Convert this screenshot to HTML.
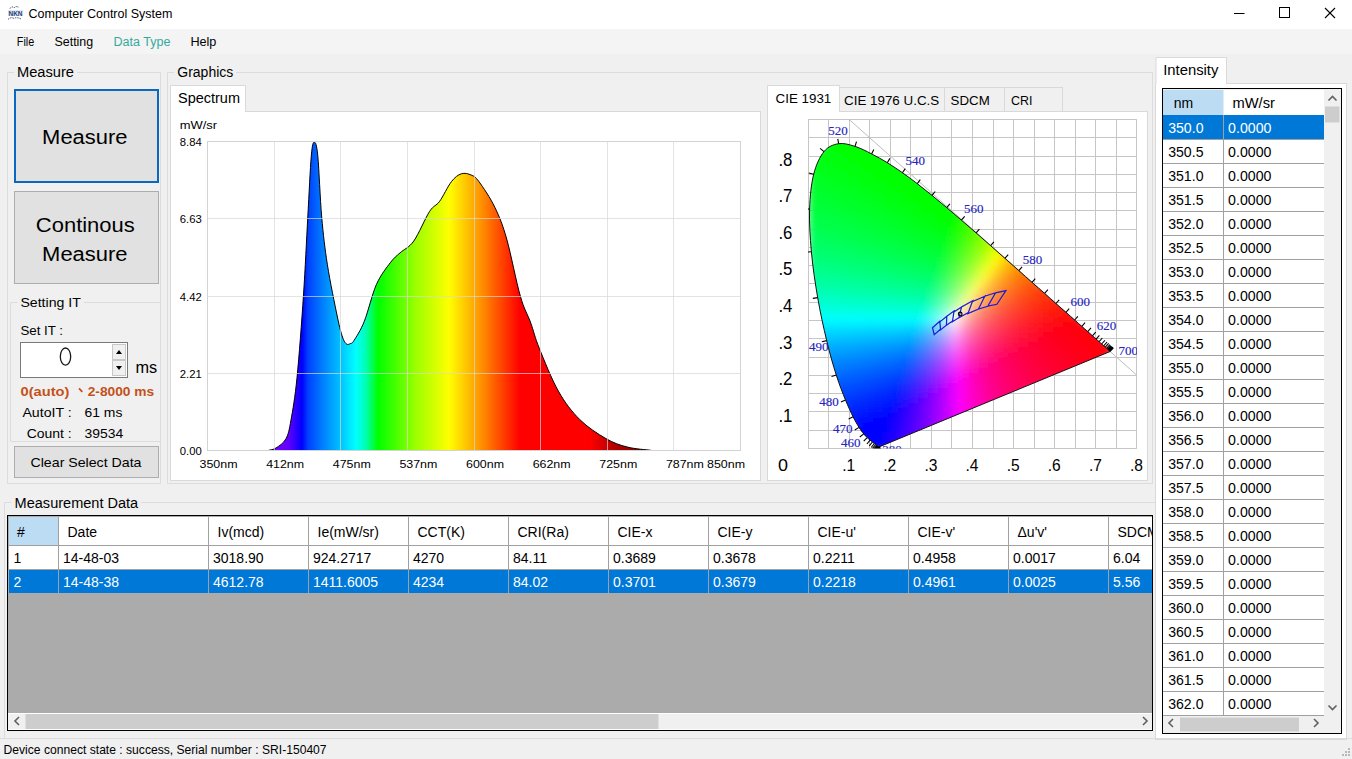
<!DOCTYPE html>
<html><head><meta charset="utf-8"><title>Computer Control System</title>
<style>html,body{margin:0;padding:0;background:#f0f0f0;overflow:hidden;width:1352px;height:759px}svg{display:block}text{white-space:pre}</style>
</head><body><svg width="1352" height="759" viewBox="0 0 1352 759" font-family='"Liberation Sans", sans-serif'><rect x="0" y="0" width="1352" height="759" fill="#f0f0f0" />
<rect x="0" y="0" width="1352" height="29" fill="#ffffff" />
<g><path d="M10,8.5 Q12,5.5 14,8 Q16,5.5 19,7.5" fill="none" stroke="#3a4a6a" stroke-width="1" stroke-dasharray="1.5,1"/><rect x="8" y="10" width="15" height="6" fill="#dfe8f8"/><text x="15.5" y="16" font-size="8" font-weight="bold" fill="#2a3f72" text-anchor="middle" textLength="14" lengthAdjust="spacingAndGlyphs">NKN</text><path d="M8,19.5 Q11,16.5 14,18.5 Q17,16.5 22,19.5" fill="none" stroke="#3a4a6a" stroke-width="1" stroke-dasharray="1.5,1"/></g>
<text x="28.5" y="18" font-size="12.5" fill="#000" textLength="144" lengthAdjust="spacingAndGlyphs" >Computer Control System</text>
<line x1="1234" y1="13.5" x2="1244.5" y2="13.5" stroke="#000" stroke-width="1" />
<rect x="1279.5" y="7.5" width="10" height="10" fill="none" stroke="#000" stroke-width="1" />
<line x1="1325" y1="8" x2="1335" y2="18" stroke="#000" stroke-width="1.1" />
<line x1="1335" y1="8" x2="1325" y2="18" stroke="#000" stroke-width="1.1" />
<defs><linearGradient id="menug" x1="0" y1="0" x2="0" y2="1"><stop offset="0" stop-color="#f6f6f6"/><stop offset="1" stop-color="#f0f0f0"/></linearGradient></defs>
<rect x="0" y="29" width="1352" height="25" fill="#f4f4f4" />
<text x="16.8" y="46" font-size="12.5" fill="#000" textLength="17.4" lengthAdjust="spacingAndGlyphs" >File</text>
<text x="54.5" y="46" font-size="12.5" fill="#000" textLength="38.7" lengthAdjust="spacingAndGlyphs" >Setting</text>
<text x="113.4" y="46" font-size="12.5" fill="#34aa9e" textLength="57" lengthAdjust="spacingAndGlyphs" >Data Type</text>
<text x="190.4" y="46" font-size="12.5" fill="#000" textLength="26" lengthAdjust="spacingAndGlyphs" >Help</text>
<path d="M14,72.5 H7.5 V483.5 H160.5 V72.5 H77" fill="none" stroke="#dcdcdc" stroke-width="1"/>
<text x="17" y="77" font-size="14" fill="#000" textLength="57" lengthAdjust="spacingAndGlyphs" >Measure</text>
<rect x="15" y="90" width="143" height="92" fill="#e1e1e1" stroke="#0a68c0" stroke-width="2" />
<text x="42.1" y="143.7" font-size="20" fill="#000" textLength="85.4" lengthAdjust="spacingAndGlyphs" >Measure</text>
<rect x="14.5" y="191.5" width="144" height="92" fill="#e1e1e1" stroke="#adadad" stroke-width="1" />
<text x="35.8" y="231.9" font-size="20" fill="#000" textLength="99" lengthAdjust="spacingAndGlyphs" >Continous</text>
<text x="42.1" y="260.7" font-size="20" fill="#000" textLength="85.4" lengthAdjust="spacingAndGlyphs" >Measure</text>
<path d="M17.4,302.5 H10.5 V441.5 H160.5 V302.5 H83.8" fill="none" stroke="#dcdcdc" stroke-width="1"/>
<text x="20.4" y="306.7" font-size="13" fill="#000" textLength="60.4" lengthAdjust="spacingAndGlyphs" >Setting IT</text>
<text x="20.4" y="334.8" font-size="13" fill="#000" textLength="42.6" lengthAdjust="spacingAndGlyphs" >Set IT :</text>
<rect x="20.5" y="342.5" width="107" height="35" fill="#ffffff" stroke="#7a7a7a" stroke-width="1" />
<ellipse cx="65.5" cy="356.6" rx="5.2" ry="8.6" fill="none" stroke="#1a1a1a" stroke-width="1.3"/>
<rect x="112.5" y="344.5" width="13" height="15" fill="#f0f0f0" stroke="#c8c8c8" stroke-width="1" />
<rect x="112.5" y="360.5" width="13" height="15" fill="#f0f0f0" stroke="#c8c8c8" stroke-width="1" />
<path d="M116,354 L122,354 L119,350 Z" fill="#000"/>
<path d="M116,366 L122,366 L119,370 Z" fill="#000"/>
<text x="135.5" y="372.6" font-size="16.5" fill="#000" textLength="21.7" lengthAdjust="spacingAndGlyphs" >ms</text>
<text x="20.5" y="395.8" font-size="13" fill="#c4501a" font-weight="bold" textLength="48.9" lengthAdjust="spacingAndGlyphs" >0(auto)</text>
<line x1="79" y1="388.3" x2="82.3" y2="391.8" stroke="#c4501a" stroke-width="1.8" />
<text x="87.7" y="395.8" font-size="13" fill="#c4501a" font-weight="bold" textLength="66.5" lengthAdjust="spacingAndGlyphs" >2-8000 ms</text>
<text x="22.4" y="416.7" font-size="13" fill="#000" textLength="49.3" lengthAdjust="spacingAndGlyphs" >AutoIT :</text>
<text x="84.5" y="416.7" font-size="13" fill="#000" textLength="37.9" lengthAdjust="spacingAndGlyphs" >61 ms</text>
<text x="26.7" y="437.9" font-size="13" fill="#000" textLength="45" lengthAdjust="spacingAndGlyphs" >Count :</text>
<text x="84.5" y="437.9" font-size="13" fill="#000" textLength="38.7" lengthAdjust="spacingAndGlyphs" >39534</text>
<rect x="14.5" y="446.5" width="144" height="31" fill="#e1e1e1" stroke="#adadad" stroke-width="1" />
<text x="30.5" y="467" font-size="13" fill="#000" textLength="111" lengthAdjust="spacingAndGlyphs" >Clear Select Data</text>
<path d="M174,72.5 H167.5 V483.5 H1152.5 V72.5 H236" fill="none" stroke="#dcdcdc" stroke-width="1"/>
<text x="177.3" y="77" font-size="14" fill="#000" textLength="56" lengthAdjust="spacingAndGlyphs" >Graphics</text>
<rect x="170.5" y="111.5" width="590" height="369" fill="#ffffff" stroke="#d9d9d9" stroke-width="1" />
<path d="M170.5,112 V85.5 H245.5 V112" fill="#ffffff" stroke="#d9d9d9" stroke-width="1"/>
<rect x="171" y="111" width="74" height="2" fill="#ffffff" />
<text x="178" y="103.1" font-size="14" fill="#000" textLength="62" lengthAdjust="spacingAndGlyphs" >Spectrum</text>
<defs><linearGradient id="specg" gradientUnits="userSpaceOnUse" x1="268" y1="0" x2="651" y2="0"><stop offset="0.0000" stop-color="#8000ff"/><stop offset="0.0548" stop-color="#6000ff"/><stop offset="0.0888" stop-color="#0000ff"/><stop offset="0.1044" stop-color="#0040ff"/><stop offset="0.1436" stop-color="#0080ff"/><stop offset="0.1880" stop-color="#00c0ff"/><stop offset="0.2298" stop-color="#00ffff"/><stop offset="0.2559" stop-color="#00ffb0"/><stop offset="0.2872" stop-color="#00ff00"/><stop offset="0.3290" stop-color="#40ff00"/><stop offset="0.3838" stop-color="#99ff00"/><stop offset="0.4726" stop-color="#ffff00"/><stop offset="0.5509" stop-color="#ff9900"/><stop offset="0.6580" stop-color="#ff0000"/><stop offset="0.8407" stop-color="#ff0000"/><stop offset="0.9060" stop-color="#b00000"/><stop offset="1.0000" stop-color="#800000"/></linearGradient></defs>
<rect x="207.5" y="141.5" width="533" height="309" fill="#ffffff" stroke="#d3d3d3" stroke-width="1" />
<path d="M268.7,450.3 C269.9,449.9 273.1,449.9 276.0,448.0 C278.9,446.1 283.5,443.4 286.0,438.7 C288.5,434.0 289.2,430.1 291.0,420.0 C292.8,409.9 294.9,398.6 297.0,377.8 C299.1,357.0 301.7,321.8 303.5,295.0 C305.3,268.2 306.5,240.2 307.8,217.0 C309.1,193.8 310.2,168.5 311.3,156.0 C312.4,143.5 313.2,142.2 314.3,142.2 C315.4,142.2 316.6,143.5 317.8,156.0 C319.0,168.5 320.1,198.9 321.7,217.0 C323.3,235.1 324.8,248.1 327.4,264.8 C330.0,281.5 334.9,305.0 337.4,317.0 C339.9,329.0 341.0,332.5 342.5,337.0 C344.0,341.5 345.2,342.9 346.5,344.0 C347.8,345.1 349.2,344.1 350.5,343.5 C351.8,342.9 351.7,344.2 354.0,340.5 C356.3,336.8 360.6,330.7 364.3,321.3 C368.1,311.9 372.1,294.1 376.5,284.3 C380.9,274.5 386.5,267.8 390.4,262.6 C394.3,257.4 396.1,256.5 400.0,252.9 C403.9,249.3 408.9,247.9 413.8,241.0 C418.7,234.1 425.3,218.0 429.6,211.4 C433.9,204.8 435.9,206.4 439.5,201.5 C443.1,196.6 447.8,186.3 451.4,181.7 C455.0,177.1 458.0,174.9 461.3,173.8 C464.6,172.7 468.2,173.7 471.1,175.0 C474.1,176.3 475.0,176.3 479.0,181.7 C483.0,187.1 490.3,197.8 494.9,207.4 C499.5,217.0 502.5,224.2 506.7,239.0 C510.9,253.8 516.3,282.2 520.3,296.0 C524.2,309.8 527.2,313.3 530.4,322.0 C533.6,330.7 534.6,336.8 539.3,348.3 C543.9,359.8 551.6,379.1 558.3,391.0 C565.0,402.9 571.8,411.6 579.7,419.5 C587.6,427.4 597.9,433.9 605.8,438.5 C613.7,443.1 619.6,445.0 627.1,447.0 C634.6,449.0 646.9,449.8 650.9,450.3 L650.9,450.5 L268.7,450.5 Z" fill="url(#specg)"/>
<path d="M268.7,450.3 C269.9,449.9 273.1,449.9 276.0,448.0 C278.9,446.1 283.5,443.4 286.0,438.7 C288.5,434.0 289.2,430.1 291.0,420.0 C292.8,409.9 294.9,398.6 297.0,377.8 C299.1,357.0 301.7,321.8 303.5,295.0 C305.3,268.2 306.5,240.2 307.8,217.0 C309.1,193.8 310.2,168.5 311.3,156.0 C312.4,143.5 313.2,142.2 314.3,142.2 C315.4,142.2 316.6,143.5 317.8,156.0 C319.0,168.5 320.1,198.9 321.7,217.0 C323.3,235.1 324.8,248.1 327.4,264.8 C330.0,281.5 334.9,305.0 337.4,317.0 C339.9,329.0 341.0,332.5 342.5,337.0 C344.0,341.5 345.2,342.9 346.5,344.0 C347.8,345.1 349.2,344.1 350.5,343.5 C351.8,342.9 351.7,344.2 354.0,340.5 C356.3,336.8 360.6,330.7 364.3,321.3 C368.1,311.9 372.1,294.1 376.5,284.3 C380.9,274.5 386.5,267.8 390.4,262.6 C394.3,257.4 396.1,256.5 400.0,252.9 C403.9,249.3 408.9,247.9 413.8,241.0 C418.7,234.1 425.3,218.0 429.6,211.4 C433.9,204.8 435.9,206.4 439.5,201.5 C443.1,196.6 447.8,186.3 451.4,181.7 C455.0,177.1 458.0,174.9 461.3,173.8 C464.6,172.7 468.2,173.7 471.1,175.0 C474.1,176.3 475.0,176.3 479.0,181.7 C483.0,187.1 490.3,197.8 494.9,207.4 C499.5,217.0 502.5,224.2 506.7,239.0 C510.9,253.8 516.3,282.2 520.3,296.0 C524.2,309.8 527.2,313.3 530.4,322.0 C533.6,330.7 534.6,336.8 539.3,348.3 C543.9,359.8 551.6,379.1 558.3,391.0 C565.0,402.9 571.8,411.6 579.7,419.5 C587.6,427.4 597.9,433.9 605.8,438.5 C613.7,443.1 619.6,445.0 627.1,447.0 C634.6,449.0 646.9,449.8 650.9,450.3" fill="none" stroke="#000" stroke-width="1"/>
<line x1="274.5" y1="141.5" x2="274.5" y2="450.5" stroke="rgba(215,215,215,0.7)" stroke-width="1" />
<line x1="340.5" y1="141.5" x2="340.5" y2="450.5" stroke="rgba(215,215,215,0.7)" stroke-width="1" />
<line x1="407.5" y1="141.5" x2="407.5" y2="450.5" stroke="rgba(215,215,215,0.7)" stroke-width="1" />
<line x1="474.5" y1="141.5" x2="474.5" y2="450.5" stroke="rgba(215,215,215,0.7)" stroke-width="1" />
<line x1="540.5" y1="141.5" x2="540.5" y2="450.5" stroke="rgba(215,215,215,0.7)" stroke-width="1" />
<line x1="607.5" y1="141.5" x2="607.5" y2="450.5" stroke="rgba(215,215,215,0.7)" stroke-width="1" />
<line x1="673.5" y1="141.5" x2="673.5" y2="450.5" stroke="rgba(215,215,215,0.7)" stroke-width="1" />
<line x1="207.5" y1="218.5" x2="740.5" y2="218.5" stroke="rgba(215,215,215,0.7)" stroke-width="1" />
<line x1="207.5" y1="296.5" x2="740.5" y2="296.5" stroke="rgba(215,215,215,0.7)" stroke-width="1" />
<line x1="207.5" y1="373.5" x2="740.5" y2="373.5" stroke="rgba(215,215,215,0.7)" stroke-width="1" />
<rect x="207.5" y="141.5" width="533" height="309" fill="none" stroke="#d3d3d3" stroke-width="1" />
<text x="179.7" y="128.8" font-size="10.5" fill="#000" textLength="37.4" lengthAdjust="spacingAndGlyphs" >mW/sr</text>
<text x="179.8" y="146.0" font-size="10.5" fill="#000" textLength="22" lengthAdjust="spacingAndGlyphs" >8.84</text>
<text x="179.8" y="223.25" font-size="10.5" fill="#000" textLength="22" lengthAdjust="spacingAndGlyphs" >6.63</text>
<text x="179.8" y="300.5" font-size="10.5" fill="#000" textLength="22" lengthAdjust="spacingAndGlyphs" >4.42</text>
<text x="179.8" y="377.75" font-size="10.5" fill="#000" textLength="22" lengthAdjust="spacingAndGlyphs" >2.21</text>
<text x="179.8" y="455.0" font-size="10.5" fill="#000" textLength="22" lengthAdjust="spacingAndGlyphs" >0.00</text>
<text x="199.5" y="468" font-size="10.5" fill="#000" textLength="38" lengthAdjust="spacingAndGlyphs" >350nm</text>
<text x="266.125" y="468" font-size="10.5" fill="#000" textLength="38" lengthAdjust="spacingAndGlyphs" >412nm</text>
<text x="332.75" y="468" font-size="10.5" fill="#000" textLength="38" lengthAdjust="spacingAndGlyphs" >475nm</text>
<text x="399.375" y="468" font-size="10.5" fill="#000" textLength="38" lengthAdjust="spacingAndGlyphs" >537nm</text>
<text x="466.0" y="468" font-size="10.5" fill="#000" textLength="38" lengthAdjust="spacingAndGlyphs" >600nm</text>
<text x="532.625" y="468" font-size="10.5" fill="#000" textLength="38" lengthAdjust="spacingAndGlyphs" >662nm</text>
<text x="599.25" y="468" font-size="10.5" fill="#000" textLength="38" lengthAdjust="spacingAndGlyphs" >725nm</text>
<text x="665.875" y="468" font-size="10.5" fill="#000" textLength="38" lengthAdjust="spacingAndGlyphs" >787nm</text>
<text x="707" y="468" font-size="10.5" fill="#000" textLength="38" lengthAdjust="spacingAndGlyphs" >850nm</text>
<rect x="767.5" y="111.5" width="380" height="369" fill="#ffffff" stroke="#d9d9d9" stroke-width="1" />
<rect x="839.5" y="87.5" width="105.0" height="24" fill="#f0f0f0" stroke="#d9d9d9" stroke-width="1" />
<text x="844" y="104.8" font-size="13.5" fill="#000" textLength="95.2" lengthAdjust="spacingAndGlyphs" >CIE 1976 U.C.S</text>
<rect x="944.5" y="87.5" width="60.0" height="24" fill="#f0f0f0" stroke="#d9d9d9" stroke-width="1" />
<text x="950.6" y="104.8" font-size="13.5" fill="#000" textLength="39.1" lengthAdjust="spacingAndGlyphs" >SDCM</text>
<rect x="1004.5" y="87.5" width="58.0" height="24" fill="#f0f0f0" stroke="#d9d9d9" stroke-width="1" />
<text x="1011" y="104.8" font-size="13.5" fill="#000" textLength="21.4" lengthAdjust="spacingAndGlyphs" >CRI</text>
<path d="M767.5,112 V85.5 H839.5 V112" fill="#ffffff" stroke="#d9d9d9" stroke-width="1"/>
<rect x="768" y="111" width="71" height="2" fill="#ffffff" />
<text x="775.6" y="103" font-size="13.5" fill="#000" textLength="55.7" lengthAdjust="spacingAndGlyphs" >CIE 1931</text>
<path d="M808.5,119.5V448.5M828.5,119.5V448.5M849.5,119.5V448.5M869.5,119.5V448.5M890.5,119.5V448.5M910.5,119.5V448.5M931.5,119.5V448.5M951.5,119.5V448.5M972.5,119.5V448.5M993.5,119.5V448.5M1013.5,119.5V448.5M1034.5,119.5V448.5M1054.5,119.5V448.5M1075.5,119.5V448.5M1095.5,119.5V448.5M1116.5,119.5V448.5M1136.5,119.5V448.5M808.0,448.5H1137.0M808.0,430.5H1137.0M808.0,411.5H1137.0M808.0,393.5H1137.0M808.0,375.5H1137.0M808.0,357.5H1137.0M808.0,338.5H1137.0M808.0,320.5H1137.0M808.0,302.5H1137.0M808.0,283.5H1137.0M808.0,265.5H1137.0M808.0,247.5H1137.0M808.0,229.5H1137.0M808.0,210.5H1137.0M808.0,192.5H1137.0M808.0,174.5H1137.0M808.0,156.5H1137.0M808.0,137.5H1137.0M808.0,119.5H1137.0" stroke="#c6c6c6" stroke-width="1" fill="none"/>
<line x1="849.125" y1="119.45999999999998" x2="1137.0" y2="375.38" stroke="#bdbdbd" stroke-width="1" />
<text x="778.4" y="165.71999999999997" font-size="17.5" fill="#000" textLength="14" lengthAdjust="spacingAndGlyphs" >.8</text>
<text x="778.4" y="202.27999999999994" font-size="17.5" fill="#000" textLength="14" lengthAdjust="spacingAndGlyphs" >.7</text>
<text x="778.4" y="238.83999999999995" font-size="17.5" fill="#000" textLength="14" lengthAdjust="spacingAndGlyphs" >.6</text>
<text x="778.4" y="275.4" font-size="17.5" fill="#000" textLength="14" lengthAdjust="spacingAndGlyphs" >.5</text>
<text x="778.4" y="311.96" font-size="17.5" fill="#000" textLength="14" lengthAdjust="spacingAndGlyphs" >.4</text>
<text x="778.4" y="348.52" font-size="17.5" fill="#000" textLength="14" lengthAdjust="spacingAndGlyphs" >.3</text>
<text x="778.4" y="385.08" font-size="17.5" fill="#000" textLength="14" lengthAdjust="spacingAndGlyphs" >.2</text>
<text x="778.4" y="421.64" font-size="17.5" fill="#000" textLength="14" lengthAdjust="spacingAndGlyphs" >.1</text>
<text x="778" y="470.5" font-size="17" fill="#000" textLength="10" lengthAdjust="spacingAndGlyphs" >0</text>
<text x="842.125" y="470.5" font-size="17" fill="#000" textLength="13" lengthAdjust="spacingAndGlyphs" >.1</text>
<text x="883.25" y="470.5" font-size="17" fill="#000" textLength="13" lengthAdjust="spacingAndGlyphs" >.2</text>
<text x="924.375" y="470.5" font-size="17" fill="#000" textLength="13" lengthAdjust="spacingAndGlyphs" >.3</text>
<text x="965.5" y="470.5" font-size="17" fill="#000" textLength="13" lengthAdjust="spacingAndGlyphs" >.4</text>
<text x="1006.625" y="470.5" font-size="17" fill="#000" textLength="13" lengthAdjust="spacingAndGlyphs" >.5</text>
<text x="1047.75" y="470.5" font-size="17" fill="#000" textLength="13" lengthAdjust="spacingAndGlyphs" >.6</text>
<text x="1088.875" y="470.5" font-size="17" fill="#000" textLength="13" lengthAdjust="spacingAndGlyphs" >.7</text>
<text x="1130.0" y="470.5" font-size="17" fill="#000" textLength="13" lengthAdjust="spacingAndGlyphs" >.8</text>
<defs><clipPath id="locclip"><path d="M879.6,446.7 C879.5,446.7 879.0,446.8 878.8,446.7 C878.6,446.7 878.6,446.7 878.5,446.6 C878.4,446.6 878.2,446.5 878.0,446.4 C877.9,446.3 877.7,446.1 877.5,446.0 C877.2,445.8 876.9,445.6 876.6,445.4 C876.3,445.1 876.0,444.8 875.6,444.5 C875.2,444.2 874.8,443.9 874.3,443.5 C873.7,443.0 873.1,442.6 872.4,442.0 C871.7,441.5 871.0,440.9 870.1,440.2 C869.2,439.5 868.3,438.7 867.2,437.6 C866.2,436.6 865.1,435.6 863.7,433.9 C862.4,432.2 860.8,430.2 859.0,427.4 C857.3,424.5 855.3,421.3 853.1,416.8 C850.8,412.2 848.4,406.9 845.5,400.0 C842.7,393.0 839.4,385.0 836.3,375.1 C833.1,365.2 829.8,353.6 826.7,340.6 C823.6,327.7 820.2,312.4 817.7,297.6 C815.1,282.8 812.7,266.4 811.4,251.7 C810.0,236.9 809.2,222.0 809.6,209.1 C810.0,196.2 811.3,183.8 813.7,174.2 C816.1,164.6 819.9,156.7 824.0,151.6 C828.1,146.5 833.4,144.5 838.6,143.7 C843.7,142.8 849.5,144.7 855.0,146.4 C860.5,148.1 866.2,151.1 871.6,153.9 C877.0,156.6 882.2,159.6 887.3,162.7 C892.5,165.9 897.4,169.2 902.4,172.7 C907.4,176.2 912.4,179.9 917.3,183.7 C922.2,187.5 927.1,191.4 932.0,195.4 C936.9,199.4 941.8,203.5 946.7,207.6 C951.6,211.7 956.5,216.0 961.4,220.2 C966.3,224.4 971.2,228.7 976.1,232.9 C980.9,237.2 985.8,241.5 990.6,245.7 C995.4,249.9 1000.2,254.2 1004.9,258.3 C1009.6,262.5 1014.2,266.6 1018.8,270.6 C1023.3,274.6 1027.8,278.6 1032.0,282.4 C1036.3,286.2 1040.6,289.9 1044.6,293.4 C1048.5,296.9 1052.4,300.4 1055.9,303.5 C1059.5,306.7 1062.7,309.6 1065.9,312.3 C1069.0,315.1 1071.9,317.7 1074.6,320.0 C1077.2,322.4 1079.6,324.5 1081.8,326.4 C1084.0,328.3 1085.9,330.1 1087.7,331.6 C1089.5,333.2 1091.0,334.5 1092.4,335.8 C1093.8,337.0 1095.0,338.1 1096.1,339.1 C1097.2,340.1 1098.2,340.9 1099.1,341.7 C1100.0,342.6 1100.9,343.3 1101.6,344.0 C1102.4,344.7 1103.1,345.3 1103.7,345.8 C1104.3,346.3 1104.9,346.8 1105.3,347.2 C1105.8,347.6 1106.2,348.0 1106.6,348.3 C1106.9,348.6 1107.2,348.9 1107.5,349.2 C1107.8,349.4 1108.0,349.6 1108.2,349.8 C1108.4,350.0 1108.5,350.1 1108.7,350.2 C1108.8,350.3 1108.9,350.4 1109.0,350.5 C1109.1,350.6 1109.2,350.7 1109.3,350.8 C1109.4,350.9 1109.5,351.0 1109.6,351.0 C1109.7,351.1 1109.8,351.2 1109.9,351.3 C1109.9,351.3 1110.0,351.4 1110.0,351.4 C1110.1,351.4 1110.1,351.5 1110.1,351.5 C1110.1,351.5 1110.1,351.5 1110.1,351.5 Z"/></clipPath><filter id="blur1" x="-5%" y="-5%" width="110%" height="110%"><feGaussianBlur stdDeviation="4"/></filter></defs>
<g clip-path="url(#locclip)"><g filter="url(#blur1)"><rect x="828" y="137" width="5" height="5" fill="#00ff02"/><rect x="833" y="137" width="5" height="5" fill="#00ff00"/><rect x="838" y="137" width="5" height="5" fill="#00ff00"/><rect x="843" y="137" width="5" height="5" fill="#00ff00"/><rect x="848" y="137" width="5" height="5" fill="#00ff00"/><rect x="853" y="137" width="5" height="5" fill="#00ff00"/><rect x="858" y="137" width="5" height="5" fill="#00ff00"/><rect x="823" y="142" width="5" height="5" fill="#00ff07"/><rect x="828" y="142" width="5" height="5" fill="#00ff05"/><rect x="833" y="142" width="5" height="5" fill="#00ff03"/><rect x="838" y="142" width="5" height="5" fill="#00ff01"/><rect x="843" y="142" width="5" height="5" fill="#00ff00"/><rect x="848" y="142" width="5" height="5" fill="#00ff00"/><rect x="853" y="142" width="5" height="5" fill="#00ff00"/><rect x="858" y="142" width="5" height="5" fill="#00ff00"/><rect x="863" y="142" width="5" height="5" fill="#00ff00"/><rect x="868" y="142" width="5" height="5" fill="#00ff00"/><rect x="818" y="147" width="5" height="5" fill="#00ff0c"/><rect x="823" y="147" width="5" height="5" fill="#00ff0a"/><rect x="828" y="147" width="5" height="5" fill="#00ff08"/><rect x="833" y="147" width="5" height="5" fill="#00ff06"/><rect x="838" y="147" width="5" height="5" fill="#00ff04"/><rect x="843" y="147" width="5" height="5" fill="#00ff02"/><rect x="848" y="147" width="5" height="5" fill="#00ff00"/><rect x="853" y="147" width="5" height="5" fill="#00ff00"/><rect x="858" y="147" width="5" height="5" fill="#00ff00"/><rect x="863" y="147" width="5" height="5" fill="#00ff00"/><rect x="868" y="147" width="5" height="5" fill="#00ff00"/><rect x="873" y="147" width="5" height="5" fill="#00ff00"/><rect x="878" y="147" width="5" height="5" fill="#00ff00"/><rect x="813" y="152" width="5" height="5" fill="#00ff11"/><rect x="818" y="152" width="5" height="5" fill="#00ff0f"/><rect x="823" y="152" width="5" height="5" fill="#00ff0d"/><rect x="828" y="152" width="5" height="5" fill="#00ff0b"/><rect x="833" y="152" width="5" height="5" fill="#00ff09"/><rect x="838" y="152" width="5" height="5" fill="#00ff07"/><rect x="843" y="152" width="5" height="5" fill="#00ff05"/><rect x="848" y="152" width="5" height="5" fill="#00ff03"/><rect x="853" y="152" width="5" height="5" fill="#00ff01"/><rect x="858" y="152" width="5" height="5" fill="#00ff00"/><rect x="863" y="152" width="5" height="5" fill="#00ff00"/><rect x="868" y="152" width="5" height="5" fill="#00ff00"/><rect x="873" y="152" width="5" height="5" fill="#00ff00"/><rect x="878" y="152" width="5" height="5" fill="#00ff00"/><rect x="883" y="152" width="5" height="5" fill="#00ff00"/><rect x="808" y="157" width="5" height="5" fill="#00ff16"/><rect x="813" y="157" width="5" height="5" fill="#00ff15"/><rect x="818" y="157" width="5" height="5" fill="#00ff13"/><rect x="823" y="157" width="5" height="5" fill="#00ff11"/><rect x="828" y="157" width="5" height="5" fill="#00ff0f"/><rect x="833" y="157" width="5" height="5" fill="#00ff0d"/><rect x="838" y="157" width="5" height="5" fill="#00ff0a"/><rect x="843" y="157" width="5" height="5" fill="#00ff08"/><rect x="848" y="157" width="5" height="5" fill="#00ff06"/><rect x="853" y="157" width="5" height="5" fill="#00ff04"/><rect x="858" y="157" width="5" height="5" fill="#00ff02"/><rect x="863" y="157" width="5" height="5" fill="#00ff00"/><rect x="868" y="157" width="5" height="5" fill="#00ff00"/><rect x="873" y="157" width="5" height="5" fill="#00ff00"/><rect x="878" y="157" width="5" height="5" fill="#00ff00"/><rect x="883" y="157" width="5" height="5" fill="#00ff00"/><rect x="888" y="157" width="5" height="5" fill="#00ff00"/><rect x="893" y="157" width="5" height="5" fill="#00ff00"/><rect x="808" y="162" width="5" height="5" fill="#00ff1a"/><rect x="813" y="162" width="5" height="5" fill="#00ff18"/><rect x="818" y="162" width="5" height="5" fill="#00ff16"/><rect x="823" y="162" width="5" height="5" fill="#00ff14"/><rect x="828" y="162" width="5" height="5" fill="#00ff12"/><rect x="833" y="162" width="5" height="5" fill="#00ff10"/><rect x="838" y="162" width="5" height="5" fill="#00ff0e"/><rect x="843" y="162" width="5" height="5" fill="#00ff0c"/><rect x="848" y="162" width="5" height="5" fill="#00ff09"/><rect x="853" y="162" width="5" height="5" fill="#00ff07"/><rect x="858" y="162" width="5" height="5" fill="#00ff05"/><rect x="863" y="162" width="5" height="5" fill="#00ff03"/><rect x="868" y="162" width="5" height="5" fill="#00ff00"/><rect x="873" y="162" width="5" height="5" fill="#00ff00"/><rect x="878" y="162" width="5" height="5" fill="#00ff00"/><rect x="883" y="162" width="5" height="5" fill="#00ff00"/><rect x="888" y="162" width="5" height="5" fill="#00ff00"/><rect x="893" y="162" width="5" height="5" fill="#00ff00"/><rect x="898" y="162" width="5" height="5" fill="#00ff00"/><rect x="808" y="167" width="5" height="5" fill="#00ff1d"/><rect x="813" y="167" width="5" height="5" fill="#00ff1b"/><rect x="818" y="167" width="5" height="5" fill="#00ff19"/><rect x="823" y="167" width="5" height="5" fill="#00ff17"/><rect x="828" y="167" width="5" height="5" fill="#00ff15"/><rect x="833" y="167" width="5" height="5" fill="#00ff13"/><rect x="838" y="167" width="5" height="5" fill="#00ff11"/><rect x="843" y="167" width="5" height="5" fill="#00ff0f"/><rect x="848" y="167" width="5" height="5" fill="#00ff0d"/><rect x="853" y="167" width="5" height="5" fill="#00ff0b"/><rect x="858" y="167" width="5" height="5" fill="#00ff08"/><rect x="863" y="167" width="5" height="5" fill="#00ff06"/><rect x="868" y="167" width="5" height="5" fill="#00ff04"/><rect x="873" y="167" width="5" height="5" fill="#00ff01"/><rect x="878" y="167" width="5" height="5" fill="#00ff00"/><rect x="883" y="167" width="5" height="5" fill="#00ff00"/><rect x="888" y="167" width="5" height="5" fill="#00ff00"/><rect x="893" y="167" width="5" height="5" fill="#00ff00"/><rect x="898" y="167" width="5" height="5" fill="#00ff00"/><rect x="903" y="167" width="5" height="5" fill="#00ff00"/><rect x="908" y="167" width="5" height="5" fill="#00ff00"/><rect x="808" y="172" width="5" height="5" fill="#00ff21"/><rect x="813" y="172" width="5" height="5" fill="#00ff1f"/><rect x="818" y="172" width="5" height="5" fill="#00ff1d"/><rect x="823" y="172" width="5" height="5" fill="#00ff1b"/><rect x="828" y="172" width="5" height="5" fill="#00ff19"/><rect x="833" y="172" width="5" height="5" fill="#00ff17"/><rect x="838" y="172" width="5" height="5" fill="#00ff15"/><rect x="843" y="172" width="5" height="5" fill="#00ff13"/><rect x="848" y="172" width="5" height="5" fill="#00ff11"/><rect x="853" y="172" width="5" height="5" fill="#00ff0e"/><rect x="858" y="172" width="5" height="5" fill="#00ff0c"/><rect x="863" y="172" width="5" height="5" fill="#00ff0a"/><rect x="868" y="172" width="5" height="5" fill="#00ff07"/><rect x="873" y="172" width="5" height="5" fill="#00ff05"/><rect x="878" y="172" width="5" height="5" fill="#00ff02"/><rect x="883" y="172" width="5" height="5" fill="#00ff00"/><rect x="888" y="172" width="5" height="5" fill="#00ff00"/><rect x="893" y="172" width="5" height="5" fill="#00ff00"/><rect x="898" y="172" width="5" height="5" fill="#00ff00"/><rect x="903" y="172" width="5" height="5" fill="#00ff00"/><rect x="908" y="172" width="5" height="5" fill="#00ff00"/><rect x="913" y="172" width="5" height="5" fill="#00ff00"/><rect x="808" y="177" width="5" height="5" fill="#00ff25"/><rect x="813" y="177" width="5" height="5" fill="#00ff23"/><rect x="818" y="177" width="5" height="5" fill="#00ff21"/><rect x="823" y="177" width="5" height="5" fill="#00ff1f"/><rect x="828" y="177" width="5" height="5" fill="#00ff1d"/><rect x="833" y="177" width="5" height="5" fill="#00ff1b"/><rect x="838" y="177" width="5" height="5" fill="#00ff19"/><rect x="843" y="177" width="5" height="5" fill="#00ff16"/><rect x="848" y="177" width="5" height="5" fill="#00ff14"/><rect x="853" y="177" width="5" height="5" fill="#00ff12"/><rect x="858" y="177" width="5" height="5" fill="#00ff10"/><rect x="863" y="177" width="5" height="5" fill="#00ff0d"/><rect x="868" y="177" width="5" height="5" fill="#00ff0b"/><rect x="873" y="177" width="5" height="5" fill="#00ff09"/><rect x="878" y="177" width="5" height="5" fill="#00ff06"/><rect x="883" y="177" width="5" height="5" fill="#00ff04"/><rect x="888" y="177" width="5" height="5" fill="#00ff01"/><rect x="893" y="177" width="5" height="5" fill="#00ff00"/><rect x="898" y="177" width="5" height="5" fill="#00ff00"/><rect x="903" y="177" width="5" height="5" fill="#00ff00"/><rect x="908" y="177" width="5" height="5" fill="#00ff00"/><rect x="913" y="177" width="5" height="5" fill="#00ff00"/><rect x="918" y="177" width="5" height="5" fill="#00ff00"/><rect x="808" y="182" width="5" height="5" fill="#00ff29"/><rect x="813" y="182" width="5" height="5" fill="#00ff27"/><rect x="818" y="182" width="5" height="5" fill="#00ff25"/><rect x="823" y="182" width="5" height="5" fill="#00ff23"/><rect x="828" y="182" width="5" height="5" fill="#00ff21"/><rect x="833" y="182" width="5" height="5" fill="#00ff1f"/><rect x="838" y="182" width="5" height="5" fill="#00ff1d"/><rect x="843" y="182" width="5" height="5" fill="#00ff1a"/><rect x="848" y="182" width="5" height="5" fill="#00ff18"/><rect x="853" y="182" width="5" height="5" fill="#00ff16"/><rect x="858" y="182" width="5" height="5" fill="#00ff14"/><rect x="863" y="182" width="5" height="5" fill="#00ff11"/><rect x="868" y="182" width="5" height="5" fill="#00ff0f"/><rect x="873" y="182" width="5" height="5" fill="#00ff0c"/><rect x="878" y="182" width="5" height="5" fill="#00ff0a"/><rect x="883" y="182" width="5" height="5" fill="#00ff07"/><rect x="888" y="182" width="5" height="5" fill="#00ff05"/><rect x="893" y="182" width="5" height="5" fill="#00ff02"/><rect x="898" y="182" width="5" height="5" fill="#00ff00"/><rect x="903" y="182" width="5" height="5" fill="#00ff00"/><rect x="908" y="182" width="5" height="5" fill="#00ff00"/><rect x="913" y="182" width="5" height="5" fill="#00ff00"/><rect x="918" y="182" width="5" height="5" fill="#00ff00"/><rect x="923" y="182" width="5" height="5" fill="#00ff00"/><rect x="928" y="182" width="5" height="5" fill="#00ff00"/><rect x="808" y="187" width="5" height="5" fill="#00ff2d"/><rect x="813" y="187" width="5" height="5" fill="#00ff2b"/><rect x="818" y="187" width="5" height="5" fill="#00ff29"/><rect x="823" y="187" width="5" height="5" fill="#00ff27"/><rect x="828" y="187" width="5" height="5" fill="#00ff25"/><rect x="833" y="187" width="5" height="5" fill="#00ff23"/><rect x="838" y="187" width="5" height="5" fill="#00ff21"/><rect x="843" y="187" width="5" height="5" fill="#00ff1e"/><rect x="848" y="187" width="5" height="5" fill="#00ff1c"/><rect x="853" y="187" width="5" height="5" fill="#00ff1a"/><rect x="858" y="187" width="5" height="5" fill="#00ff18"/><rect x="863" y="187" width="5" height="5" fill="#00ff15"/><rect x="868" y="187" width="5" height="5" fill="#00ff13"/><rect x="873" y="187" width="5" height="5" fill="#00ff10"/><rect x="878" y="187" width="5" height="5" fill="#00ff0e"/><rect x="883" y="187" width="5" height="5" fill="#00ff0b"/><rect x="888" y="187" width="5" height="5" fill="#00ff09"/><rect x="893" y="187" width="5" height="5" fill="#00ff06"/><rect x="898" y="187" width="5" height="5" fill="#00ff03"/><rect x="903" y="187" width="5" height="5" fill="#00ff01"/><rect x="908" y="187" width="5" height="5" fill="#00ff00"/><rect x="913" y="187" width="5" height="5" fill="#00ff00"/><rect x="918" y="187" width="5" height="5" fill="#00ff00"/><rect x="923" y="187" width="5" height="5" fill="#00ff00"/><rect x="928" y="187" width="5" height="5" fill="#00ff00"/><rect x="933" y="187" width="5" height="5" fill="#00ff00"/><rect x="808" y="192" width="5" height="5" fill="#00ff31"/><rect x="813" y="192" width="5" height="5" fill="#00ff2f"/><rect x="818" y="192" width="5" height="5" fill="#00ff2d"/><rect x="823" y="192" width="5" height="5" fill="#00ff2b"/><rect x="828" y="192" width="5" height="5" fill="#00ff29"/><rect x="833" y="192" width="5" height="5" fill="#00ff27"/><rect x="838" y="192" width="5" height="5" fill="#00ff25"/><rect x="843" y="192" width="5" height="5" fill="#00ff23"/><rect x="848" y="192" width="5" height="5" fill="#00ff20"/><rect x="853" y="192" width="5" height="5" fill="#00ff1e"/><rect x="858" y="192" width="5" height="5" fill="#00ff1c"/><rect x="863" y="192" width="5" height="5" fill="#00ff1a"/><rect x="868" y="192" width="5" height="5" fill="#00ff17"/><rect x="873" y="192" width="5" height="5" fill="#00ff15"/><rect x="878" y="192" width="5" height="5" fill="#00ff12"/><rect x="883" y="192" width="5" height="5" fill="#00ff10"/><rect x="888" y="192" width="5" height="5" fill="#00ff0d"/><rect x="893" y="192" width="5" height="5" fill="#00ff0a"/><rect x="898" y="192" width="5" height="5" fill="#00ff08"/><rect x="903" y="192" width="5" height="5" fill="#00ff05"/><rect x="908" y="192" width="5" height="5" fill="#00ff02"/><rect x="913" y="192" width="5" height="5" fill="#00ff00"/><rect x="918" y="192" width="5" height="5" fill="#00ff00"/><rect x="923" y="192" width="5" height="5" fill="#00ff00"/><rect x="928" y="192" width="5" height="5" fill="#00ff00"/><rect x="933" y="192" width="5" height="5" fill="#00ff00"/><rect x="938" y="192" width="5" height="5" fill="#00ff00"/><rect x="808" y="197" width="5" height="5" fill="#00ff35"/><rect x="813" y="197" width="5" height="5" fill="#00ff33"/><rect x="818" y="197" width="5" height="5" fill="#00ff31"/><rect x="823" y="197" width="5" height="5" fill="#00ff2f"/><rect x="828" y="197" width="5" height="5" fill="#00ff2d"/><rect x="833" y="197" width="5" height="5" fill="#00ff2b"/><rect x="838" y="197" width="5" height="5" fill="#00ff29"/><rect x="843" y="197" width="5" height="5" fill="#00ff27"/><rect x="848" y="197" width="5" height="5" fill="#00ff25"/><rect x="853" y="197" width="5" height="5" fill="#00ff23"/><rect x="858" y="197" width="5" height="5" fill="#00ff20"/><rect x="863" y="197" width="5" height="5" fill="#00ff1e"/><rect x="868" y="197" width="5" height="5" fill="#00ff1b"/><rect x="873" y="197" width="5" height="5" fill="#00ff19"/><rect x="878" y="197" width="5" height="5" fill="#00ff17"/><rect x="883" y="197" width="5" height="5" fill="#00ff14"/><rect x="888" y="197" width="5" height="5" fill="#00ff11"/><rect x="893" y="197" width="5" height="5" fill="#00ff0f"/><rect x="898" y="197" width="5" height="5" fill="#00ff0c"/><rect x="903" y="197" width="5" height="5" fill="#00ff09"/><rect x="908" y="197" width="5" height="5" fill="#00ff06"/><rect x="913" y="197" width="5" height="5" fill="#00ff03"/><rect x="918" y="197" width="5" height="5" fill="#00ff00"/><rect x="923" y="197" width="5" height="5" fill="#00ff00"/><rect x="928" y="197" width="5" height="5" fill="#00ff00"/><rect x="933" y="197" width="5" height="5" fill="#00ff00"/><rect x="938" y="197" width="5" height="5" fill="#00ff00"/><rect x="943" y="197" width="5" height="5" fill="#00ff00"/><rect x="808" y="202" width="5" height="5" fill="#00ff3a"/><rect x="813" y="202" width="5" height="5" fill="#00ff38"/><rect x="818" y="202" width="5" height="5" fill="#00ff36"/><rect x="823" y="202" width="5" height="5" fill="#00ff34"/><rect x="828" y="202" width="5" height="5" fill="#00ff32"/><rect x="833" y="202" width="5" height="5" fill="#00ff30"/><rect x="838" y="202" width="5" height="5" fill="#00ff2e"/><rect x="843" y="202" width="5" height="5" fill="#00ff2c"/><rect x="848" y="202" width="5" height="5" fill="#00ff29"/><rect x="853" y="202" width="5" height="5" fill="#00ff27"/><rect x="858" y="202" width="5" height="5" fill="#00ff25"/><rect x="863" y="202" width="5" height="5" fill="#00ff22"/><rect x="868" y="202" width="5" height="5" fill="#00ff20"/><rect x="873" y="202" width="5" height="5" fill="#00ff1e"/><rect x="878" y="202" width="5" height="5" fill="#00ff1b"/><rect x="883" y="202" width="5" height="5" fill="#00ff19"/><rect x="888" y="202" width="5" height="5" fill="#00ff16"/><rect x="893" y="202" width="5" height="5" fill="#00ff13"/><rect x="898" y="202" width="5" height="5" fill="#00ff10"/><rect x="903" y="202" width="5" height="5" fill="#00ff0e"/><rect x="908" y="202" width="5" height="5" fill="#00ff0b"/><rect x="913" y="202" width="5" height="5" fill="#00ff08"/><rect x="918" y="202" width="5" height="5" fill="#00ff05"/><rect x="923" y="202" width="5" height="5" fill="#00ff02"/><rect x="928" y="202" width="5" height="5" fill="#00ff00"/><rect x="933" y="202" width="5" height="5" fill="#00ff00"/><rect x="938" y="202" width="5" height="5" fill="#00ff00"/><rect x="943" y="202" width="5" height="5" fill="#00ff00"/><rect x="948" y="202" width="5" height="5" fill="#00ff00"/><rect x="808" y="207" width="5" height="5" fill="#00ff3f"/><rect x="813" y="207" width="5" height="5" fill="#00ff3d"/><rect x="818" y="207" width="5" height="5" fill="#00ff3b"/><rect x="823" y="207" width="5" height="5" fill="#00ff39"/><rect x="828" y="207" width="5" height="5" fill="#00ff37"/><rect x="833" y="207" width="5" height="5" fill="#00ff35"/><rect x="838" y="207" width="5" height="5" fill="#00ff33"/><rect x="843" y="207" width="5" height="5" fill="#00ff30"/><rect x="848" y="207" width="5" height="5" fill="#00ff2e"/><rect x="853" y="207" width="5" height="5" fill="#00ff2c"/><rect x="858" y="207" width="5" height="5" fill="#00ff2a"/><rect x="863" y="207" width="5" height="5" fill="#00ff27"/><rect x="868" y="207" width="5" height="5" fill="#00ff25"/><rect x="873" y="207" width="5" height="5" fill="#00ff22"/><rect x="878" y="207" width="5" height="5" fill="#00ff20"/><rect x="883" y="207" width="5" height="5" fill="#00ff1d"/><rect x="888" y="207" width="5" height="5" fill="#00ff1b"/><rect x="893" y="207" width="5" height="5" fill="#00ff18"/><rect x="898" y="207" width="5" height="5" fill="#00ff15"/><rect x="903" y="207" width="5" height="5" fill="#00ff12"/><rect x="908" y="207" width="5" height="5" fill="#00ff0f"/><rect x="913" y="207" width="5" height="5" fill="#00ff0c"/><rect x="918" y="207" width="5" height="5" fill="#00ff09"/><rect x="923" y="207" width="5" height="5" fill="#00ff06"/><rect x="928" y="207" width="5" height="5" fill="#00ff03"/><rect x="933" y="207" width="5" height="5" fill="#00ff00"/><rect x="938" y="207" width="5" height="5" fill="#00ff00"/><rect x="943" y="207" width="5" height="5" fill="#00ff00"/><rect x="948" y="207" width="5" height="5" fill="#00ff00"/><rect x="953" y="207" width="5" height="5" fill="#06ff00"/><rect x="958" y="207" width="5" height="5" fill="#14ff00"/><rect x="808" y="212" width="5" height="5" fill="#00ff44"/><rect x="813" y="212" width="5" height="5" fill="#00ff42"/><rect x="818" y="212" width="5" height="5" fill="#00ff40"/><rect x="823" y="212" width="5" height="5" fill="#00ff3e"/><rect x="828" y="212" width="5" height="5" fill="#00ff3c"/><rect x="833" y="212" width="5" height="5" fill="#00ff3a"/><rect x="838" y="212" width="5" height="5" fill="#00ff38"/><rect x="843" y="212" width="5" height="5" fill="#00ff35"/><rect x="848" y="212" width="5" height="5" fill="#00ff33"/><rect x="853" y="212" width="5" height="5" fill="#00ff31"/><rect x="858" y="212" width="5" height="5" fill="#00ff2f"/><rect x="863" y="212" width="5" height="5" fill="#00ff2c"/><rect x="868" y="212" width="5" height="5" fill="#00ff2a"/><rect x="873" y="212" width="5" height="5" fill="#00ff27"/><rect x="878" y="212" width="5" height="5" fill="#00ff25"/><rect x="883" y="212" width="5" height="5" fill="#00ff22"/><rect x="888" y="212" width="5" height="5" fill="#00ff20"/><rect x="893" y="212" width="5" height="5" fill="#00ff1d"/><rect x="898" y="212" width="5" height="5" fill="#00ff1a"/><rect x="903" y="212" width="5" height="5" fill="#00ff17"/><rect x="908" y="212" width="5" height="5" fill="#00ff14"/><rect x="913" y="212" width="5" height="5" fill="#00ff11"/><rect x="918" y="212" width="5" height="5" fill="#00ff0e"/><rect x="923" y="212" width="5" height="5" fill="#00ff0b"/><rect x="928" y="212" width="5" height="5" fill="#00ff08"/><rect x="933" y="212" width="5" height="5" fill="#00ff05"/><rect x="938" y="212" width="5" height="5" fill="#00ff01"/><rect x="943" y="212" width="5" height="5" fill="#00ff00"/><rect x="948" y="212" width="5" height="5" fill="#00ff00"/><rect x="953" y="212" width="5" height="5" fill="#0bff00"/><rect x="958" y="212" width="5" height="5" fill="#19ff00"/><rect x="963" y="212" width="5" height="5" fill="#27ff00"/><rect x="808" y="217" width="5" height="5" fill="#00ff49"/><rect x="813" y="217" width="5" height="5" fill="#00ff47"/><rect x="818" y="217" width="5" height="5" fill="#00ff45"/><rect x="823" y="217" width="5" height="5" fill="#00ff43"/><rect x="828" y="217" width="5" height="5" fill="#00ff41"/><rect x="833" y="217" width="5" height="5" fill="#00ff3f"/><rect x="838" y="217" width="5" height="5" fill="#00ff3d"/><rect x="843" y="217" width="5" height="5" fill="#00ff3b"/><rect x="848" y="217" width="5" height="5" fill="#00ff38"/><rect x="853" y="217" width="5" height="5" fill="#00ff36"/><rect x="858" y="217" width="5" height="5" fill="#00ff34"/><rect x="863" y="217" width="5" height="5" fill="#00ff32"/><rect x="868" y="217" width="5" height="5" fill="#00ff2f"/><rect x="873" y="217" width="5" height="5" fill="#00ff2d"/><rect x="878" y="217" width="5" height="5" fill="#00ff2a"/><rect x="883" y="217" width="5" height="5" fill="#00ff28"/><rect x="888" y="217" width="5" height="5" fill="#00ff25"/><rect x="893" y="217" width="5" height="5" fill="#00ff22"/><rect x="898" y="217" width="5" height="5" fill="#00ff1f"/><rect x="903" y="217" width="5" height="5" fill="#00ff1d"/><rect x="908" y="217" width="5" height="5" fill="#00ff1a"/><rect x="913" y="217" width="5" height="5" fill="#00ff17"/><rect x="918" y="217" width="5" height="5" fill="#00ff13"/><rect x="923" y="217" width="5" height="5" fill="#00ff10"/><rect x="928" y="217" width="5" height="5" fill="#00ff0d"/><rect x="933" y="217" width="5" height="5" fill="#00ff0a"/><rect x="938" y="217" width="5" height="5" fill="#00ff06"/><rect x="943" y="217" width="5" height="5" fill="#00ff03"/><rect x="948" y="217" width="5" height="5" fill="#01ff00"/><rect x="953" y="217" width="5" height="5" fill="#0fff00"/><rect x="958" y="217" width="5" height="5" fill="#1eff00"/><rect x="963" y="217" width="5" height="5" fill="#2dff00"/><rect x="968" y="217" width="5" height="5" fill="#3cff00"/><rect x="808" y="222" width="5" height="5" fill="#00ff4e"/><rect x="813" y="222" width="5" height="5" fill="#00ff4c"/><rect x="818" y="222" width="5" height="5" fill="#00ff4a"/><rect x="823" y="222" width="5" height="5" fill="#00ff48"/><rect x="828" y="222" width="5" height="5" fill="#00ff46"/><rect x="833" y="222" width="5" height="5" fill="#00ff44"/><rect x="838" y="222" width="5" height="5" fill="#00ff42"/><rect x="843" y="222" width="5" height="5" fill="#00ff40"/><rect x="848" y="222" width="5" height="5" fill="#00ff3e"/><rect x="853" y="222" width="5" height="5" fill="#00ff3c"/><rect x="858" y="222" width="5" height="5" fill="#00ff39"/><rect x="863" y="222" width="5" height="5" fill="#00ff37"/><rect x="868" y="222" width="5" height="5" fill="#00ff35"/><rect x="873" y="222" width="5" height="5" fill="#00ff32"/><rect x="878" y="222" width="5" height="5" fill="#00ff30"/><rect x="883" y="222" width="5" height="5" fill="#00ff2d"/><rect x="888" y="222" width="5" height="5" fill="#00ff2a"/><rect x="893" y="222" width="5" height="5" fill="#00ff28"/><rect x="898" y="222" width="5" height="5" fill="#00ff25"/><rect x="903" y="222" width="5" height="5" fill="#00ff22"/><rect x="908" y="222" width="5" height="5" fill="#00ff1f"/><rect x="913" y="222" width="5" height="5" fill="#00ff1c"/><rect x="918" y="222" width="5" height="5" fill="#00ff19"/><rect x="923" y="222" width="5" height="5" fill="#00ff16"/><rect x="928" y="222" width="5" height="5" fill="#00ff13"/><rect x="933" y="222" width="5" height="5" fill="#00ff0f"/><rect x="938" y="222" width="5" height="5" fill="#00ff0c"/><rect x="943" y="222" width="5" height="5" fill="#00ff08"/><rect x="948" y="222" width="5" height="5" fill="#06ff04"/><rect x="953" y="222" width="5" height="5" fill="#14ff01"/><rect x="958" y="222" width="5" height="5" fill="#23ff00"/><rect x="963" y="222" width="5" height="5" fill="#33ff00"/><rect x="968" y="222" width="5" height="5" fill="#43ff00"/><rect x="973" y="222" width="5" height="5" fill="#53ff00"/><rect x="808" y="227" width="5" height="5" fill="#00ff54"/><rect x="813" y="227" width="5" height="5" fill="#00ff52"/><rect x="818" y="227" width="5" height="5" fill="#00ff50"/><rect x="823" y="227" width="5" height="5" fill="#00ff4e"/><rect x="828" y="227" width="5" height="5" fill="#00ff4c"/><rect x="833" y="227" width="5" height="5" fill="#00ff4a"/><rect x="838" y="227" width="5" height="5" fill="#00ff48"/><rect x="843" y="227" width="5" height="5" fill="#00ff46"/><rect x="848" y="227" width="5" height="5" fill="#00ff44"/><rect x="853" y="227" width="5" height="5" fill="#00ff41"/><rect x="858" y="227" width="5" height="5" fill="#00ff3f"/><rect x="863" y="227" width="5" height="5" fill="#00ff3d"/><rect x="868" y="227" width="5" height="5" fill="#00ff3a"/><rect x="873" y="227" width="5" height="5" fill="#00ff38"/><rect x="878" y="227" width="5" height="5" fill="#00ff35"/><rect x="883" y="227" width="5" height="5" fill="#00ff33"/><rect x="888" y="227" width="5" height="5" fill="#00ff30"/><rect x="893" y="227" width="5" height="5" fill="#00ff2e"/><rect x="898" y="227" width="5" height="5" fill="#00ff2b"/><rect x="903" y="227" width="5" height="5" fill="#00ff28"/><rect x="908" y="227" width="5" height="5" fill="#00ff25"/><rect x="913" y="227" width="5" height="5" fill="#00ff22"/><rect x="918" y="227" width="5" height="5" fill="#00ff1f"/><rect x="923" y="227" width="5" height="5" fill="#00ff1c"/><rect x="928" y="227" width="5" height="5" fill="#00ff18"/><rect x="933" y="227" width="5" height="5" fill="#00ff15"/><rect x="938" y="227" width="5" height="5" fill="#00ff11"/><rect x="943" y="227" width="5" height="5" fill="#00ff0e"/><rect x="948" y="227" width="5" height="5" fill="#0bff0a"/><rect x="953" y="227" width="5" height="5" fill="#1aff06"/><rect x="958" y="227" width="5" height="5" fill="#29ff02"/><rect x="963" y="227" width="5" height="5" fill="#39ff00"/><rect x="968" y="227" width="5" height="5" fill="#4aff00"/><rect x="973" y="227" width="5" height="5" fill="#5bff00"/><rect x="978" y="227" width="5" height="5" fill="#6dff00"/><rect x="808" y="232" width="5" height="5" fill="#00ff5a"/><rect x="813" y="232" width="5" height="5" fill="#00ff58"/><rect x="818" y="232" width="5" height="5" fill="#00ff56"/><rect x="823" y="232" width="5" height="5" fill="#00ff54"/><rect x="828" y="232" width="5" height="5" fill="#00ff52"/><rect x="833" y="232" width="5" height="5" fill="#00ff50"/><rect x="838" y="232" width="5" height="5" fill="#00ff4e"/><rect x="843" y="232" width="5" height="5" fill="#00ff4c"/><rect x="848" y="232" width="5" height="5" fill="#00ff4a"/><rect x="853" y="232" width="5" height="5" fill="#00ff47"/><rect x="858" y="232" width="5" height="5" fill="#00ff45"/><rect x="863" y="232" width="5" height="5" fill="#00ff43"/><rect x="868" y="232" width="5" height="5" fill="#00ff41"/><rect x="873" y="232" width="5" height="5" fill="#00ff3e"/><rect x="878" y="232" width="5" height="5" fill="#00ff3c"/><rect x="883" y="232" width="5" height="5" fill="#00ff39"/><rect x="888" y="232" width="5" height="5" fill="#00ff36"/><rect x="893" y="232" width="5" height="5" fill="#00ff34"/><rect x="898" y="232" width="5" height="5" fill="#00ff31"/><rect x="903" y="232" width="5" height="5" fill="#00ff2e"/><rect x="908" y="232" width="5" height="5" fill="#00ff2b"/><rect x="913" y="232" width="5" height="5" fill="#00ff28"/><rect x="918" y="232" width="5" height="5" fill="#00ff25"/><rect x="923" y="232" width="5" height="5" fill="#00ff22"/><rect x="928" y="232" width="5" height="5" fill="#00ff1e"/><rect x="933" y="232" width="5" height="5" fill="#00ff1b"/><rect x="938" y="232" width="5" height="5" fill="#00ff18"/><rect x="943" y="232" width="5" height="5" fill="#00ff14"/><rect x="948" y="232" width="5" height="5" fill="#10ff10"/><rect x="953" y="232" width="5" height="5" fill="#1fff0c"/><rect x="958" y="232" width="5" height="5" fill="#2fff08"/><rect x="963" y="232" width="5" height="5" fill="#40ff04"/><rect x="968" y="232" width="5" height="5" fill="#51ff00"/><rect x="973" y="232" width="5" height="5" fill="#63ff00"/><rect x="978" y="232" width="5" height="5" fill="#76ff00"/><rect x="983" y="232" width="5" height="5" fill="#89ff00"/><rect x="808" y="237" width="5" height="5" fill="#00ff60"/><rect x="813" y="237" width="5" height="5" fill="#00ff5e"/><rect x="818" y="237" width="5" height="5" fill="#00ff5c"/><rect x="823" y="237" width="5" height="5" fill="#00ff5a"/><rect x="828" y="237" width="5" height="5" fill="#00ff58"/><rect x="833" y="237" width="5" height="5" fill="#00ff56"/><rect x="838" y="237" width="5" height="5" fill="#00ff54"/><rect x="843" y="237" width="5" height="5" fill="#00ff52"/><rect x="848" y="237" width="5" height="5" fill="#00ff50"/><rect x="853" y="237" width="5" height="5" fill="#00ff4e"/><rect x="858" y="237" width="5" height="5" fill="#00ff4c"/><rect x="863" y="237" width="5" height="5" fill="#00ff49"/><rect x="868" y="237" width="5" height="5" fill="#00ff47"/><rect x="873" y="237" width="5" height="5" fill="#00ff45"/><rect x="878" y="237" width="5" height="5" fill="#00ff42"/><rect x="883" y="237" width="5" height="5" fill="#00ff40"/><rect x="888" y="237" width="5" height="5" fill="#00ff3d"/><rect x="893" y="237" width="5" height="5" fill="#00ff3a"/><rect x="898" y="237" width="5" height="5" fill="#00ff37"/><rect x="903" y="237" width="5" height="5" fill="#00ff35"/><rect x="908" y="237" width="5" height="5" fill="#00ff32"/><rect x="913" y="237" width="5" height="5" fill="#00ff2f"/><rect x="918" y="237" width="5" height="5" fill="#00ff2c"/><rect x="923" y="237" width="5" height="5" fill="#00ff28"/><rect x="928" y="237" width="5" height="5" fill="#00ff25"/><rect x="933" y="237" width="5" height="5" fill="#00ff22"/><rect x="938" y="237" width="5" height="5" fill="#00ff1e"/><rect x="943" y="237" width="5" height="5" fill="#05ff1a"/><rect x="948" y="237" width="5" height="5" fill="#15ff17"/><rect x="953" y="237" width="5" height="5" fill="#25ff13"/><rect x="958" y="237" width="5" height="5" fill="#36ff0f"/><rect x="963" y="237" width="5" height="5" fill="#48ff0b"/><rect x="968" y="237" width="5" height="5" fill="#5aff06"/><rect x="973" y="237" width="5" height="5" fill="#6cff02"/><rect x="978" y="237" width="5" height="5" fill="#80ff00"/><rect x="983" y="237" width="5" height="5" fill="#94ff00"/><rect x="988" y="237" width="5" height="5" fill="#a9ff00"/><rect x="808" y="242" width="5" height="5" fill="#00ff66"/><rect x="813" y="242" width="5" height="5" fill="#00ff64"/><rect x="818" y="242" width="5" height="5" fill="#00ff63"/><rect x="823" y="242" width="5" height="5" fill="#00ff61"/><rect x="828" y="242" width="5" height="5" fill="#00ff5f"/><rect x="833" y="242" width="5" height="5" fill="#00ff5d"/><rect x="838" y="242" width="5" height="5" fill="#00ff5b"/><rect x="843" y="242" width="5" height="5" fill="#00ff59"/><rect x="848" y="242" width="5" height="5" fill="#00ff57"/><rect x="853" y="242" width="5" height="5" fill="#00ff55"/><rect x="858" y="242" width="5" height="5" fill="#00ff52"/><rect x="863" y="242" width="5" height="5" fill="#00ff50"/><rect x="868" y="242" width="5" height="5" fill="#00ff4e"/><rect x="873" y="242" width="5" height="5" fill="#00ff4b"/><rect x="878" y="242" width="5" height="5" fill="#00ff49"/><rect x="883" y="242" width="5" height="5" fill="#00ff46"/><rect x="888" y="242" width="5" height="5" fill="#00ff44"/><rect x="893" y="242" width="5" height="5" fill="#00ff41"/><rect x="898" y="242" width="5" height="5" fill="#00ff3e"/><rect x="903" y="242" width="5" height="5" fill="#00ff3c"/><rect x="908" y="242" width="5" height="5" fill="#00ff39"/><rect x="913" y="242" width="5" height="5" fill="#00ff36"/><rect x="918" y="242" width="5" height="5" fill="#00ff32"/><rect x="923" y="242" width="5" height="5" fill="#00ff2f"/><rect x="928" y="242" width="5" height="5" fill="#00ff2c"/><rect x="933" y="242" width="5" height="5" fill="#00ff29"/><rect x="938" y="242" width="5" height="5" fill="#00ff25"/><rect x="943" y="242" width="5" height="5" fill="#0aff21"/><rect x="948" y="242" width="5" height="5" fill="#1bff1e"/><rect x="953" y="242" width="5" height="5" fill="#2cff1a"/><rect x="958" y="242" width="5" height="5" fill="#3dff16"/><rect x="963" y="242" width="5" height="5" fill="#50ff11"/><rect x="968" y="242" width="5" height="5" fill="#63ff0d"/><rect x="973" y="242" width="5" height="5" fill="#76ff09"/><rect x="978" y="242" width="5" height="5" fill="#8aff04"/><rect x="983" y="242" width="5" height="5" fill="#a0ff00"/><rect x="988" y="242" width="5" height="5" fill="#b6ff00"/><rect x="993" y="242" width="5" height="5" fill="#cdff00"/><rect x="998" y="242" width="5" height="5" fill="#e4ff00"/><rect x="808" y="247" width="5" height="5" fill="#00ff6d"/><rect x="813" y="247" width="5" height="5" fill="#00ff6b"/><rect x="818" y="247" width="5" height="5" fill="#00ff69"/><rect x="823" y="247" width="5" height="5" fill="#00ff68"/><rect x="828" y="247" width="5" height="5" fill="#00ff66"/><rect x="833" y="247" width="5" height="5" fill="#00ff64"/><rect x="838" y="247" width="5" height="5" fill="#00ff62"/><rect x="843" y="247" width="5" height="5" fill="#00ff60"/><rect x="848" y="247" width="5" height="5" fill="#00ff5e"/><rect x="853" y="247" width="5" height="5" fill="#00ff5c"/><rect x="858" y="247" width="5" height="5" fill="#00ff59"/><rect x="863" y="247" width="5" height="5" fill="#00ff57"/><rect x="868" y="247" width="5" height="5" fill="#00ff55"/><rect x="873" y="247" width="5" height="5" fill="#00ff53"/><rect x="878" y="247" width="5" height="5" fill="#00ff50"/><rect x="883" y="247" width="5" height="5" fill="#00ff4e"/><rect x="888" y="247" width="5" height="5" fill="#00ff4b"/><rect x="893" y="247" width="5" height="5" fill="#00ff48"/><rect x="898" y="247" width="5" height="5" fill="#00ff46"/><rect x="903" y="247" width="5" height="5" fill="#00ff43"/><rect x="908" y="247" width="5" height="5" fill="#00ff40"/><rect x="913" y="247" width="5" height="5" fill="#00ff3d"/><rect x="918" y="247" width="5" height="5" fill="#00ff3a"/><rect x="923" y="247" width="5" height="5" fill="#00ff37"/><rect x="928" y="247" width="5" height="5" fill="#00ff33"/><rect x="933" y="247" width="5" height="5" fill="#00ff30"/><rect x="938" y="247" width="5" height="5" fill="#00ff2d"/><rect x="943" y="247" width="5" height="5" fill="#10ff29"/><rect x="948" y="247" width="5" height="5" fill="#21ff25"/><rect x="953" y="247" width="5" height="5" fill="#33ff21"/><rect x="958" y="247" width="5" height="5" fill="#45ff1d"/><rect x="963" y="247" width="5" height="5" fill="#58ff19"/><rect x="968" y="247" width="5" height="5" fill="#6cff15"/><rect x="973" y="247" width="5" height="5" fill="#81ff10"/><rect x="978" y="247" width="5" height="5" fill="#96ff0b"/><rect x="983" y="247" width="5" height="5" fill="#acff06"/><rect x="988" y="247" width="5" height="5" fill="#c3ff01"/><rect x="993" y="247" width="5" height="5" fill="#dcff00"/><rect x="998" y="247" width="5" height="5" fill="#f5ff00"/><rect x="1003" y="247" width="5" height="5" fill="#fff000"/><rect x="808" y="252" width="5" height="5" fill="#00ff74"/><rect x="813" y="252" width="5" height="5" fill="#00ff72"/><rect x="818" y="252" width="5" height="5" fill="#00ff71"/><rect x="823" y="252" width="5" height="5" fill="#00ff6f"/><rect x="828" y="252" width="5" height="5" fill="#00ff6d"/><rect x="833" y="252" width="5" height="5" fill="#00ff6b"/><rect x="838" y="252" width="5" height="5" fill="#00ff69"/><rect x="843" y="252" width="5" height="5" fill="#00ff67"/><rect x="848" y="252" width="5" height="5" fill="#00ff65"/><rect x="853" y="252" width="5" height="5" fill="#00ff63"/><rect x="858" y="252" width="5" height="5" fill="#00ff61"/><rect x="863" y="252" width="5" height="5" fill="#00ff5f"/><rect x="868" y="252" width="5" height="5" fill="#00ff5c"/><rect x="873" y="252" width="5" height="5" fill="#00ff5a"/><rect x="878" y="252" width="5" height="5" fill="#00ff58"/><rect x="883" y="252" width="5" height="5" fill="#00ff55"/><rect x="888" y="252" width="5" height="5" fill="#00ff53"/><rect x="893" y="252" width="5" height="5" fill="#00ff50"/><rect x="898" y="252" width="5" height="5" fill="#00ff4d"/><rect x="903" y="252" width="5" height="5" fill="#00ff4b"/><rect x="908" y="252" width="5" height="5" fill="#00ff48"/><rect x="913" y="252" width="5" height="5" fill="#00ff45"/><rect x="918" y="252" width="5" height="5" fill="#00ff42"/><rect x="923" y="252" width="5" height="5" fill="#00ff3f"/><rect x="928" y="252" width="5" height="5" fill="#00ff3b"/><rect x="933" y="252" width="5" height="5" fill="#00ff38"/><rect x="938" y="252" width="5" height="5" fill="#05ff35"/><rect x="943" y="252" width="5" height="5" fill="#16ff31"/><rect x="948" y="252" width="5" height="5" fill="#28ff2d"/><rect x="953" y="252" width="5" height="5" fill="#3aff29"/><rect x="958" y="252" width="5" height="5" fill="#4eff25"/><rect x="963" y="252" width="5" height="5" fill="#62ff21"/><rect x="968" y="252" width="5" height="5" fill="#76ff1d"/><rect x="973" y="252" width="5" height="5" fill="#8cff18"/><rect x="978" y="252" width="5" height="5" fill="#a3ff13"/><rect x="983" y="252" width="5" height="5" fill="#baff0e"/><rect x="988" y="252" width="5" height="5" fill="#d3ff09"/><rect x="993" y="252" width="5" height="5" fill="#ecff04"/><rect x="998" y="252" width="5" height="5" fill="#fff700"/><rect x="1003" y="252" width="5" height="5" fill="#ffe000"/><rect x="1008" y="252" width="5" height="5" fill="#ffcb00"/><rect x="808" y="257" width="5" height="5" fill="#00ff7b"/><rect x="813" y="257" width="5" height="5" fill="#00ff7a"/><rect x="818" y="257" width="5" height="5" fill="#00ff78"/><rect x="823" y="257" width="5" height="5" fill="#00ff76"/><rect x="828" y="257" width="5" height="5" fill="#00ff75"/><rect x="833" y="257" width="5" height="5" fill="#00ff73"/><rect x="838" y="257" width="5" height="5" fill="#00ff71"/><rect x="843" y="257" width="5" height="5" fill="#00ff6f"/><rect x="848" y="257" width="5" height="5" fill="#00ff6d"/><rect x="853" y="257" width="5" height="5" fill="#00ff6b"/><rect x="858" y="257" width="5" height="5" fill="#00ff69"/><rect x="863" y="257" width="5" height="5" fill="#00ff67"/><rect x="868" y="257" width="5" height="5" fill="#00ff65"/><rect x="873" y="257" width="5" height="5" fill="#00ff62"/><rect x="878" y="257" width="5" height="5" fill="#00ff60"/><rect x="883" y="257" width="5" height="5" fill="#00ff5e"/><rect x="888" y="257" width="5" height="5" fill="#00ff5b"/><rect x="893" y="257" width="5" height="5" fill="#00ff58"/><rect x="898" y="257" width="5" height="5" fill="#00ff56"/><rect x="903" y="257" width="5" height="5" fill="#00ff53"/><rect x="908" y="257" width="5" height="5" fill="#00ff50"/><rect x="913" y="257" width="5" height="5" fill="#00ff4d"/><rect x="918" y="257" width="5" height="5" fill="#00ff4a"/><rect x="923" y="257" width="5" height="5" fill="#00ff47"/><rect x="928" y="257" width="5" height="5" fill="#00ff44"/><rect x="933" y="257" width="5" height="5" fill="#00ff41"/><rect x="938" y="257" width="5" height="5" fill="#0aff3d"/><rect x="943" y="257" width="5" height="5" fill="#1cff3a"/><rect x="948" y="257" width="5" height="5" fill="#2fff36"/><rect x="953" y="257" width="5" height="5" fill="#42ff32"/><rect x="958" y="257" width="5" height="5" fill="#57ff2e"/><rect x="963" y="257" width="5" height="5" fill="#6cff2a"/><rect x="968" y="257" width="5" height="5" fill="#81ff25"/><rect x="973" y="257" width="5" height="5" fill="#98ff21"/><rect x="978" y="257" width="5" height="5" fill="#b0ff1c"/><rect x="983" y="257" width="5" height="5" fill="#c9ff17"/><rect x="988" y="257" width="5" height="5" fill="#e3ff12"/><rect x="993" y="257" width="5" height="5" fill="#feff0c"/><rect x="998" y="257" width="5" height="5" fill="#ffe606"/><rect x="1003" y="257" width="5" height="5" fill="#ffd000"/><rect x="1008" y="257" width="5" height="5" fill="#ffbd00"/><rect x="1013" y="257" width="5" height="5" fill="#ffad00"/><rect x="808" y="262" width="5" height="5" fill="#00ff83"/><rect x="813" y="262" width="5" height="5" fill="#00ff82"/><rect x="818" y="262" width="5" height="5" fill="#00ff80"/><rect x="823" y="262" width="5" height="5" fill="#00ff7e"/><rect x="828" y="262" width="5" height="5" fill="#00ff7d"/><rect x="833" y="262" width="5" height="5" fill="#00ff7b"/><rect x="838" y="262" width="5" height="5" fill="#00ff79"/><rect x="843" y="262" width="5" height="5" fill="#00ff77"/><rect x="848" y="262" width="5" height="5" fill="#00ff75"/><rect x="853" y="262" width="5" height="5" fill="#00ff73"/><rect x="858" y="262" width="5" height="5" fill="#00ff71"/><rect x="863" y="262" width="5" height="5" fill="#00ff6f"/><rect x="868" y="262" width="5" height="5" fill="#00ff6d"/><rect x="873" y="262" width="5" height="5" fill="#00ff6b"/><rect x="878" y="262" width="5" height="5" fill="#00ff69"/><rect x="883" y="262" width="5" height="5" fill="#00ff66"/><rect x="888" y="262" width="5" height="5" fill="#00ff64"/><rect x="893" y="262" width="5" height="5" fill="#00ff61"/><rect x="898" y="262" width="5" height="5" fill="#00ff5f"/><rect x="903" y="262" width="5" height="5" fill="#00ff5c"/><rect x="908" y="262" width="5" height="5" fill="#00ff59"/><rect x="913" y="262" width="5" height="5" fill="#00ff56"/><rect x="918" y="262" width="5" height="5" fill="#00ff53"/><rect x="923" y="262" width="5" height="5" fill="#00ff50"/><rect x="928" y="262" width="5" height="5" fill="#00ff4d"/><rect x="933" y="262" width="5" height="5" fill="#00ff4a"/><rect x="938" y="262" width="5" height="5" fill="#10ff46"/><rect x="943" y="262" width="5" height="5" fill="#23ff43"/><rect x="948" y="262" width="5" height="5" fill="#37ff3f"/><rect x="953" y="262" width="5" height="5" fill="#4bff3b"/><rect x="958" y="262" width="5" height="5" fill="#60ff37"/><rect x="963" y="262" width="5" height="5" fill="#77ff33"/><rect x="968" y="262" width="5" height="5" fill="#8eff2f"/><rect x="973" y="262" width="5" height="5" fill="#a6ff2a"/><rect x="978" y="262" width="5" height="5" fill="#bfff25"/><rect x="983" y="262" width="5" height="5" fill="#d9ff20"/><rect x="988" y="262" width="5" height="5" fill="#f5ff1b"/><rect x="993" y="262" width="5" height="5" fill="#ffed14"/><rect x="998" y="262" width="5" height="5" fill="#ffd60d"/><rect x="1003" y="262" width="5" height="5" fill="#ffc107"/><rect x="1008" y="262" width="5" height="5" fill="#ffb002"/><rect x="1013" y="262" width="5" height="5" fill="#ffa000"/><rect x="1018" y="262" width="5" height="5" fill="#ff9300"/><rect x="808" y="267" width="5" height="5" fill="#00ff8b"/><rect x="813" y="267" width="5" height="5" fill="#00ff8a"/><rect x="818" y="267" width="5" height="5" fill="#00ff88"/><rect x="823" y="267" width="5" height="5" fill="#00ff87"/><rect x="828" y="267" width="5" height="5" fill="#00ff85"/><rect x="833" y="267" width="5" height="5" fill="#00ff83"/><rect x="838" y="267" width="5" height="5" fill="#00ff82"/><rect x="843" y="267" width="5" height="5" fill="#00ff80"/><rect x="848" y="267" width="5" height="5" fill="#00ff7e"/><rect x="853" y="267" width="5" height="5" fill="#00ff7c"/><rect x="858" y="267" width="5" height="5" fill="#00ff7a"/><rect x="863" y="267" width="5" height="5" fill="#00ff78"/><rect x="868" y="267" width="5" height="5" fill="#00ff76"/><rect x="873" y="267" width="5" height="5" fill="#00ff74"/><rect x="878" y="267" width="5" height="5" fill="#00ff72"/><rect x="883" y="267" width="5" height="5" fill="#00ff70"/><rect x="888" y="267" width="5" height="5" fill="#00ff6d"/><rect x="893" y="267" width="5" height="5" fill="#00ff6b"/><rect x="898" y="267" width="5" height="5" fill="#00ff68"/><rect x="903" y="267" width="5" height="5" fill="#00ff66"/><rect x="908" y="267" width="5" height="5" fill="#00ff63"/><rect x="913" y="267" width="5" height="5" fill="#00ff60"/><rect x="918" y="267" width="5" height="5" fill="#00ff5d"/><rect x="923" y="267" width="5" height="5" fill="#00ff5a"/><rect x="928" y="267" width="5" height="5" fill="#00ff57"/><rect x="933" y="267" width="5" height="5" fill="#04ff54"/><rect x="938" y="267" width="5" height="5" fill="#17ff50"/><rect x="943" y="267" width="5" height="5" fill="#2bff4d"/><rect x="948" y="267" width="5" height="5" fill="#3fff49"/><rect x="953" y="267" width="5" height="5" fill="#55ff45"/><rect x="958" y="267" width="5" height="5" fill="#6bff41"/><rect x="963" y="267" width="5" height="5" fill="#83ff3d"/><rect x="968" y="267" width="5" height="5" fill="#9bff39"/><rect x="973" y="267" width="5" height="5" fill="#b5ff34"/><rect x="978" y="267" width="5" height="5" fill="#cfff30"/><rect x="983" y="267" width="5" height="5" fill="#ebff2b"/><rect x="988" y="267" width="5" height="5" fill="#fff524"/><rect x="993" y="267" width="5" height="5" fill="#ffdc1b"/><rect x="998" y="267" width="5" height="5" fill="#ffc614"/><rect x="1003" y="267" width="5" height="5" fill="#ffb30e"/><rect x="1008" y="267" width="5" height="5" fill="#ffa309"/><rect x="1013" y="267" width="5" height="5" fill="#ff9504"/><rect x="1018" y="267" width="5" height="5" fill="#ff8800"/><rect x="1023" y="267" width="5" height="5" fill="#ff7d00"/><rect x="808" y="272" width="5" height="5" fill="#00ff94"/><rect x="813" y="272" width="5" height="5" fill="#00ff93"/><rect x="818" y="272" width="5" height="5" fill="#00ff91"/><rect x="823" y="272" width="5" height="5" fill="#00ff90"/><rect x="828" y="272" width="5" height="5" fill="#00ff8e"/><rect x="833" y="272" width="5" height="5" fill="#00ff8d"/><rect x="838" y="272" width="5" height="5" fill="#00ff8b"/><rect x="843" y="272" width="5" height="5" fill="#00ff89"/><rect x="848" y="272" width="5" height="5" fill="#00ff87"/><rect x="853" y="272" width="5" height="5" fill="#00ff86"/><rect x="858" y="272" width="5" height="5" fill="#00ff84"/><rect x="863" y="272" width="5" height="5" fill="#00ff82"/><rect x="868" y="272" width="5" height="5" fill="#00ff80"/><rect x="873" y="272" width="5" height="5" fill="#00ff7e"/><rect x="878" y="272" width="5" height="5" fill="#00ff7c"/><rect x="883" y="272" width="5" height="5" fill="#00ff79"/><rect x="888" y="272" width="5" height="5" fill="#00ff77"/><rect x="893" y="272" width="5" height="5" fill="#00ff75"/><rect x="898" y="272" width="5" height="5" fill="#00ff72"/><rect x="903" y="272" width="5" height="5" fill="#00ff70"/><rect x="908" y="272" width="5" height="5" fill="#00ff6d"/><rect x="913" y="272" width="5" height="5" fill="#00ff6b"/><rect x="918" y="272" width="5" height="5" fill="#00ff68"/><rect x="923" y="272" width="5" height="5" fill="#00ff65"/><rect x="928" y="272" width="5" height="5" fill="#00ff62"/><rect x="933" y="272" width="5" height="5" fill="#0aff5f"/><rect x="938" y="272" width="5" height="5" fill="#1eff5b"/><rect x="943" y="272" width="5" height="5" fill="#33ff58"/><rect x="948" y="272" width="5" height="5" fill="#49ff54"/><rect x="953" y="272" width="5" height="5" fill="#5fff51"/><rect x="958" y="272" width="5" height="5" fill="#77ff4d"/><rect x="963" y="272" width="5" height="5" fill="#90ff49"/><rect x="968" y="272" width="5" height="5" fill="#aaff44"/><rect x="973" y="272" width="5" height="5" fill="#c5ff40"/><rect x="978" y="272" width="5" height="5" fill="#e1ff3b"/><rect x="983" y="272" width="5" height="5" fill="#ffff36"/><rect x="988" y="272" width="5" height="5" fill="#ffe32b"/><rect x="993" y="272" width="5" height="5" fill="#ffcb22"/><rect x="998" y="272" width="5" height="5" fill="#ffb71b"/><rect x="1003" y="272" width="5" height="5" fill="#ffa614"/><rect x="1008" y="272" width="5" height="5" fill="#ff960f"/><rect x="1013" y="272" width="5" height="5" fill="#ff890a"/><rect x="1018" y="272" width="5" height="5" fill="#ff7d05"/><rect x="1023" y="272" width="5" height="5" fill="#ff7301"/><rect x="1028" y="272" width="5" height="5" fill="#ff6a00"/><rect x="808" y="277" width="5" height="5" fill="#00ff9d"/><rect x="813" y="277" width="5" height="5" fill="#00ff9c"/><rect x="818" y="277" width="5" height="5" fill="#00ff9b"/><rect x="823" y="277" width="5" height="5" fill="#00ff99"/><rect x="828" y="277" width="5" height="5" fill="#00ff98"/><rect x="833" y="277" width="5" height="5" fill="#00ff96"/><rect x="838" y="277" width="5" height="5" fill="#00ff95"/><rect x="843" y="277" width="5" height="5" fill="#00ff93"/><rect x="848" y="277" width="5" height="5" fill="#00ff91"/><rect x="853" y="277" width="5" height="5" fill="#00ff90"/><rect x="858" y="277" width="5" height="5" fill="#00ff8e"/><rect x="863" y="277" width="5" height="5" fill="#00ff8c"/><rect x="868" y="277" width="5" height="5" fill="#00ff8a"/><rect x="873" y="277" width="5" height="5" fill="#00ff88"/><rect x="878" y="277" width="5" height="5" fill="#00ff86"/><rect x="883" y="277" width="5" height="5" fill="#00ff84"/><rect x="888" y="277" width="5" height="5" fill="#00ff82"/><rect x="893" y="277" width="5" height="5" fill="#00ff80"/><rect x="898" y="277" width="5" height="5" fill="#00ff7d"/><rect x="903" y="277" width="5" height="5" fill="#00ff7b"/><rect x="908" y="277" width="5" height="5" fill="#00ff79"/><rect x="913" y="277" width="5" height="5" fill="#00ff76"/><rect x="918" y="277" width="5" height="5" fill="#00ff73"/><rect x="923" y="277" width="5" height="5" fill="#00ff70"/><rect x="928" y="277" width="5" height="5" fill="#00ff6d"/><rect x="933" y="277" width="5" height="5" fill="#11ff6a"/><rect x="938" y="277" width="5" height="5" fill="#26ff67"/><rect x="943" y="277" width="5" height="5" fill="#3cff64"/><rect x="948" y="277" width="5" height="5" fill="#53ff60"/><rect x="953" y="277" width="5" height="5" fill="#6bff5d"/><rect x="958" y="277" width="5" height="5" fill="#84ff59"/><rect x="963" y="277" width="5" height="5" fill="#9eff55"/><rect x="968" y="277" width="5" height="5" fill="#baff51"/><rect x="973" y="277" width="5" height="5" fill="#d7ff4c"/><rect x="978" y="277" width="5" height="5" fill="#f5ff48"/><rect x="983" y="277" width="5" height="5" fill="#ffea3d"/><rect x="988" y="277" width="5" height="5" fill="#ffd132"/><rect x="993" y="277" width="5" height="5" fill="#ffbb29"/><rect x="998" y="277" width="5" height="5" fill="#ffa921"/><rect x="1003" y="277" width="5" height="5" fill="#ff991a"/><rect x="1008" y="277" width="5" height="5" fill="#ff8b14"/><rect x="1013" y="277" width="5" height="5" fill="#ff7e0f"/><rect x="1018" y="277" width="5" height="5" fill="#ff730a"/><rect x="1023" y="277" width="5" height="5" fill="#ff6a06"/><rect x="1028" y="277" width="5" height="5" fill="#ff6103"/><rect x="1033" y="277" width="5" height="5" fill="#ff5900"/><rect x="808" y="282" width="5" height="5" fill="#00ffa7"/><rect x="813" y="282" width="5" height="5" fill="#00ffa6"/><rect x="818" y="282" width="5" height="5" fill="#00ffa4"/><rect x="823" y="282" width="5" height="5" fill="#00ffa3"/><rect x="828" y="282" width="5" height="5" fill="#00ffa2"/><rect x="833" y="282" width="5" height="5" fill="#00ffa0"/><rect x="838" y="282" width="5" height="5" fill="#00ff9f"/><rect x="843" y="282" width="5" height="5" fill="#00ff9d"/><rect x="848" y="282" width="5" height="5" fill="#00ff9c"/><rect x="853" y="282" width="5" height="5" fill="#00ff9a"/><rect x="858" y="282" width="5" height="5" fill="#00ff99"/><rect x="863" y="282" width="5" height="5" fill="#00ff97"/><rect x="868" y="282" width="5" height="5" fill="#00ff95"/><rect x="873" y="282" width="5" height="5" fill="#00ff93"/><rect x="878" y="282" width="5" height="5" fill="#00ff92"/><rect x="883" y="282" width="5" height="5" fill="#00ff90"/><rect x="888" y="282" width="5" height="5" fill="#00ff8e"/><rect x="893" y="282" width="5" height="5" fill="#00ff8b"/><rect x="898" y="282" width="5" height="5" fill="#00ff89"/><rect x="903" y="282" width="5" height="5" fill="#00ff87"/><rect x="908" y="282" width="5" height="5" fill="#00ff85"/><rect x="913" y="282" width="5" height="5" fill="#00ff82"/><rect x="918" y="282" width="5" height="5" fill="#00ff80"/><rect x="923" y="282" width="5" height="5" fill="#00ff7d"/><rect x="928" y="282" width="5" height="5" fill="#03ff7a"/><rect x="933" y="282" width="5" height="5" fill="#18ff77"/><rect x="938" y="282" width="5" height="5" fill="#2eff74"/><rect x="943" y="282" width="5" height="5" fill="#46ff71"/><rect x="948" y="282" width="5" height="5" fill="#5eff6e"/><rect x="953" y="282" width="5" height="5" fill="#77ff6a"/><rect x="958" y="282" width="5" height="5" fill="#92ff66"/><rect x="963" y="282" width="5" height="5" fill="#aeff63"/><rect x="968" y="282" width="5" height="5" fill="#cbff5f"/><rect x="973" y="282" width="5" height="5" fill="#ebff5a"/><rect x="978" y="282" width="5" height="5" fill="#fff352"/><rect x="983" y="282" width="5" height="5" fill="#ffd744"/><rect x="988" y="282" width="5" height="5" fill="#ffc039"/><rect x="993" y="282" width="5" height="5" fill="#ffac30"/><rect x="998" y="282" width="5" height="5" fill="#ff9b27"/><rect x="1003" y="282" width="5" height="5" fill="#ff8c20"/><rect x="1008" y="282" width="5" height="5" fill="#ff7f1a"/><rect x="1013" y="282" width="5" height="5" fill="#ff7415"/><rect x="1018" y="282" width="5" height="5" fill="#ff6a10"/><rect x="1023" y="282" width="5" height="5" fill="#ff610b"/><rect x="1028" y="282" width="5" height="5" fill="#ff5807"/><rect x="1033" y="282" width="5" height="5" fill="#ff5104"/><rect x="1038" y="282" width="5" height="5" fill="#ff4a00"/><rect x="1043" y="282" width="5" height="5" fill="#ff4400"/><rect x="808" y="287" width="5" height="5" fill="#00ffb1"/><rect x="813" y="287" width="5" height="5" fill="#00ffb0"/><rect x="818" y="287" width="5" height="5" fill="#00ffaf"/><rect x="823" y="287" width="5" height="5" fill="#00ffae"/><rect x="828" y="287" width="5" height="5" fill="#00ffad"/><rect x="833" y="287" width="5" height="5" fill="#00ffab"/><rect x="838" y="287" width="5" height="5" fill="#00ffaa"/><rect x="843" y="287" width="5" height="5" fill="#00ffa9"/><rect x="848" y="287" width="5" height="5" fill="#00ffa7"/><rect x="853" y="287" width="5" height="5" fill="#00ffa6"/><rect x="858" y="287" width="5" height="5" fill="#00ffa4"/><rect x="863" y="287" width="5" height="5" fill="#00ffa3"/><rect x="868" y="287" width="5" height="5" fill="#00ffa1"/><rect x="873" y="287" width="5" height="5" fill="#00ff9f"/><rect x="878" y="287" width="5" height="5" fill="#00ff9e"/><rect x="883" y="287" width="5" height="5" fill="#00ff9c"/><rect x="888" y="287" width="5" height="5" fill="#00ff9a"/><rect x="893" y="287" width="5" height="5" fill="#00ff98"/><rect x="898" y="287" width="5" height="5" fill="#00ff96"/><rect x="903" y="287" width="5" height="5" fill="#00ff94"/><rect x="908" y="287" width="5" height="5" fill="#00ff92"/><rect x="913" y="287" width="5" height="5" fill="#00ff90"/><rect x="918" y="287" width="5" height="5" fill="#00ff8d"/><rect x="923" y="287" width="5" height="5" fill="#00ff8b"/><rect x="928" y="287" width="5" height="5" fill="#0aff88"/><rect x="933" y="287" width="5" height="5" fill="#20ff85"/><rect x="938" y="287" width="5" height="5" fill="#38ff82"/><rect x="943" y="287" width="5" height="5" fill="#50ff7f"/><rect x="948" y="287" width="5" height="5" fill="#6aff7c"/><rect x="953" y="287" width="5" height="5" fill="#85ff79"/><rect x="958" y="287" width="5" height="5" fill="#a2ff75"/><rect x="963" y="287" width="5" height="5" fill="#c0ff72"/><rect x="968" y="287" width="5" height="5" fill="#dfff6e"/><rect x="973" y="287" width="5" height="5" fill="#fffd69"/><rect x="978" y="287" width="5" height="5" fill="#ffde59"/><rect x="983" y="287" width="5" height="5" fill="#ffc54b"/><rect x="988" y="287" width="5" height="5" fill="#ffb03f"/><rect x="993" y="287" width="5" height="5" fill="#ff9e36"/><rect x="998" y="287" width="5" height="5" fill="#ff8e2d"/><rect x="1003" y="287" width="5" height="5" fill="#ff8026"/><rect x="1008" y="287" width="5" height="5" fill="#ff741f"/><rect x="1013" y="287" width="5" height="5" fill="#ff6a1a"/><rect x="1018" y="287" width="5" height="5" fill="#ff6015"/><rect x="1023" y="287" width="5" height="5" fill="#ff5810"/><rect x="1028" y="287" width="5" height="5" fill="#ff500c"/><rect x="1033" y="287" width="5" height="5" fill="#ff4908"/><rect x="1038" y="287" width="5" height="5" fill="#ff4305"/><rect x="1043" y="287" width="5" height="5" fill="#ff3d02"/><rect x="1048" y="287" width="5" height="5" fill="#ff3800"/><rect x="808" y="292" width="5" height="5" fill="#00ffbc"/><rect x="813" y="292" width="5" height="5" fill="#00ffbb"/><rect x="818" y="292" width="5" height="5" fill="#00ffba"/><rect x="823" y="292" width="5" height="5" fill="#00ffb9"/><rect x="828" y="292" width="5" height="5" fill="#00ffb8"/><rect x="833" y="292" width="5" height="5" fill="#00ffb7"/><rect x="838" y="292" width="5" height="5" fill="#00ffb6"/><rect x="843" y="292" width="5" height="5" fill="#00ffb5"/><rect x="848" y="292" width="5" height="5" fill="#00ffb3"/><rect x="853" y="292" width="5" height="5" fill="#00ffb2"/><rect x="858" y="292" width="5" height="5" fill="#00ffb1"/><rect x="863" y="292" width="5" height="5" fill="#00ffaf"/><rect x="868" y="292" width="5" height="5" fill="#00ffae"/><rect x="873" y="292" width="5" height="5" fill="#00ffac"/><rect x="878" y="292" width="5" height="5" fill="#00ffab"/><rect x="883" y="292" width="5" height="5" fill="#00ffa9"/><rect x="888" y="292" width="5" height="5" fill="#00ffa8"/><rect x="893" y="292" width="5" height="5" fill="#00ffa6"/><rect x="898" y="292" width="5" height="5" fill="#00ffa4"/><rect x="903" y="292" width="5" height="5" fill="#00ffa2"/><rect x="908" y="292" width="5" height="5" fill="#00ffa0"/><rect x="913" y="292" width="5" height="5" fill="#00ff9e"/><rect x="918" y="292" width="5" height="5" fill="#00ff9c"/><rect x="923" y="292" width="5" height="5" fill="#00ff9a"/><rect x="928" y="292" width="5" height="5" fill="#12ff97"/><rect x="933" y="292" width="5" height="5" fill="#29ff95"/><rect x="938" y="292" width="5" height="5" fill="#42ff92"/><rect x="943" y="292" width="5" height="5" fill="#5cff8f"/><rect x="948" y="292" width="5" height="5" fill="#77ff8c"/><rect x="953" y="292" width="5" height="5" fill="#94ff89"/><rect x="958" y="292" width="5" height="5" fill="#b3ff86"/><rect x="963" y="292" width="5" height="5" fill="#d3ff83"/><rect x="968" y="292" width="5" height="5" fill="#f6ff7f"/><rect x="973" y="292" width="5" height="5" fill="#ffe770"/><rect x="978" y="292" width="5" height="5" fill="#ffcb5f"/><rect x="983" y="292" width="5" height="5" fill="#ffb451"/><rect x="988" y="292" width="5" height="5" fill="#ffa045"/><rect x="993" y="292" width="5" height="5" fill="#ff903b"/><rect x="998" y="292" width="5" height="5" fill="#ff8133"/><rect x="1003" y="292" width="5" height="5" fill="#ff752b"/><rect x="1008" y="292" width="5" height="5" fill="#ff6a25"/><rect x="1013" y="292" width="5" height="5" fill="#ff601f"/><rect x="1018" y="292" width="5" height="5" fill="#ff5719"/><rect x="1023" y="292" width="5" height="5" fill="#ff4f15"/><rect x="1028" y="292" width="5" height="5" fill="#ff4810"/><rect x="1033" y="292" width="5" height="5" fill="#ff420c"/><rect x="1038" y="292" width="5" height="5" fill="#ff3c09"/><rect x="1043" y="292" width="5" height="5" fill="#ff3606"/><rect x="1048" y="292" width="5" height="5" fill="#ff3103"/><rect x="1053" y="292" width="5" height="5" fill="#ff2d00"/><rect x="808" y="297" width="5" height="5" fill="#00ffc8"/><rect x="813" y="297" width="5" height="5" fill="#00ffc7"/><rect x="818" y="297" width="5" height="5" fill="#00ffc6"/><rect x="823" y="297" width="5" height="5" fill="#00ffc5"/><rect x="828" y="297" width="5" height="5" fill="#00ffc4"/><rect x="833" y="297" width="5" height="5" fill="#00ffc3"/><rect x="838" y="297" width="5" height="5" fill="#00ffc2"/><rect x="843" y="297" width="5" height="5" fill="#00ffc1"/><rect x="848" y="297" width="5" height="5" fill="#00ffc0"/><rect x="853" y="297" width="5" height="5" fill="#00ffbf"/><rect x="858" y="297" width="5" height="5" fill="#00ffbe"/><rect x="863" y="297" width="5" height="5" fill="#00ffbd"/><rect x="868" y="297" width="5" height="5" fill="#00ffbc"/><rect x="873" y="297" width="5" height="5" fill="#00ffba"/><rect x="878" y="297" width="5" height="5" fill="#00ffb9"/><rect x="883" y="297" width="5" height="5" fill="#00ffb8"/><rect x="888" y="297" width="5" height="5" fill="#00ffb6"/><rect x="893" y="297" width="5" height="5" fill="#00ffb5"/><rect x="898" y="297" width="5" height="5" fill="#00ffb3"/><rect x="903" y="297" width="5" height="5" fill="#00ffb2"/><rect x="908" y="297" width="5" height="5" fill="#00ffb0"/><rect x="913" y="297" width="5" height="5" fill="#00ffae"/><rect x="918" y="297" width="5" height="5" fill="#00ffac"/><rect x="923" y="297" width="5" height="5" fill="#02ffaa"/><rect x="928" y="297" width="5" height="5" fill="#1affa8"/><rect x="933" y="297" width="5" height="5" fill="#33ffa6"/><rect x="938" y="297" width="5" height="5" fill="#4dffa4"/><rect x="943" y="297" width="5" height="5" fill="#69ffa1"/><rect x="948" y="297" width="5" height="5" fill="#87ff9f"/><rect x="953" y="297" width="5" height="5" fill="#a6ff9c"/><rect x="958" y="297" width="5" height="5" fill="#c7ff99"/><rect x="963" y="297" width="5" height="5" fill="#eaff96"/><rect x="968" y="297" width="5" height="5" fill="#fff08a"/><rect x="973" y="297" width="5" height="5" fill="#ffd276"/><rect x="978" y="297" width="5" height="5" fill="#ffb965"/><rect x="983" y="297" width="5" height="5" fill="#ffa457"/><rect x="988" y="297" width="5" height="5" fill="#ff924b"/><rect x="993" y="297" width="5" height="5" fill="#ff8341"/><rect x="998" y="297" width="5" height="5" fill="#ff7538"/><rect x="1003" y="297" width="5" height="5" fill="#ff6a30"/><rect x="1008" y="297" width="5" height="5" fill="#ff602a"/><rect x="1013" y="297" width="5" height="5" fill="#ff5623"/><rect x="1018" y="297" width="5" height="5" fill="#ff4e1e"/><rect x="1023" y="297" width="5" height="5" fill="#ff4719"/><rect x="1028" y="297" width="5" height="5" fill="#ff4015"/><rect x="1033" y="297" width="5" height="5" fill="#ff3a11"/><rect x="1038" y="297" width="5" height="5" fill="#ff350d"/><rect x="1043" y="297" width="5" height="5" fill="#ff300a"/><rect x="1048" y="297" width="5" height="5" fill="#ff2b07"/><rect x="1053" y="297" width="5" height="5" fill="#ff2704"/><rect x="1058" y="297" width="5" height="5" fill="#ff2301"/><rect x="808" y="302" width="5" height="5" fill="#00ffd4"/><rect x="813" y="302" width="5" height="5" fill="#00ffd4"/><rect x="818" y="302" width="5" height="5" fill="#00ffd3"/><rect x="823" y="302" width="5" height="5" fill="#00ffd2"/><rect x="828" y="302" width="5" height="5" fill="#00ffd2"/><rect x="833" y="302" width="5" height="5" fill="#00ffd1"/><rect x="838" y="302" width="5" height="5" fill="#00ffd0"/><rect x="843" y="302" width="5" height="5" fill="#00ffcf"/><rect x="848" y="302" width="5" height="5" fill="#00ffce"/><rect x="853" y="302" width="5" height="5" fill="#00ffcd"/><rect x="858" y="302" width="5" height="5" fill="#00ffcd"/><rect x="863" y="302" width="5" height="5" fill="#00ffcc"/><rect x="868" y="302" width="5" height="5" fill="#00ffcb"/><rect x="873" y="302" width="5" height="5" fill="#00ffca"/><rect x="878" y="302" width="5" height="5" fill="#00ffc9"/><rect x="883" y="302" width="5" height="5" fill="#00ffc7"/><rect x="888" y="302" width="5" height="5" fill="#00ffc6"/><rect x="893" y="302" width="5" height="5" fill="#00ffc5"/><rect x="898" y="302" width="5" height="5" fill="#00ffc4"/><rect x="903" y="302" width="5" height="5" fill="#00ffc2"/><rect x="908" y="302" width="5" height="5" fill="#00ffc1"/><rect x="913" y="302" width="5" height="5" fill="#00ffc0"/><rect x="918" y="302" width="5" height="5" fill="#00ffbe"/><rect x="923" y="302" width="5" height="5" fill="#0affbc"/><rect x="928" y="302" width="5" height="5" fill="#23ffbb"/><rect x="933" y="302" width="5" height="5" fill="#3effb9"/><rect x="938" y="302" width="5" height="5" fill="#5affb7"/><rect x="943" y="302" width="5" height="5" fill="#78ffb5"/><rect x="948" y="302" width="5" height="5" fill="#98ffb3"/><rect x="953" y="302" width="5" height="5" fill="#b9ffb1"/><rect x="958" y="302" width="5" height="5" fill="#ddffae"/><rect x="963" y="302" width="5" height="5" fill="#fffba9"/><rect x="968" y="302" width="5" height="5" fill="#ffd990"/><rect x="973" y="302" width="5" height="5" fill="#ffbe7c"/><rect x="978" y="302" width="5" height="5" fill="#ffa76b"/><rect x="983" y="302" width="5" height="5" fill="#ff945d"/><rect x="988" y="302" width="5" height="5" fill="#ff8451"/><rect x="993" y="302" width="5" height="5" fill="#ff7646"/><rect x="998" y="302" width="5" height="5" fill="#ff6a3d"/><rect x="1003" y="302" width="5" height="5" fill="#ff5f35"/><rect x="1008" y="302" width="5" height="5" fill="#ff562e"/><rect x="1013" y="302" width="5" height="5" fill="#ff4d28"/><rect x="1018" y="302" width="5" height="5" fill="#ff4623"/><rect x="1023" y="302" width="5" height="5" fill="#ff3f1e"/><rect x="1028" y="302" width="5" height="5" fill="#ff3919"/><rect x="1033" y="302" width="5" height="5" fill="#ff3315"/><rect x="1038" y="302" width="5" height="5" fill="#ff2e11"/><rect x="1043" y="302" width="5" height="5" fill="#ff290d"/><rect x="1048" y="302" width="5" height="5" fill="#ff250a"/><rect x="1053" y="302" width="5" height="5" fill="#ff2107"/><rect x="1058" y="302" width="5" height="5" fill="#ff1d05"/><rect x="1063" y="302" width="5" height="5" fill="#ff1a02"/><rect x="808" y="307" width="5" height="5" fill="#00ffe2"/><rect x="813" y="307" width="5" height="5" fill="#00ffe1"/><rect x="818" y="307" width="5" height="5" fill="#00ffe1"/><rect x="823" y="307" width="5" height="5" fill="#00ffe0"/><rect x="828" y="307" width="5" height="5" fill="#00ffe0"/><rect x="833" y="307" width="5" height="5" fill="#00ffdf"/><rect x="838" y="307" width="5" height="5" fill="#00ffdf"/><rect x="843" y="307" width="5" height="5" fill="#00ffde"/><rect x="848" y="307" width="5" height="5" fill="#00ffdd"/><rect x="853" y="307" width="5" height="5" fill="#00ffdd"/><rect x="858" y="307" width="5" height="5" fill="#00ffdc"/><rect x="863" y="307" width="5" height="5" fill="#00ffdc"/><rect x="868" y="307" width="5" height="5" fill="#00ffdb"/><rect x="873" y="307" width="5" height="5" fill="#00ffda"/><rect x="878" y="307" width="5" height="5" fill="#00ffd9"/><rect x="883" y="307" width="5" height="5" fill="#00ffd9"/><rect x="888" y="307" width="5" height="5" fill="#00ffd8"/><rect x="893" y="307" width="5" height="5" fill="#00ffd7"/><rect x="898" y="307" width="5" height="5" fill="#00ffd6"/><rect x="903" y="307" width="5" height="5" fill="#00ffd5"/><rect x="908" y="307" width="5" height="5" fill="#00ffd4"/><rect x="913" y="307" width="5" height="5" fill="#00ffd3"/><rect x="918" y="307" width="5" height="5" fill="#00ffd2"/><rect x="923" y="307" width="5" height="5" fill="#12ffd1"/><rect x="928" y="307" width="5" height="5" fill="#2dffcf"/><rect x="933" y="307" width="5" height="5" fill="#4affce"/><rect x="938" y="307" width="5" height="5" fill="#68ffcd"/><rect x="943" y="307" width="5" height="5" fill="#88ffcb"/><rect x="948" y="307" width="5" height="5" fill="#abffca"/><rect x="953" y="307" width="5" height="5" fill="#cfffc8"/><rect x="958" y="307" width="5" height="5" fill="#f6ffc6"/><rect x="963" y="307" width="5" height="5" fill="#ffe2ae"/><rect x="968" y="307" width="5" height="5" fill="#ffc495"/><rect x="973" y="307" width="5" height="5" fill="#ffab81"/><rect x="978" y="307" width="5" height="5" fill="#ff9770"/><rect x="983" y="307" width="5" height="5" fill="#ff8562"/><rect x="988" y="307" width="5" height="5" fill="#ff7756"/><rect x="993" y="307" width="5" height="5" fill="#ff6a4b"/><rect x="998" y="307" width="5" height="5" fill="#ff5f42"/><rect x="1003" y="307" width="5" height="5" fill="#ff553a"/><rect x="1008" y="307" width="5" height="5" fill="#ff4c33"/><rect x="1013" y="307" width="5" height="5" fill="#ff452d"/><rect x="1018" y="307" width="5" height="5" fill="#ff3e27"/><rect x="1023" y="307" width="5" height="5" fill="#ff3722"/><rect x="1028" y="307" width="5" height="5" fill="#ff321d"/><rect x="1033" y="307" width="5" height="5" fill="#ff2c19"/><rect x="1038" y="307" width="5" height="5" fill="#ff2815"/><rect x="1043" y="307" width="5" height="5" fill="#ff2311"/><rect x="1048" y="307" width="5" height="5" fill="#ff1f0e"/><rect x="1053" y="307" width="5" height="5" fill="#ff1b0b"/><rect x="1058" y="307" width="5" height="5" fill="#ff1808"/><rect x="1063" y="307" width="5" height="5" fill="#ff1505"/><rect x="1068" y="307" width="5" height="5" fill="#ff1203"/><rect x="813" y="312" width="5" height="5" fill="#00fff0"/><rect x="818" y="312" width="5" height="5" fill="#00ffef"/><rect x="823" y="312" width="5" height="5" fill="#00ffef"/><rect x="828" y="312" width="5" height="5" fill="#00ffef"/><rect x="833" y="312" width="5" height="5" fill="#00ffef"/><rect x="838" y="312" width="5" height="5" fill="#00ffee"/><rect x="843" y="312" width="5" height="5" fill="#00ffee"/><rect x="848" y="312" width="5" height="5" fill="#00ffee"/><rect x="853" y="312" width="5" height="5" fill="#00ffed"/><rect x="858" y="312" width="5" height="5" fill="#00ffed"/><rect x="863" y="312" width="5" height="5" fill="#00ffed"/><rect x="868" y="312" width="5" height="5" fill="#00ffec"/><rect x="873" y="312" width="5" height="5" fill="#00ffec"/><rect x="878" y="312" width="5" height="5" fill="#00ffec"/><rect x="883" y="312" width="5" height="5" fill="#00ffeb"/><rect x="888" y="312" width="5" height="5" fill="#00ffeb"/><rect x="893" y="312" width="5" height="5" fill="#00ffea"/><rect x="898" y="312" width="5" height="5" fill="#00ffea"/><rect x="903" y="312" width="5" height="5" fill="#00ffea"/><rect x="908" y="312" width="5" height="5" fill="#00ffe9"/><rect x="913" y="312" width="5" height="5" fill="#00ffe9"/><rect x="918" y="312" width="5" height="5" fill="#01ffe8"/><rect x="923" y="312" width="5" height="5" fill="#1cffe7"/><rect x="928" y="312" width="5" height="5" fill="#39ffe7"/><rect x="933" y="312" width="5" height="5" fill="#58ffe6"/><rect x="938" y="312" width="5" height="5" fill="#78ffe5"/><rect x="943" y="312" width="5" height="5" fill="#9bffe5"/><rect x="948" y="312" width="5" height="5" fill="#c0ffe4"/><rect x="953" y="312" width="5" height="5" fill="#e8ffe3"/><rect x="958" y="312" width="5" height="5" fill="#ffedd2"/><rect x="963" y="312" width="5" height="5" fill="#ffcbb3"/><rect x="968" y="312" width="5" height="5" fill="#ffb09a"/><rect x="973" y="312" width="5" height="5" fill="#ff9a86"/><rect x="978" y="312" width="5" height="5" fill="#ff8775"/><rect x="983" y="312" width="5" height="5" fill="#ff7767"/><rect x="988" y="312" width="5" height="5" fill="#ff6a5b"/><rect x="993" y="312" width="5" height="5" fill="#ff5e50"/><rect x="998" y="312" width="5" height="5" fill="#ff5447"/><rect x="1003" y="312" width="5" height="5" fill="#ff4b3f"/><rect x="1008" y="312" width="5" height="5" fill="#ff4337"/><rect x="1013" y="312" width="5" height="5" fill="#ff3c31"/><rect x="1018" y="312" width="5" height="5" fill="#ff362b"/><rect x="1023" y="312" width="5" height="5" fill="#ff3026"/><rect x="1028" y="312" width="5" height="5" fill="#ff2a21"/><rect x="1033" y="312" width="5" height="5" fill="#ff261d"/><rect x="1038" y="312" width="5" height="5" fill="#ff2119"/><rect x="1043" y="312" width="5" height="5" fill="#ff1d15"/><rect x="1048" y="312" width="5" height="5" fill="#ff1911"/><rect x="1053" y="312" width="5" height="5" fill="#ff160e"/><rect x="1058" y="312" width="5" height="5" fill="#ff130b"/><rect x="1063" y="312" width="5" height="5" fill="#ff1009"/><rect x="1068" y="312" width="5" height="5" fill="#ff0d06"/><rect x="1073" y="312" width="5" height="5" fill="#ff0a04"/><rect x="813" y="317" width="5" height="5" fill="#00ffff"/><rect x="818" y="317" width="5" height="5" fill="#00ffff"/><rect x="823" y="317" width="5" height="5" fill="#00ffff"/><rect x="828" y="317" width="5" height="5" fill="#00ffff"/><rect x="833" y="317" width="5" height="5" fill="#00ffff"/><rect x="838" y="317" width="5" height="5" fill="#00ffff"/><rect x="843" y="317" width="5" height="5" fill="#00ffff"/><rect x="848" y="317" width="5" height="5" fill="#00feff"/><rect x="853" y="317" width="5" height="5" fill="#00feff"/><rect x="858" y="317" width="5" height="5" fill="#00feff"/><rect x="863" y="317" width="5" height="5" fill="#00feff"/><rect x="868" y="317" width="5" height="5" fill="#00feff"/><rect x="873" y="317" width="5" height="5" fill="#00feff"/><rect x="878" y="317" width="5" height="5" fill="#00feff"/><rect x="883" y="317" width="5" height="5" fill="#00feff"/><rect x="888" y="317" width="5" height="5" fill="#00feff"/><rect x="893" y="317" width="5" height="5" fill="#00feff"/><rect x="898" y="317" width="5" height="5" fill="#00feff"/><rect x="903" y="317" width="5" height="5" fill="#00feff"/><rect x="908" y="317" width="5" height="5" fill="#00feff"/><rect x="913" y="317" width="5" height="5" fill="#00fdff"/><rect x="918" y="317" width="5" height="5" fill="#0afdff"/><rect x="923" y="317" width="5" height="5" fill="#27fdff"/><rect x="928" y="317" width="5" height="5" fill="#46fdff"/><rect x="933" y="317" width="5" height="5" fill="#66fdff"/><rect x="938" y="317" width="5" height="5" fill="#89fdff"/><rect x="943" y="317" width="5" height="5" fill="#affdff"/><rect x="948" y="317" width="5" height="5" fill="#d7fcff"/><rect x="953" y="317" width="5" height="5" fill="#fff9fc"/><rect x="958" y="317" width="5" height="5" fill="#ffd3d5"/><rect x="963" y="317" width="5" height="5" fill="#ffb5b7"/><rect x="968" y="317" width="5" height="5" fill="#ff9d9f"/><rect x="973" y="317" width="5" height="5" fill="#ff898b"/><rect x="978" y="317" width="5" height="5" fill="#ff787a"/><rect x="983" y="317" width="5" height="5" fill="#ff6a6c"/><rect x="988" y="317" width="5" height="5" fill="#ff5e60"/><rect x="993" y="317" width="5" height="5" fill="#ff5355"/><rect x="998" y="317" width="5" height="5" fill="#ff4a4b"/><rect x="1003" y="317" width="5" height="5" fill="#ff4243"/><rect x="1008" y="317" width="5" height="5" fill="#ff3a3c"/><rect x="1013" y="317" width="5" height="5" fill="#ff3435"/><rect x="1018" y="317" width="5" height="5" fill="#ff2e2f"/><rect x="1023" y="317" width="5" height="5" fill="#ff282a"/><rect x="1028" y="317" width="5" height="5" fill="#ff2425"/><rect x="1033" y="317" width="5" height="5" fill="#ff1f20"/><rect x="1038" y="317" width="5" height="5" fill="#ff1b1c"/><rect x="1043" y="317" width="5" height="5" fill="#ff1718"/><rect x="1048" y="317" width="5" height="5" fill="#ff1415"/><rect x="1053" y="317" width="5" height="5" fill="#ff1012"/><rect x="1058" y="317" width="5" height="5" fill="#ff0d0f"/><rect x="1063" y="317" width="5" height="5" fill="#ff0b0c"/><rect x="1068" y="317" width="5" height="5" fill="#ff0809"/><rect x="1073" y="317" width="5" height="5" fill="#ff0607"/><rect x="1078" y="317" width="5" height="5" fill="#ff0304"/><rect x="813" y="322" width="5" height="5" fill="#00efff"/><rect x="818" y="322" width="5" height="5" fill="#00efff"/><rect x="823" y="322" width="5" height="5" fill="#00eeff"/><rect x="828" y="322" width="5" height="5" fill="#00eeff"/><rect x="833" y="322" width="5" height="5" fill="#00eeff"/><rect x="838" y="322" width="5" height="5" fill="#00edff"/><rect x="843" y="322" width="5" height="5" fill="#00edff"/><rect x="848" y="322" width="5" height="5" fill="#00edff"/><rect x="853" y="322" width="5" height="5" fill="#00ecff"/><rect x="858" y="322" width="5" height="5" fill="#00ecff"/><rect x="863" y="322" width="5" height="5" fill="#00ebff"/><rect x="868" y="322" width="5" height="5" fill="#00ebff"/><rect x="873" y="322" width="5" height="5" fill="#00eaff"/><rect x="878" y="322" width="5" height="5" fill="#00eaff"/><rect x="883" y="322" width="5" height="5" fill="#00e9ff"/><rect x="888" y="322" width="5" height="5" fill="#00e9ff"/><rect x="893" y="322" width="5" height="5" fill="#00e8ff"/><rect x="898" y="322" width="5" height="5" fill="#00e7ff"/><rect x="903" y="322" width="5" height="5" fill="#00e7ff"/><rect x="908" y="322" width="5" height="5" fill="#00e6ff"/><rect x="913" y="322" width="5" height="5" fill="#00e5ff"/><rect x="918" y="322" width="5" height="5" fill="#12e4ff"/><rect x="923" y="322" width="5" height="5" fill="#2ee4ff"/><rect x="928" y="322" width="5" height="5" fill="#4be3ff"/><rect x="933" y="322" width="5" height="5" fill="#6be2ff"/><rect x="938" y="322" width="5" height="5" fill="#8de1ff"/><rect x="943" y="322" width="5" height="5" fill="#b1e0ff"/><rect x="948" y="322" width="5" height="5" fill="#d7deff"/><rect x="953" y="322" width="5" height="5" fill="#ffdcfe"/><rect x="958" y="322" width="5" height="5" fill="#ffbbd9"/><rect x="963" y="322" width="5" height="5" fill="#ffa1bb"/><rect x="968" y="322" width="5" height="5" fill="#ff8ba3"/><rect x="973" y="322" width="5" height="5" fill="#ff798f"/><rect x="978" y="322" width="5" height="5" fill="#ff6a7f"/><rect x="983" y="322" width="5" height="5" fill="#ff5d70"/><rect x="988" y="322" width="5" height="5" fill="#ff5264"/><rect x="993" y="322" width="5" height="5" fill="#ff4959"/><rect x="998" y="322" width="5" height="5" fill="#ff4050"/><rect x="1003" y="322" width="5" height="5" fill="#ff3947"/><rect x="1008" y="322" width="5" height="5" fill="#ff3240"/><rect x="1013" y="322" width="5" height="5" fill="#ff2c39"/><rect x="1018" y="322" width="5" height="5" fill="#ff2633"/><rect x="1023" y="322" width="5" height="5" fill="#ff212e"/><rect x="1028" y="322" width="5" height="5" fill="#ff1d29"/><rect x="1033" y="322" width="5" height="5" fill="#ff1924"/><rect x="1038" y="322" width="5" height="5" fill="#ff1520"/><rect x="1043" y="322" width="5" height="5" fill="#ff111c"/><rect x="1048" y="322" width="5" height="5" fill="#ff0e18"/><rect x="1053" y="322" width="5" height="5" fill="#ff0b15"/><rect x="1058" y="322" width="5" height="5" fill="#ff0812"/><rect x="1063" y="322" width="5" height="5" fill="#ff060f"/><rect x="1068" y="322" width="5" height="5" fill="#ff030c"/><rect x="1073" y="322" width="5" height="5" fill="#ff010a"/><rect x="1078" y="322" width="5" height="5" fill="#ff0007"/><rect x="1083" y="322" width="5" height="5" fill="#ff0005"/><rect x="1088" y="322" width="5" height="5" fill="#ff0003"/><rect x="813" y="327" width="5" height="5" fill="#00e0ff"/><rect x="818" y="327" width="5" height="5" fill="#00e0ff"/><rect x="823" y="327" width="5" height="5" fill="#00dfff"/><rect x="828" y="327" width="5" height="5" fill="#00deff"/><rect x="833" y="327" width="5" height="5" fill="#00deff"/><rect x="838" y="327" width="5" height="5" fill="#00ddff"/><rect x="843" y="327" width="5" height="5" fill="#00dcff"/><rect x="848" y="327" width="5" height="5" fill="#00dcff"/><rect x="853" y="327" width="5" height="5" fill="#00dbff"/><rect x="858" y="327" width="5" height="5" fill="#00daff"/><rect x="863" y="327" width="5" height="5" fill="#00d9ff"/><rect x="868" y="327" width="5" height="5" fill="#00d8ff"/><rect x="873" y="327" width="5" height="5" fill="#00d8ff"/><rect x="878" y="327" width="5" height="5" fill="#00d7ff"/><rect x="883" y="327" width="5" height="5" fill="#00d6ff"/><rect x="888" y="327" width="5" height="5" fill="#00d5ff"/><rect x="893" y="327" width="5" height="5" fill="#00d4ff"/><rect x="898" y="327" width="5" height="5" fill="#00d2ff"/><rect x="903" y="327" width="5" height="5" fill="#00d1ff"/><rect x="908" y="327" width="5" height="5" fill="#00d0ff"/><rect x="913" y="327" width="5" height="5" fill="#00cfff"/><rect x="918" y="327" width="5" height="5" fill="#19cdff"/><rect x="923" y="327" width="5" height="5" fill="#34ccff"/><rect x="928" y="327" width="5" height="5" fill="#51caff"/><rect x="933" y="327" width="5" height="5" fill="#6fc9ff"/><rect x="938" y="327" width="5" height="5" fill="#90c7ff"/><rect x="943" y="327" width="5" height="5" fill="#b2c5ff"/><rect x="948" y="327" width="5" height="5" fill="#d7c3ff"/><rect x="953" y="327" width="5" height="5" fill="#fec1ff"/><rect x="958" y="327" width="5" height="5" fill="#ffa5dc"/><rect x="963" y="327" width="5" height="5" fill="#ff8dbf"/><rect x="968" y="327" width="5" height="5" fill="#ff7aa8"/><rect x="973" y="327" width="5" height="5" fill="#ff6a94"/><rect x="978" y="327" width="5" height="5" fill="#ff5d83"/><rect x="983" y="327" width="5" height="5" fill="#ff5175"/><rect x="988" y="327" width="5" height="5" fill="#ff4768"/><rect x="993" y="327" width="5" height="5" fill="#ff3e5e"/><rect x="998" y="327" width="5" height="5" fill="#ff3754"/><rect x="1003" y="327" width="5" height="5" fill="#ff304c"/><rect x="1008" y="327" width="5" height="5" fill="#ff2a44"/><rect x="1013" y="327" width="5" height="5" fill="#ff243d"/><rect x="1018" y="327" width="5" height="5" fill="#ff1f37"/><rect x="1023" y="327" width="5" height="5" fill="#ff1b31"/><rect x="1028" y="327" width="5" height="5" fill="#ff162c"/><rect x="1033" y="327" width="5" height="5" fill="#ff1328"/><rect x="1038" y="327" width="5" height="5" fill="#ff0f23"/><rect x="1043" y="327" width="5" height="5" fill="#ff0c1f"/><rect x="1048" y="327" width="5" height="5" fill="#ff091c"/><rect x="1053" y="327" width="5" height="5" fill="#ff0618"/><rect x="1058" y="327" width="5" height="5" fill="#ff0315"/><rect x="1063" y="327" width="5" height="5" fill="#ff0112"/><rect x="1068" y="327" width="5" height="5" fill="#ff000f"/><rect x="1073" y="327" width="5" height="5" fill="#ff000d"/><rect x="1078" y="327" width="5" height="5" fill="#ff000a"/><rect x="1083" y="327" width="5" height="5" fill="#ff0008"/><rect x="1088" y="327" width="5" height="5" fill="#ff0006"/><rect x="1093" y="327" width="5" height="5" fill="#ff0004"/><rect x="813" y="332" width="5" height="5" fill="#00d2ff"/><rect x="818" y="332" width="5" height="5" fill="#00d1ff"/><rect x="823" y="332" width="5" height="5" fill="#00d0ff"/><rect x="828" y="332" width="5" height="5" fill="#00cfff"/><rect x="833" y="332" width="5" height="5" fill="#00cfff"/><rect x="838" y="332" width="5" height="5" fill="#00ceff"/><rect x="843" y="332" width="5" height="5" fill="#00cdff"/><rect x="848" y="332" width="5" height="5" fill="#00ccff"/><rect x="853" y="332" width="5" height="5" fill="#00cbff"/><rect x="858" y="332" width="5" height="5" fill="#00caff"/><rect x="863" y="332" width="5" height="5" fill="#00c8ff"/><rect x="868" y="332" width="5" height="5" fill="#00c7ff"/><rect x="873" y="332" width="5" height="5" fill="#00c6ff"/><rect x="878" y="332" width="5" height="5" fill="#00c5ff"/><rect x="883" y="332" width="5" height="5" fill="#00c3ff"/><rect x="888" y="332" width="5" height="5" fill="#00c2ff"/><rect x="893" y="332" width="5" height="5" fill="#00c1ff"/><rect x="898" y="332" width="5" height="5" fill="#00bfff"/><rect x="903" y="332" width="5" height="5" fill="#00bdff"/><rect x="908" y="332" width="5" height="5" fill="#00bcff"/><rect x="913" y="332" width="5" height="5" fill="#07baff"/><rect x="918" y="332" width="5" height="5" fill="#20b8ff"/><rect x="923" y="332" width="5" height="5" fill="#3ab6ff"/><rect x="928" y="332" width="5" height="5" fill="#56b4ff"/><rect x="933" y="332" width="5" height="5" fill="#73b2ff"/><rect x="938" y="332" width="5" height="5" fill="#92b0ff"/><rect x="943" y="332" width="5" height="5" fill="#b3adff"/><rect x="948" y="332" width="5" height="5" fill="#d6aaff"/><rect x="953" y="332" width="5" height="5" fill="#fca8ff"/><rect x="958" y="332" width="5" height="5" fill="#ff90df"/><rect x="963" y="332" width="5" height="5" fill="#ff7bc3"/><rect x="968" y="332" width="5" height="5" fill="#ff6aab"/><rect x="973" y="332" width="5" height="5" fill="#ff5c98"/><rect x="978" y="332" width="5" height="5" fill="#ff5087"/><rect x="983" y="332" width="5" height="5" fill="#ff4679"/><rect x="988" y="332" width="5" height="5" fill="#ff3c6d"/><rect x="993" y="332" width="5" height="5" fill="#ff3562"/><rect x="998" y="332" width="5" height="5" fill="#ff2d58"/><rect x="1003" y="332" width="5" height="5" fill="#ff2750"/><rect x="1008" y="332" width="5" height="5" fill="#ff2248"/><rect x="1013" y="332" width="5" height="5" fill="#ff1d41"/><rect x="1018" y="332" width="5" height="5" fill="#ff183b"/><rect x="1023" y="332" width="5" height="5" fill="#ff1435"/><rect x="1028" y="332" width="5" height="5" fill="#ff1030"/><rect x="1033" y="332" width="5" height="5" fill="#ff0d2b"/><rect x="1038" y="332" width="5" height="5" fill="#ff0927"/><rect x="1043" y="332" width="5" height="5" fill="#ff0623"/><rect x="1048" y="332" width="5" height="5" fill="#ff041f"/><rect x="1053" y="332" width="5" height="5" fill="#ff011b"/><rect x="1058" y="332" width="5" height="5" fill="#ff0018"/><rect x="1063" y="332" width="5" height="5" fill="#ff0015"/><rect x="1068" y="332" width="5" height="5" fill="#ff0012"/><rect x="1073" y="332" width="5" height="5" fill="#ff000f"/><rect x="1078" y="332" width="5" height="5" fill="#ff000d"/><rect x="1083" y="332" width="5" height="5" fill="#ff000b"/><rect x="1088" y="332" width="5" height="5" fill="#ff0008"/><rect x="1093" y="332" width="5" height="5" fill="#ff0006"/><rect x="1098" y="332" width="5" height="5" fill="#ff0004"/><rect x="818" y="337" width="5" height="5" fill="#00c3ff"/><rect x="823" y="337" width="5" height="5" fill="#00c2ff"/><rect x="828" y="337" width="5" height="5" fill="#00c1ff"/><rect x="833" y="337" width="5" height="5" fill="#00c0ff"/><rect x="838" y="337" width="5" height="5" fill="#00bfff"/><rect x="843" y="337" width="5" height="5" fill="#00beff"/><rect x="848" y="337" width="5" height="5" fill="#00bdff"/><rect x="853" y="337" width="5" height="5" fill="#00bbff"/><rect x="858" y="337" width="5" height="5" fill="#00baff"/><rect x="863" y="337" width="5" height="5" fill="#00b8ff"/><rect x="868" y="337" width="5" height="5" fill="#00b7ff"/><rect x="873" y="337" width="5" height="5" fill="#00b5ff"/><rect x="878" y="337" width="5" height="5" fill="#00b4ff"/><rect x="883" y="337" width="5" height="5" fill="#00b2ff"/><rect x="888" y="337" width="5" height="5" fill="#00b0ff"/><rect x="893" y="337" width="5" height="5" fill="#00afff"/><rect x="898" y="337" width="5" height="5" fill="#00adff"/><rect x="903" y="337" width="5" height="5" fill="#00abff"/><rect x="908" y="337" width="5" height="5" fill="#00a9ff"/><rect x="913" y="337" width="5" height="5" fill="#0ea7ff"/><rect x="918" y="337" width="5" height="5" fill="#26a4ff"/><rect x="923" y="337" width="5" height="5" fill="#40a2ff"/><rect x="928" y="337" width="5" height="5" fill="#5b9fff"/><rect x="933" y="337" width="5" height="5" fill="#779dff"/><rect x="938" y="337" width="5" height="5" fill="#959aff"/><rect x="943" y="337" width="5" height="5" fill="#b597ff"/><rect x="948" y="337" width="5" height="5" fill="#d694ff"/><rect x="953" y="337" width="5" height="5" fill="#fa90ff"/><rect x="958" y="337" width="5" height="5" fill="#ff7de2"/><rect x="963" y="337" width="5" height="5" fill="#ff6ac6"/><rect x="968" y="337" width="5" height="5" fill="#ff5baf"/><rect x="973" y="337" width="5" height="5" fill="#ff4f9c"/><rect x="978" y="337" width="5" height="5" fill="#ff448b"/><rect x="983" y="337" width="5" height="5" fill="#ff3a7d"/><rect x="988" y="337" width="5" height="5" fill="#ff3271"/><rect x="993" y="337" width="5" height="5" fill="#ff2b66"/><rect x="998" y="337" width="5" height="5" fill="#ff255c"/><rect x="1003" y="337" width="5" height="5" fill="#ff1f54"/><rect x="1008" y="337" width="5" height="5" fill="#ff1a4c"/><rect x="1013" y="337" width="5" height="5" fill="#ff1545"/><rect x="1018" y="337" width="5" height="5" fill="#ff113e"/><rect x="1023" y="337" width="5" height="5" fill="#ff0d39"/><rect x="1028" y="337" width="5" height="5" fill="#ff0a33"/><rect x="1033" y="337" width="5" height="5" fill="#ff072e"/><rect x="1038" y="337" width="5" height="5" fill="#ff042a"/><rect x="1043" y="337" width="5" height="5" fill="#ff0126"/><rect x="1048" y="337" width="5" height="5" fill="#ff0022"/><rect x="1053" y="337" width="5" height="5" fill="#ff001e"/><rect x="1058" y="337" width="5" height="5" fill="#ff001b"/><rect x="1063" y="337" width="5" height="5" fill="#ff0018"/><rect x="1068" y="337" width="5" height="5" fill="#ff0015"/><rect x="1073" y="337" width="5" height="5" fill="#ff0012"/><rect x="1078" y="337" width="5" height="5" fill="#ff0010"/><rect x="1083" y="337" width="5" height="5" fill="#ff000d"/><rect x="1088" y="337" width="5" height="5" fill="#ff000b"/><rect x="1093" y="337" width="5" height="5" fill="#ff0009"/><rect x="1098" y="337" width="5" height="5" fill="#ff0007"/><rect x="1103" y="337" width="5" height="5" fill="#ff0005"/><rect x="818" y="342" width="5" height="5" fill="#00b6ff"/><rect x="823" y="342" width="5" height="5" fill="#00b5ff"/><rect x="828" y="342" width="5" height="5" fill="#00b4ff"/><rect x="833" y="342" width="5" height="5" fill="#00b2ff"/><rect x="838" y="342" width="5" height="5" fill="#00b1ff"/><rect x="843" y="342" width="5" height="5" fill="#00b0ff"/><rect x="848" y="342" width="5" height="5" fill="#00aeff"/><rect x="853" y="342" width="5" height="5" fill="#00adff"/><rect x="858" y="342" width="5" height="5" fill="#00abff"/><rect x="863" y="342" width="5" height="5" fill="#00a9ff"/><rect x="868" y="342" width="5" height="5" fill="#00a8ff"/><rect x="873" y="342" width="5" height="5" fill="#00a6ff"/><rect x="878" y="342" width="5" height="5" fill="#00a4ff"/><rect x="883" y="342" width="5" height="5" fill="#00a2ff"/><rect x="888" y="342" width="5" height="5" fill="#00a0ff"/><rect x="893" y="342" width="5" height="5" fill="#009eff"/><rect x="898" y="342" width="5" height="5" fill="#009cff"/><rect x="903" y="342" width="5" height="5" fill="#0099ff"/><rect x="908" y="342" width="5" height="5" fill="#0097ff"/><rect x="913" y="342" width="5" height="5" fill="#1494ff"/><rect x="918" y="342" width="5" height="5" fill="#2c92ff"/><rect x="923" y="342" width="5" height="5" fill="#458fff"/><rect x="928" y="342" width="5" height="5" fill="#5f8cff"/><rect x="933" y="342" width="5" height="5" fill="#7a89ff"/><rect x="938" y="342" width="5" height="5" fill="#9786ff"/><rect x="943" y="342" width="5" height="5" fill="#b682ff"/><rect x="948" y="342" width="5" height="5" fill="#d67fff"/><rect x="953" y="342" width="5" height="5" fill="#f87bff"/><rect x="958" y="342" width="5" height="5" fill="#ff6be5"/><rect x="963" y="342" width="5" height="5" fill="#ff5bc9"/><rect x="968" y="342" width="5" height="5" fill="#ff4db3"/><rect x="973" y="342" width="5" height="5" fill="#ff42a0"/><rect x="978" y="342" width="5" height="5" fill="#ff388f"/><rect x="983" y="342" width="5" height="5" fill="#ff3081"/><rect x="988" y="342" width="5" height="5" fill="#ff2875"/><rect x="993" y="342" width="5" height="5" fill="#ff226a"/><rect x="998" y="342" width="5" height="5" fill="#ff1c60"/><rect x="1003" y="342" width="5" height="5" fill="#ff1757"/><rect x="1008" y="342" width="5" height="5" fill="#ff124f"/><rect x="1013" y="342" width="5" height="5" fill="#ff0e48"/><rect x="1018" y="342" width="5" height="5" fill="#ff0a42"/><rect x="1023" y="342" width="5" height="5" fill="#ff073c"/><rect x="1028" y="342" width="5" height="5" fill="#ff0437"/><rect x="1033" y="342" width="5" height="5" fill="#ff0132"/><rect x="1038" y="342" width="5" height="5" fill="#ff002d"/><rect x="1043" y="342" width="5" height="5" fill="#ff0029"/><rect x="1048" y="342" width="5" height="5" fill="#ff0025"/><rect x="1053" y="342" width="5" height="5" fill="#ff0021"/><rect x="1058" y="342" width="5" height="5" fill="#ff001e"/><rect x="1063" y="342" width="5" height="5" fill="#ff001b"/><rect x="1068" y="342" width="5" height="5" fill="#ff0018"/><rect x="1073" y="342" width="5" height="5" fill="#ff0015"/><rect x="1078" y="342" width="5" height="5" fill="#ff0012"/><rect x="1083" y="342" width="5" height="5" fill="#ff0010"/><rect x="1088" y="342" width="5" height="5" fill="#ff000e"/><rect x="1093" y="342" width="5" height="5" fill="#ff000b"/><rect x="1098" y="342" width="5" height="5" fill="#ff0009"/><rect x="1103" y="342" width="5" height="5" fill="#ff0007"/><rect x="1108" y="342" width="5" height="5" fill="#ff0005"/><rect x="818" y="347" width="5" height="5" fill="#00aaff"/><rect x="823" y="347" width="5" height="5" fill="#00a8ff"/><rect x="828" y="347" width="5" height="5" fill="#00a7ff"/><rect x="833" y="347" width="5" height="5" fill="#00a5ff"/><rect x="838" y="347" width="5" height="5" fill="#00a4ff"/><rect x="843" y="347" width="5" height="5" fill="#00a2ff"/><rect x="848" y="347" width="5" height="5" fill="#00a0ff"/><rect x="853" y="347" width="5" height="5" fill="#009fff"/><rect x="858" y="347" width="5" height="5" fill="#009dff"/><rect x="863" y="347" width="5" height="5" fill="#009bff"/><rect x="868" y="347" width="5" height="5" fill="#0099ff"/><rect x="873" y="347" width="5" height="5" fill="#0097ff"/><rect x="878" y="347" width="5" height="5" fill="#0095ff"/><rect x="883" y="347" width="5" height="5" fill="#0093ff"/><rect x="888" y="347" width="5" height="5" fill="#0091ff"/><rect x="893" y="347" width="5" height="5" fill="#008eff"/><rect x="898" y="347" width="5" height="5" fill="#008cff"/><rect x="903" y="347" width="5" height="5" fill="#0089ff"/><rect x="908" y="347" width="5" height="5" fill="#0586ff"/><rect x="913" y="347" width="5" height="5" fill="#1b84ff"/><rect x="918" y="347" width="5" height="5" fill="#3281ff"/><rect x="923" y="347" width="5" height="5" fill="#4a7eff"/><rect x="928" y="347" width="5" height="5" fill="#637aff"/><rect x="933" y="347" width="5" height="5" fill="#7e77ff"/><rect x="938" y="347" width="5" height="5" fill="#9973ff"/><rect x="943" y="347" width="5" height="5" fill="#b770ff"/><rect x="948" y="347" width="5" height="5" fill="#d66cff"/><rect x="953" y="347" width="5" height="5" fill="#f767ff"/><rect x="958" y="347" width="5" height="5" fill="#ff5ae7"/><rect x="963" y="347" width="5" height="5" fill="#ff4bcc"/><rect x="968" y="347" width="5" height="5" fill="#ff40b6"/><rect x="973" y="347" width="5" height="5" fill="#ff36a3"/><rect x="978" y="347" width="5" height="5" fill="#ff2d93"/><rect x="983" y="347" width="5" height="5" fill="#ff2585"/><rect x="988" y="347" width="5" height="5" fill="#ff1f78"/><rect x="993" y="347" width="5" height="5" fill="#ff196d"/><rect x="998" y="347" width="5" height="5" fill="#ff1464"/><rect x="1003" y="347" width="5" height="5" fill="#ff0f5b"/><rect x="1008" y="347" width="5" height="5" fill="#ff0b53"/><rect x="1013" y="347" width="5" height="5" fill="#ff074c"/><rect x="1018" y="347" width="5" height="5" fill="#ff0445"/><rect x="1023" y="347" width="5" height="5" fill="#ff013f"/><rect x="1028" y="347" width="5" height="5" fill="#ff003a"/><rect x="1033" y="347" width="5" height="5" fill="#ff0035"/><rect x="1038" y="347" width="5" height="5" fill="#ff0030"/><rect x="1043" y="347" width="5" height="5" fill="#ff002c"/><rect x="1048" y="347" width="5" height="5" fill="#ff0028"/><rect x="1053" y="347" width="5" height="5" fill="#ff0024"/><rect x="1058" y="347" width="5" height="5" fill="#ff0021"/><rect x="1063" y="347" width="5" height="5" fill="#ff001e"/><rect x="1068" y="347" width="5" height="5" fill="#ff001b"/><rect x="1073" y="347" width="5" height="5" fill="#ff0018"/><rect x="1078" y="347" width="5" height="5" fill="#ff0015"/><rect x="1083" y="347" width="5" height="5" fill="#ff0013"/><rect x="1088" y="347" width="5" height="5" fill="#ff0010"/><rect x="1093" y="347" width="5" height="5" fill="#ff000e"/><rect x="1098" y="347" width="5" height="5" fill="#ff000c"/><rect x="1103" y="347" width="5" height="5" fill="#ff000a"/><rect x="1108" y="347" width="5" height="5" fill="#ff0008"/><rect x="1113" y="347" width="5" height="5" fill="#ff0006"/><rect x="823" y="352" width="5" height="5" fill="#009cff"/><rect x="828" y="352" width="5" height="5" fill="#009bff"/><rect x="833" y="352" width="5" height="5" fill="#0099ff"/><rect x="838" y="352" width="5" height="5" fill="#0097ff"/><rect x="843" y="352" width="5" height="5" fill="#0095ff"/><rect x="848" y="352" width="5" height="5" fill="#0094ff"/><rect x="853" y="352" width="5" height="5" fill="#0092ff"/><rect x="858" y="352" width="5" height="5" fill="#0090ff"/><rect x="863" y="352" width="5" height="5" fill="#008eff"/><rect x="868" y="352" width="5" height="5" fill="#008bff"/><rect x="873" y="352" width="5" height="5" fill="#0089ff"/><rect x="878" y="352" width="5" height="5" fill="#0087ff"/><rect x="883" y="352" width="5" height="5" fill="#0084ff"/><rect x="888" y="352" width="5" height="5" fill="#0082ff"/><rect x="893" y="352" width="5" height="5" fill="#007fff"/><rect x="898" y="352" width="5" height="5" fill="#007dff"/><rect x="903" y="352" width="5" height="5" fill="#007aff"/><rect x="908" y="352" width="5" height="5" fill="#0b77ff"/><rect x="913" y="352" width="5" height="5" fill="#2074ff"/><rect x="918" y="352" width="5" height="5" fill="#3771ff"/><rect x="923" y="352" width="5" height="5" fill="#4e6dff"/><rect x="928" y="352" width="5" height="5" fill="#676aff"/><rect x="933" y="352" width="5" height="5" fill="#8066ff"/><rect x="938" y="352" width="5" height="5" fill="#9b62ff"/><rect x="943" y="352" width="5" height="5" fill="#b85eff"/><rect x="948" y="352" width="5" height="5" fill="#d65aff"/><rect x="953" y="352" width="5" height="5" fill="#f555ff"/><rect x="958" y="352" width="5" height="5" fill="#ff4ae9"/><rect x="963" y="352" width="5" height="5" fill="#ff3dcf"/><rect x="968" y="352" width="5" height="5" fill="#ff33b9"/><rect x="973" y="352" width="5" height="5" fill="#ff2aa6"/><rect x="978" y="352" width="5" height="5" fill="#ff2296"/><rect x="983" y="352" width="5" height="5" fill="#ff1c88"/><rect x="988" y="352" width="5" height="5" fill="#ff167c"/><rect x="993" y="352" width="5" height="5" fill="#ff1171"/><rect x="998" y="352" width="5" height="5" fill="#ff0c67"/><rect x="1003" y="352" width="5" height="5" fill="#ff085e"/><rect x="1008" y="352" width="5" height="5" fill="#ff0456"/><rect x="1013" y="352" width="5" height="5" fill="#ff014f"/><rect x="1018" y="352" width="5" height="5" fill="#ff0049"/><rect x="1023" y="352" width="5" height="5" fill="#ff0043"/><rect x="1028" y="352" width="5" height="5" fill="#ff003d"/><rect x="1033" y="352" width="5" height="5" fill="#ff0038"/><rect x="1038" y="352" width="5" height="5" fill="#ff0033"/><rect x="1043" y="352" width="5" height="5" fill="#ff002f"/><rect x="1048" y="352" width="5" height="5" fill="#ff002b"/><rect x="1053" y="352" width="5" height="5" fill="#ff0027"/><rect x="1058" y="352" width="5" height="5" fill="#ff0024"/><rect x="1063" y="352" width="5" height="5" fill="#ff0020"/><rect x="1068" y="352" width="5" height="5" fill="#ff001d"/><rect x="1073" y="352" width="5" height="5" fill="#ff001a"/><rect x="1078" y="352" width="5" height="5" fill="#ff0018"/><rect x="1083" y="352" width="5" height="5" fill="#ff0015"/><rect x="1088" y="352" width="5" height="5" fill="#ff0013"/><rect x="1093" y="352" width="5" height="5" fill="#ff0010"/><rect x="1098" y="352" width="5" height="5" fill="#ff000e"/><rect x="1103" y="352" width="5" height="5" fill="#ff000c"/><rect x="1108" y="352" width="5" height="5" fill="#ff000a"/><rect x="823" y="357" width="5" height="5" fill="#0091ff"/><rect x="828" y="357" width="5" height="5" fill="#008fff"/><rect x="833" y="357" width="5" height="5" fill="#008dff"/><rect x="838" y="357" width="5" height="5" fill="#008bff"/><rect x="843" y="357" width="5" height="5" fill="#0089ff"/><rect x="848" y="357" width="5" height="5" fill="#0087ff"/><rect x="853" y="357" width="5" height="5" fill="#0085ff"/><rect x="858" y="357" width="5" height="5" fill="#0083ff"/><rect x="863" y="357" width="5" height="5" fill="#0081ff"/><rect x="868" y="357" width="5" height="5" fill="#007eff"/><rect x="873" y="357" width="5" height="5" fill="#007cff"/><rect x="878" y="357" width="5" height="5" fill="#0079ff"/><rect x="883" y="357" width="5" height="5" fill="#0077ff"/><rect x="888" y="357" width="5" height="5" fill="#0074ff"/><rect x="893" y="357" width="5" height="5" fill="#0071ff"/><rect x="898" y="357" width="5" height="5" fill="#006eff"/><rect x="903" y="357" width="5" height="5" fill="#006bff"/><rect x="908" y="357" width="5" height="5" fill="#1168ff"/><rect x="913" y="357" width="5" height="5" fill="#2665ff"/><rect x="918" y="357" width="5" height="5" fill="#3c61ff"/><rect x="923" y="357" width="5" height="5" fill="#525eff"/><rect x="928" y="357" width="5" height="5" fill="#6a5aff"/><rect x="933" y="357" width="5" height="5" fill="#8356ff"/><rect x="938" y="357" width="5" height="5" fill="#9d52ff"/><rect x="943" y="357" width="5" height="5" fill="#b94eff"/><rect x="948" y="357" width="5" height="5" fill="#d649ff"/><rect x="953" y="357" width="5" height="5" fill="#f444ff"/><rect x="958" y="357" width="5" height="5" fill="#ff3aec"/><rect x="963" y="357" width="5" height="5" fill="#ff30d2"/><rect x="968" y="357" width="5" height="5" fill="#ff27bc"/><rect x="973" y="357" width="5" height="5" fill="#ff1faa"/><rect x="978" y="357" width="5" height="5" fill="#ff189a"/><rect x="983" y="357" width="5" height="5" fill="#ff128c"/><rect x="988" y="357" width="5" height="5" fill="#ff0d7f"/><rect x="993" y="357" width="5" height="5" fill="#ff0874"/><rect x="998" y="357" width="5" height="5" fill="#ff046b"/><rect x="1003" y="357" width="5" height="5" fill="#ff0162"/><rect x="1008" y="357" width="5" height="5" fill="#ff005a"/><rect x="1013" y="357" width="5" height="5" fill="#ff0053"/><rect x="1018" y="357" width="5" height="5" fill="#ff004c"/><rect x="1023" y="357" width="5" height="5" fill="#ff0046"/><rect x="1028" y="357" width="5" height="5" fill="#ff0040"/><rect x="1033" y="357" width="5" height="5" fill="#ff003b"/><rect x="1038" y="357" width="5" height="5" fill="#ff0036"/><rect x="1043" y="357" width="5" height="5" fill="#ff0032"/><rect x="1048" y="357" width="5" height="5" fill="#ff002e"/><rect x="1053" y="357" width="5" height="5" fill="#ff002a"/><rect x="1058" y="357" width="5" height="5" fill="#ff0027"/><rect x="1063" y="357" width="5" height="5" fill="#ff0023"/><rect x="1068" y="357" width="5" height="5" fill="#ff0020"/><rect x="1073" y="357" width="5" height="5" fill="#ff001d"/><rect x="1078" y="357" width="5" height="5" fill="#ff001a"/><rect x="1083" y="357" width="5" height="5" fill="#ff0018"/><rect x="1088" y="357" width="5" height="5" fill="#ff0015"/><rect x="1093" y="357" width="5" height="5" fill="#ff0013"/><rect x="1098" y="357" width="5" height="5" fill="#ff0011"/><rect x="1103" y="357" width="5" height="5" fill="#ff000e"/><rect x="823" y="362" width="5" height="5" fill="#0086ff"/><rect x="828" y="362" width="5" height="5" fill="#0084ff"/><rect x="833" y="362" width="5" height="5" fill="#0082ff"/><rect x="838" y="362" width="5" height="5" fill="#0080ff"/><rect x="843" y="362" width="5" height="5" fill="#007eff"/><rect x="848" y="362" width="5" height="5" fill="#007bff"/><rect x="853" y="362" width="5" height="5" fill="#0079ff"/><rect x="858" y="362" width="5" height="5" fill="#0077ff"/><rect x="863" y="362" width="5" height="5" fill="#0074ff"/><rect x="868" y="362" width="5" height="5" fill="#0072ff"/><rect x="873" y="362" width="5" height="5" fill="#006fff"/><rect x="878" y="362" width="5" height="5" fill="#006dff"/><rect x="883" y="362" width="5" height="5" fill="#006aff"/><rect x="888" y="362" width="5" height="5" fill="#0067ff"/><rect x="893" y="362" width="5" height="5" fill="#0064ff"/><rect x="898" y="362" width="5" height="5" fill="#0061ff"/><rect x="903" y="362" width="5" height="5" fill="#035eff"/><rect x="908" y="362" width="5" height="5" fill="#165aff"/><rect x="913" y="362" width="5" height="5" fill="#2b57ff"/><rect x="918" y="362" width="5" height="5" fill="#4053ff"/><rect x="923" y="362" width="5" height="5" fill="#564fff"/><rect x="928" y="362" width="5" height="5" fill="#6d4cff"/><rect x="933" y="362" width="5" height="5" fill="#8647ff"/><rect x="938" y="362" width="5" height="5" fill="#9f43ff"/><rect x="943" y="362" width="5" height="5" fill="#ba3eff"/><rect x="948" y="362" width="5" height="5" fill="#d63aff"/><rect x="953" y="362" width="5" height="5" fill="#f335ff"/><rect x="958" y="362" width="5" height="5" fill="#ff2cee"/><rect x="963" y="362" width="5" height="5" fill="#ff23d4"/><rect x="968" y="362" width="5" height="5" fill="#ff1bbf"/><rect x="973" y="362" width="5" height="5" fill="#ff14ad"/><rect x="978" y="362" width="5" height="5" fill="#ff0e9d"/><rect x="983" y="362" width="5" height="5" fill="#ff098f"/><rect x="988" y="362" width="5" height="5" fill="#ff0583"/><rect x="993" y="362" width="5" height="5" fill="#ff0178"/><rect x="998" y="362" width="5" height="5" fill="#ff006e"/><rect x="1003" y="362" width="5" height="5" fill="#ff0065"/><rect x="1008" y="362" width="5" height="5" fill="#ff005d"/><rect x="1013" y="362" width="5" height="5" fill="#ff0056"/><rect x="1018" y="362" width="5" height="5" fill="#ff004f"/><rect x="1023" y="362" width="5" height="5" fill="#ff0049"/><rect x="1028" y="362" width="5" height="5" fill="#ff0043"/><rect x="1033" y="362" width="5" height="5" fill="#ff003e"/><rect x="1038" y="362" width="5" height="5" fill="#ff0039"/><rect x="1043" y="362" width="5" height="5" fill="#ff0035"/><rect x="1048" y="362" width="5" height="5" fill="#ff0031"/><rect x="1053" y="362" width="5" height="5" fill="#ff002d"/><rect x="1058" y="362" width="5" height="5" fill="#ff0029"/><rect x="1063" y="362" width="5" height="5" fill="#ff0026"/><rect x="1068" y="362" width="5" height="5" fill="#ff0023"/><rect x="1073" y="362" width="5" height="5" fill="#ff0020"/><rect x="1078" y="362" width="5" height="5" fill="#ff001d"/><rect x="1083" y="362" width="5" height="5" fill="#ff001a"/><rect x="1088" y="362" width="5" height="5" fill="#ff0018"/><rect x="1093" y="362" width="5" height="5" fill="#ff0015"/><rect x="1098" y="362" width="5" height="5" fill="#ff0013"/><rect x="823" y="367" width="5" height="5" fill="#007bff"/><rect x="828" y="367" width="5" height="5" fill="#0079ff"/><rect x="833" y="367" width="5" height="5" fill="#0077ff"/><rect x="838" y="367" width="5" height="5" fill="#0075ff"/><rect x="843" y="367" width="5" height="5" fill="#0072ff"/><rect x="848" y="367" width="5" height="5" fill="#0070ff"/><rect x="853" y="367" width="5" height="5" fill="#006eff"/><rect x="858" y="367" width="5" height="5" fill="#006bff"/><rect x="863" y="367" width="5" height="5" fill="#0069ff"/><rect x="868" y="367" width="5" height="5" fill="#0066ff"/><rect x="873" y="367" width="5" height="5" fill="#0063ff"/><rect x="878" y="367" width="5" height="5" fill="#0061ff"/><rect x="883" y="367" width="5" height="5" fill="#005eff"/><rect x="888" y="367" width="5" height="5" fill="#005bff"/><rect x="893" y="367" width="5" height="5" fill="#0058ff"/><rect x="898" y="367" width="5" height="5" fill="#0054ff"/><rect x="903" y="367" width="5" height="5" fill="#0951ff"/><rect x="908" y="367" width="5" height="5" fill="#1c4dff"/><rect x="913" y="367" width="5" height="5" fill="#304aff"/><rect x="918" y="367" width="5" height="5" fill="#4446ff"/><rect x="923" y="367" width="5" height="5" fill="#5a42ff"/><rect x="928" y="367" width="5" height="5" fill="#713eff"/><rect x="933" y="367" width="5" height="5" fill="#883aff"/><rect x="938" y="367" width="5" height="5" fill="#a135ff"/><rect x="943" y="367" width="5" height="5" fill="#ba30ff"/><rect x="948" y="367" width="5" height="5" fill="#d52bff"/><rect x="953" y="367" width="5" height="5" fill="#f226ff"/><rect x="958" y="367" width="5" height="5" fill="#ff1ff0"/><rect x="963" y="367" width="5" height="5" fill="#ff17d7"/><rect x="968" y="367" width="5" height="5" fill="#ff10c2"/><rect x="973" y="367" width="5" height="5" fill="#ff0ab0"/><rect x="978" y="367" width="5" height="5" fill="#ff05a0"/><rect x="983" y="367" width="5" height="5" fill="#ff0092"/><rect x="988" y="367" width="5" height="5" fill="#ff0086"/><rect x="993" y="367" width="5" height="5" fill="#ff007b"/><rect x="998" y="367" width="5" height="5" fill="#ff0071"/><rect x="1003" y="367" width="5" height="5" fill="#ff0068"/><rect x="1008" y="367" width="5" height="5" fill="#ff0060"/><rect x="1013" y="367" width="5" height="5" fill="#ff0059"/><rect x="1018" y="367" width="5" height="5" fill="#ff0052"/><rect x="1023" y="367" width="5" height="5" fill="#ff004c"/><rect x="1028" y="367" width="5" height="5" fill="#ff0046"/><rect x="1033" y="367" width="5" height="5" fill="#ff0041"/><rect x="1038" y="367" width="5" height="5" fill="#ff003c"/><rect x="1043" y="367" width="5" height="5" fill="#ff0038"/><rect x="1048" y="367" width="5" height="5" fill="#ff0034"/><rect x="1053" y="367" width="5" height="5" fill="#ff0030"/><rect x="1058" y="367" width="5" height="5" fill="#ff002c"/><rect x="1063" y="367" width="5" height="5" fill="#ff0028"/><rect x="1068" y="367" width="5" height="5" fill="#ff0025"/><rect x="1073" y="367" width="5" height="5" fill="#ff0022"/><rect x="1078" y="367" width="5" height="5" fill="#ff001f"/><rect x="1083" y="367" width="5" height="5" fill="#ff001d"/><rect x="1088" y="367" width="5" height="5" fill="#ff001a"/><rect x="828" y="372" width="5" height="5" fill="#006fff"/><rect x="833" y="372" width="5" height="5" fill="#006cff"/><rect x="838" y="372" width="5" height="5" fill="#006aff"/><rect x="843" y="372" width="5" height="5" fill="#0068ff"/><rect x="848" y="372" width="5" height="5" fill="#0065ff"/><rect x="853" y="372" width="5" height="5" fill="#0063ff"/><rect x="858" y="372" width="5" height="5" fill="#0060ff"/><rect x="863" y="372" width="5" height="5" fill="#005eff"/><rect x="868" y="372" width="5" height="5" fill="#005bff"/><rect x="873" y="372" width="5" height="5" fill="#0058ff"/><rect x="878" y="372" width="5" height="5" fill="#0055ff"/><rect x="883" y="372" width="5" height="5" fill="#0052ff"/><rect x="888" y="372" width="5" height="5" fill="#004fff"/><rect x="893" y="372" width="5" height="5" fill="#004cff"/><rect x="898" y="372" width="5" height="5" fill="#0048ff"/><rect x="903" y="372" width="5" height="5" fill="#0e45ff"/><rect x="908" y="372" width="5" height="5" fill="#2141ff"/><rect x="913" y="372" width="5" height="5" fill="#343dff"/><rect x="918" y="372" width="5" height="5" fill="#4839ff"/><rect x="923" y="372" width="5" height="5" fill="#5e35ff"/><rect x="928" y="372" width="5" height="5" fill="#7331ff"/><rect x="933" y="372" width="5" height="5" fill="#8a2dff"/><rect x="938" y="372" width="5" height="5" fill="#a228ff"/><rect x="943" y="372" width="5" height="5" fill="#bb23ff"/><rect x="948" y="372" width="5" height="5" fill="#d51eff"/><rect x="953" y="372" width="5" height="5" fill="#f119ff"/><rect x="958" y="372" width="5" height="5" fill="#ff12f1"/><rect x="963" y="372" width="5" height="5" fill="#ff0bd9"/><rect x="968" y="372" width="5" height="5" fill="#ff05c5"/><rect x="973" y="372" width="5" height="5" fill="#ff00b3"/><rect x="978" y="372" width="5" height="5" fill="#ff00a3"/><rect x="983" y="372" width="5" height="5" fill="#ff0095"/><rect x="988" y="372" width="5" height="5" fill="#ff0089"/><rect x="993" y="372" width="5" height="5" fill="#ff007e"/><rect x="998" y="372" width="5" height="5" fill="#ff0074"/><rect x="1003" y="372" width="5" height="5" fill="#ff006b"/><rect x="1008" y="372" width="5" height="5" fill="#ff0063"/><rect x="1013" y="372" width="5" height="5" fill="#ff005c"/><rect x="1018" y="372" width="5" height="5" fill="#ff0055"/><rect x="1023" y="372" width="5" height="5" fill="#ff004f"/><rect x="1028" y="372" width="5" height="5" fill="#ff0049"/><rect x="1033" y="372" width="5" height="5" fill="#ff0044"/><rect x="1038" y="372" width="5" height="5" fill="#ff003f"/><rect x="1043" y="372" width="5" height="5" fill="#ff003a"/><rect x="1048" y="372" width="5" height="5" fill="#ff0036"/><rect x="1053" y="372" width="5" height="5" fill="#ff0032"/><rect x="1058" y="372" width="5" height="5" fill="#ff002f"/><rect x="1063" y="372" width="5" height="5" fill="#ff002b"/><rect x="1068" y="372" width="5" height="5" fill="#ff0028"/><rect x="1073" y="372" width="5" height="5" fill="#ff0025"/><rect x="828" y="377" width="5" height="5" fill="#0065ff"/><rect x="833" y="377" width="5" height="5" fill="#0062ff"/><rect x="838" y="377" width="5" height="5" fill="#0060ff"/><rect x="843" y="377" width="5" height="5" fill="#005eff"/><rect x="848" y="377" width="5" height="5" fill="#005bff"/><rect x="853" y="377" width="5" height="5" fill="#0058ff"/><rect x="858" y="377" width="5" height="5" fill="#0056ff"/><rect x="863" y="377" width="5" height="5" fill="#0053ff"/><rect x="868" y="377" width="5" height="5" fill="#0050ff"/><rect x="873" y="377" width="5" height="5" fill="#004dff"/><rect x="878" y="377" width="5" height="5" fill="#004aff"/><rect x="883" y="377" width="5" height="5" fill="#0047ff"/><rect x="888" y="377" width="5" height="5" fill="#0044ff"/><rect x="893" y="377" width="5" height="5" fill="#0040ff"/><rect x="898" y="377" width="5" height="5" fill="#023dff"/><rect x="903" y="377" width="5" height="5" fill="#1339ff"/><rect x="908" y="377" width="5" height="5" fill="#2635ff"/><rect x="913" y="377" width="5" height="5" fill="#3932ff"/><rect x="918" y="377" width="5" height="5" fill="#4c2dff"/><rect x="923" y="377" width="5" height="5" fill="#6129ff"/><rect x="928" y="377" width="5" height="5" fill="#7625ff"/><rect x="933" y="377" width="5" height="5" fill="#8c20ff"/><rect x="938" y="377" width="5" height="5" fill="#a41bff"/><rect x="943" y="377" width="5" height="5" fill="#bc16ff"/><rect x="948" y="377" width="5" height="5" fill="#d511ff"/><rect x="953" y="377" width="5" height="5" fill="#f00cff"/><rect x="958" y="377" width="5" height="5" fill="#ff06f3"/><rect x="963" y="377" width="5" height="5" fill="#ff00db"/><rect x="968" y="377" width="5" height="5" fill="#ff00c7"/><rect x="973" y="377" width="5" height="5" fill="#ff00b5"/><rect x="978" y="377" width="5" height="5" fill="#ff00a6"/><rect x="983" y="377" width="5" height="5" fill="#ff0098"/><rect x="988" y="377" width="5" height="5" fill="#ff008c"/><rect x="993" y="377" width="5" height="5" fill="#ff0081"/><rect x="998" y="377" width="5" height="5" fill="#ff0077"/><rect x="1003" y="377" width="5" height="5" fill="#ff006e"/><rect x="1008" y="377" width="5" height="5" fill="#ff0066"/><rect x="1013" y="377" width="5" height="5" fill="#ff005f"/><rect x="1018" y="377" width="5" height="5" fill="#ff0058"/><rect x="1023" y="377" width="5" height="5" fill="#ff0052"/><rect x="1028" y="377" width="5" height="5" fill="#ff004c"/><rect x="1033" y="377" width="5" height="5" fill="#ff0047"/><rect x="1038" y="377" width="5" height="5" fill="#ff0042"/><rect x="1043" y="377" width="5" height="5" fill="#ff003d"/><rect x="1048" y="377" width="5" height="5" fill="#ff0039"/><rect x="1053" y="377" width="5" height="5" fill="#ff0035"/><rect x="1058" y="377" width="5" height="5" fill="#ff0031"/><rect x="1063" y="377" width="5" height="5" fill="#ff002e"/><rect x="828" y="382" width="5" height="5" fill="#005bff"/><rect x="833" y="382" width="5" height="5" fill="#0059ff"/><rect x="838" y="382" width="5" height="5" fill="#0056ff"/><rect x="843" y="382" width="5" height="5" fill="#0054ff"/><rect x="848" y="382" width="5" height="5" fill="#0051ff"/><rect x="853" y="382" width="5" height="5" fill="#004fff"/><rect x="858" y="382" width="5" height="5" fill="#004cff"/><rect x="863" y="382" width="5" height="5" fill="#0049ff"/><rect x="868" y="382" width="5" height="5" fill="#0046ff"/><rect x="873" y="382" width="5" height="5" fill="#0043ff"/><rect x="878" y="382" width="5" height="5" fill="#0040ff"/><rect x="883" y="382" width="5" height="5" fill="#003cff"/><rect x="888" y="382" width="5" height="5" fill="#0039ff"/><rect x="893" y="382" width="5" height="5" fill="#0036ff"/><rect x="898" y="382" width="5" height="5" fill="#0732ff"/><rect x="903" y="382" width="5" height="5" fill="#182eff"/><rect x="908" y="382" width="5" height="5" fill="#2a2aff"/><rect x="913" y="382" width="5" height="5" fill="#3d26ff"/><rect x="918" y="382" width="5" height="5" fill="#5022ff"/><rect x="923" y="382" width="5" height="5" fill="#641eff"/><rect x="928" y="382" width="5" height="5" fill="#7919ff"/><rect x="933" y="382" width="5" height="5" fill="#8e15ff"/><rect x="938" y="382" width="5" height="5" fill="#a510ff"/><rect x="943" y="382" width="5" height="5" fill="#bd0bff"/><rect x="948" y="382" width="5" height="5" fill="#d505ff"/><rect x="953" y="382" width="5" height="5" fill="#ef00ff"/><rect x="958" y="382" width="5" height="5" fill="#ff00f5"/><rect x="963" y="382" width="5" height="5" fill="#ff00de"/><rect x="968" y="382" width="5" height="5" fill="#ff00c9"/><rect x="973" y="382" width="5" height="5" fill="#ff00b8"/><rect x="978" y="382" width="5" height="5" fill="#ff00a9"/><rect x="983" y="382" width="5" height="5" fill="#ff009b"/><rect x="988" y="382" width="5" height="5" fill="#ff008f"/><rect x="993" y="382" width="5" height="5" fill="#ff0084"/><rect x="998" y="382" width="5" height="5" fill="#ff007a"/><rect x="1003" y="382" width="5" height="5" fill="#ff0071"/><rect x="1008" y="382" width="5" height="5" fill="#ff0069"/><rect x="1013" y="382" width="5" height="5" fill="#ff0062"/><rect x="1018" y="382" width="5" height="5" fill="#ff005b"/><rect x="1023" y="382" width="5" height="5" fill="#ff0055"/><rect x="1028" y="382" width="5" height="5" fill="#ff004f"/><rect x="1033" y="382" width="5" height="5" fill="#ff0049"/><rect x="1038" y="382" width="5" height="5" fill="#ff0044"/><rect x="1043" y="382" width="5" height="5" fill="#ff0040"/><rect x="1048" y="382" width="5" height="5" fill="#ff003b"/><rect x="833" y="387" width="5" height="5" fill="#0050ff"/><rect x="838" y="387" width="5" height="5" fill="#004dff"/><rect x="843" y="387" width="5" height="5" fill="#004aff"/><rect x="848" y="387" width="5" height="5" fill="#0048ff"/><rect x="853" y="387" width="5" height="5" fill="#0045ff"/><rect x="858" y="387" width="5" height="5" fill="#0042ff"/><rect x="863" y="387" width="5" height="5" fill="#003fff"/><rect x="868" y="387" width="5" height="5" fill="#003cff"/><rect x="873" y="387" width="5" height="5" fill="#0039ff"/><rect x="878" y="387" width="5" height="5" fill="#0036ff"/><rect x="883" y="387" width="5" height="5" fill="#0032ff"/><rect x="888" y="387" width="5" height="5" fill="#002fff"/><rect x="893" y="387" width="5" height="5" fill="#002bff"/><rect x="898" y="387" width="5" height="5" fill="#0c28ff"/><rect x="903" y="387" width="5" height="5" fill="#1d24ff"/><rect x="908" y="387" width="5" height="5" fill="#2e20ff"/><rect x="913" y="387" width="5" height="5" fill="#401cff"/><rect x="918" y="387" width="5" height="5" fill="#5318ff"/><rect x="923" y="387" width="5" height="5" fill="#6713ff"/><rect x="928" y="387" width="5" height="5" fill="#7b0fff"/><rect x="933" y="387" width="5" height="5" fill="#900aff"/><rect x="938" y="387" width="5" height="5" fill="#a605ff"/><rect x="943" y="387" width="5" height="5" fill="#bd00ff"/><rect x="948" y="387" width="5" height="5" fill="#d500ff"/><rect x="953" y="387" width="5" height="5" fill="#ee00ff"/><rect x="958" y="387" width="5" height="5" fill="#ff00f6"/><rect x="963" y="387" width="5" height="5" fill="#ff00e0"/><rect x="968" y="387" width="5" height="5" fill="#ff00cc"/><rect x="973" y="387" width="5" height="5" fill="#ff00ba"/><rect x="978" y="387" width="5" height="5" fill="#ff00ab"/><rect x="983" y="387" width="5" height="5" fill="#ff009e"/><rect x="988" y="387" width="5" height="5" fill="#ff0092"/><rect x="993" y="387" width="5" height="5" fill="#ff0087"/><rect x="998" y="387" width="5" height="5" fill="#ff007d"/><rect x="1003" y="387" width="5" height="5" fill="#ff0074"/><rect x="1008" y="387" width="5" height="5" fill="#ff006c"/><rect x="1013" y="387" width="5" height="5" fill="#ff0064"/><rect x="1018" y="387" width="5" height="5" fill="#ff005e"/><rect x="1023" y="387" width="5" height="5" fill="#ff0057"/><rect x="1028" y="387" width="5" height="5" fill="#ff0052"/><rect x="1033" y="387" width="5" height="5" fill="#ff004c"/><rect x="1038" y="387" width="5" height="5" fill="#ff0047"/><rect x="833" y="392" width="5" height="5" fill="#0047ff"/><rect x="838" y="392" width="5" height="5" fill="#0044ff"/><rect x="843" y="392" width="5" height="5" fill="#0042ff"/><rect x="848" y="392" width="5" height="5" fill="#003fff"/><rect x="853" y="392" width="5" height="5" fill="#003cff"/><rect x="858" y="392" width="5" height="5" fill="#0039ff"/><rect x="863" y="392" width="5" height="5" fill="#0036ff"/><rect x="868" y="392" width="5" height="5" fill="#0033ff"/><rect x="873" y="392" width="5" height="5" fill="#0030ff"/><rect x="878" y="392" width="5" height="5" fill="#002cff"/><rect x="883" y="392" width="5" height="5" fill="#0029ff"/><rect x="888" y="392" width="5" height="5" fill="#0025ff"/><rect x="893" y="392" width="5" height="5" fill="#0022ff"/><rect x="898" y="392" width="5" height="5" fill="#111eff"/><rect x="903" y="392" width="5" height="5" fill="#211aff"/><rect x="908" y="392" width="5" height="5" fill="#3216ff"/><rect x="913" y="392" width="5" height="5" fill="#4412ff"/><rect x="918" y="392" width="5" height="5" fill="#570dff"/><rect x="923" y="392" width="5" height="5" fill="#6a09ff"/><rect x="928" y="392" width="5" height="5" fill="#7e04ff"/><rect x="933" y="392" width="5" height="5" fill="#9200ff"/><rect x="938" y="392" width="5" height="5" fill="#a800ff"/><rect x="943" y="392" width="5" height="5" fill="#be00ff"/><rect x="948" y="392" width="5" height="5" fill="#d500ff"/><rect x="953" y="392" width="5" height="5" fill="#ed00ff"/><rect x="958" y="392" width="5" height="5" fill="#ff00f8"/><rect x="963" y="392" width="5" height="5" fill="#ff00e1"/><rect x="968" y="392" width="5" height="5" fill="#ff00ce"/><rect x="973" y="392" width="5" height="5" fill="#ff00bd"/><rect x="978" y="392" width="5" height="5" fill="#ff00ae"/><rect x="983" y="392" width="5" height="5" fill="#ff00a0"/><rect x="988" y="392" width="5" height="5" fill="#ff0094"/><rect x="993" y="392" width="5" height="5" fill="#ff0089"/><rect x="998" y="392" width="5" height="5" fill="#ff0080"/><rect x="1003" y="392" width="5" height="5" fill="#ff0077"/><rect x="1008" y="392" width="5" height="5" fill="#ff006f"/><rect x="1013" y="392" width="5" height="5" fill="#ff0067"/><rect x="1018" y="392" width="5" height="5" fill="#ff0060"/><rect x="1023" y="392" width="5" height="5" fill="#ff005a"/><rect x="833" y="397" width="5" height="5" fill="#003eff"/><rect x="838" y="397" width="5" height="5" fill="#003cff"/><rect x="843" y="397" width="5" height="5" fill="#0039ff"/><rect x="848" y="397" width="5" height="5" fill="#0036ff"/><rect x="853" y="397" width="5" height="5" fill="#0033ff"/><rect x="858" y="397" width="5" height="5" fill="#0030ff"/><rect x="863" y="397" width="5" height="5" fill="#002dff"/><rect x="868" y="397" width="5" height="5" fill="#002aff"/><rect x="873" y="397" width="5" height="5" fill="#0027ff"/><rect x="878" y="397" width="5" height="5" fill="#0023ff"/><rect x="883" y="397" width="5" height="5" fill="#0020ff"/><rect x="888" y="397" width="5" height="5" fill="#001cff"/><rect x="893" y="397" width="5" height="5" fill="#0518ff"/><rect x="898" y="397" width="5" height="5" fill="#1515ff"/><rect x="903" y="397" width="5" height="5" fill="#2511ff"/><rect x="908" y="397" width="5" height="5" fill="#360dff"/><rect x="913" y="397" width="5" height="5" fill="#4808ff"/><rect x="918" y="397" width="5" height="5" fill="#5a04ff"/><rect x="923" y="397" width="5" height="5" fill="#6c00ff"/><rect x="928" y="397" width="5" height="5" fill="#8000ff"/><rect x="933" y="397" width="5" height="5" fill="#9400ff"/><rect x="938" y="397" width="5" height="5" fill="#a900ff"/><rect x="943" y="397" width="5" height="5" fill="#be00ff"/><rect x="948" y="397" width="5" height="5" fill="#d500ff"/><rect x="953" y="397" width="5" height="5" fill="#ec00ff"/><rect x="958" y="397" width="5" height="5" fill="#ff00f9"/><rect x="963" y="397" width="5" height="5" fill="#ff00e3"/><rect x="968" y="397" width="5" height="5" fill="#ff00d0"/><rect x="973" y="397" width="5" height="5" fill="#ff00bf"/><rect x="978" y="397" width="5" height="5" fill="#ff00b0"/><rect x="983" y="397" width="5" height="5" fill="#ff00a3"/><rect x="988" y="397" width="5" height="5" fill="#ff0097"/><rect x="993" y="397" width="5" height="5" fill="#ff008c"/><rect x="998" y="397" width="5" height="5" fill="#ff0082"/><rect x="1003" y="397" width="5" height="5" fill="#ff0079"/><rect x="1008" y="397" width="5" height="5" fill="#ff0071"/><rect x="1013" y="397" width="5" height="5" fill="#ff006a"/><rect x="838" y="402" width="5" height="5" fill="#0033ff"/><rect x="843" y="402" width="5" height="5" fill="#0031ff"/><rect x="848" y="402" width="5" height="5" fill="#002eff"/><rect x="853" y="402" width="5" height="5" fill="#002bff"/><rect x="858" y="402" width="5" height="5" fill="#0028ff"/><rect x="863" y="402" width="5" height="5" fill="#0025ff"/><rect x="868" y="402" width="5" height="5" fill="#0021ff"/><rect x="873" y="402" width="5" height="5" fill="#001eff"/><rect x="878" y="402" width="5" height="5" fill="#001bff"/><rect x="883" y="402" width="5" height="5" fill="#0017ff"/><rect x="888" y="402" width="5" height="5" fill="#0013ff"/><rect x="893" y="402" width="5" height="5" fill="#0a10ff"/><rect x="898" y="402" width="5" height="5" fill="#190cff"/><rect x="903" y="402" width="5" height="5" fill="#2908ff"/><rect x="908" y="402" width="5" height="5" fill="#3a03ff"/><rect x="913" y="402" width="5" height="5" fill="#4b00ff"/><rect x="918" y="402" width="5" height="5" fill="#5d00ff"/><rect x="923" y="402" width="5" height="5" fill="#6f00ff"/><rect x="928" y="402" width="5" height="5" fill="#8200ff"/><rect x="933" y="402" width="5" height="5" fill="#9500ff"/><rect x="938" y="402" width="5" height="5" fill="#aa00ff"/><rect x="943" y="402" width="5" height="5" fill="#bf00ff"/><rect x="948" y="402" width="5" height="5" fill="#d500ff"/><rect x="953" y="402" width="5" height="5" fill="#ec00ff"/><rect x="958" y="402" width="5" height="5" fill="#ff00fb"/><rect x="963" y="402" width="5" height="5" fill="#ff00e5"/><rect x="968" y="402" width="5" height="5" fill="#ff00d2"/><rect x="973" y="402" width="5" height="5" fill="#ff00c1"/><rect x="978" y="402" width="5" height="5" fill="#ff00b3"/><rect x="983" y="402" width="5" height="5" fill="#ff00a5"/><rect x="988" y="402" width="5" height="5" fill="#ff0099"/><rect x="993" y="402" width="5" height="5" fill="#ff008f"/><rect x="998" y="402" width="5" height="5" fill="#ff0085"/><rect x="1003" y="402" width="5" height="5" fill="#ff007c"/><rect x="838" y="407" width="5" height="5" fill="#002cff"/><rect x="843" y="407" width="5" height="5" fill="#0029ff"/><rect x="848" y="407" width="5" height="5" fill="#0026ff"/><rect x="853" y="407" width="5" height="5" fill="#0023ff"/><rect x="858" y="407" width="5" height="5" fill="#0020ff"/><rect x="863" y="407" width="5" height="5" fill="#001cff"/><rect x="868" y="407" width="5" height="5" fill="#0019ff"/><rect x="873" y="407" width="5" height="5" fill="#0016ff"/><rect x="878" y="407" width="5" height="5" fill="#0012ff"/><rect x="883" y="407" width="5" height="5" fill="#000fff"/><rect x="888" y="407" width="5" height="5" fill="#000bff"/><rect x="893" y="407" width="5" height="5" fill="#0e07ff"/><rect x="898" y="407" width="5" height="5" fill="#1d03ff"/><rect x="903" y="407" width="5" height="5" fill="#2d00ff"/><rect x="908" y="407" width="5" height="5" fill="#3d00ff"/><rect x="913" y="407" width="5" height="5" fill="#4e00ff"/><rect x="918" y="407" width="5" height="5" fill="#5f00ff"/><rect x="923" y="407" width="5" height="5" fill="#7100ff"/><rect x="928" y="407" width="5" height="5" fill="#8400ff"/><rect x="933" y="407" width="5" height="5" fill="#9700ff"/><rect x="938" y="407" width="5" height="5" fill="#ab00ff"/><rect x="943" y="407" width="5" height="5" fill="#bf00ff"/><rect x="948" y="407" width="5" height="5" fill="#d500ff"/><rect x="953" y="407" width="5" height="5" fill="#eb00ff"/><rect x="958" y="407" width="5" height="5" fill="#ff00fc"/><rect x="963" y="407" width="5" height="5" fill="#ff00e7"/><rect x="968" y="407" width="5" height="5" fill="#ff00d4"/><rect x="973" y="407" width="5" height="5" fill="#ff00c3"/><rect x="978" y="407" width="5" height="5" fill="#ff00b5"/><rect x="983" y="407" width="5" height="5" fill="#ff00a8"/><rect x="988" y="407" width="5" height="5" fill="#ff009c"/><rect x="843" y="412" width="5" height="5" fill="#0021ff"/><rect x="848" y="412" width="5" height="5" fill="#001eff"/><rect x="853" y="412" width="5" height="5" fill="#001bff"/><rect x="858" y="412" width="5" height="5" fill="#0018ff"/><rect x="863" y="412" width="5" height="5" fill="#0014ff"/><rect x="868" y="412" width="5" height="5" fill="#0011ff"/><rect x="873" y="412" width="5" height="5" fill="#000eff"/><rect x="878" y="412" width="5" height="5" fill="#000aff"/><rect x="883" y="412" width="5" height="5" fill="#0007ff"/><rect x="888" y="412" width="5" height="5" fill="#0403ff"/><rect x="893" y="412" width="5" height="5" fill="#1200ff"/><rect x="898" y="412" width="5" height="5" fill="#2100ff"/><rect x="903" y="412" width="5" height="5" fill="#3100ff"/><rect x="908" y="412" width="5" height="5" fill="#4100ff"/><rect x="913" y="412" width="5" height="5" fill="#5100ff"/><rect x="918" y="412" width="5" height="5" fill="#6200ff"/><rect x="923" y="412" width="5" height="5" fill="#7400ff"/><rect x="928" y="412" width="5" height="5" fill="#8600ff"/><rect x="933" y="412" width="5" height="5" fill="#9800ff"/><rect x="938" y="412" width="5" height="5" fill="#ac00ff"/><rect x="943" y="412" width="5" height="5" fill="#c000ff"/><rect x="948" y="412" width="5" height="5" fill="#d500ff"/><rect x="953" y="412" width="5" height="5" fill="#ea00ff"/><rect x="958" y="412" width="5" height="5" fill="#ff00fd"/><rect x="963" y="412" width="5" height="5" fill="#ff00e8"/><rect x="968" y="412" width="5" height="5" fill="#ff00d6"/><rect x="973" y="412" width="5" height="5" fill="#ff00c6"/><rect x="978" y="412" width="5" height="5" fill="#ff00b7"/><rect x="843" y="417" width="5" height="5" fill="#001aff"/><rect x="848" y="417" width="5" height="5" fill="#0017ff"/><rect x="853" y="417" width="5" height="5" fill="#0013ff"/><rect x="858" y="417" width="5" height="5" fill="#0010ff"/><rect x="863" y="417" width="5" height="5" fill="#000dff"/><rect x="868" y="417" width="5" height="5" fill="#000aff"/><rect x="873" y="417" width="5" height="5" fill="#0006ff"/><rect x="878" y="417" width="5" height="5" fill="#0003ff"/><rect x="883" y="417" width="5" height="5" fill="#0000ff"/><rect x="888" y="417" width="5" height="5" fill="#0800ff"/><rect x="893" y="417" width="5" height="5" fill="#1600ff"/><rect x="898" y="417" width="5" height="5" fill="#2500ff"/><rect x="903" y="417" width="5" height="5" fill="#3400ff"/><rect x="908" y="417" width="5" height="5" fill="#4400ff"/><rect x="913" y="417" width="5" height="5" fill="#5400ff"/><rect x="918" y="417" width="5" height="5" fill="#6500ff"/><rect x="923" y="417" width="5" height="5" fill="#7600ff"/><rect x="928" y="417" width="5" height="5" fill="#8700ff"/><rect x="933" y="417" width="5" height="5" fill="#9a00ff"/><rect x="938" y="417" width="5" height="5" fill="#ad00ff"/><rect x="943" y="417" width="5" height="5" fill="#c000ff"/><rect x="948" y="417" width="5" height="5" fill="#d500ff"/><rect x="953" y="417" width="5" height="5" fill="#ea00ff"/><rect x="958" y="417" width="5" height="5" fill="#ff00ff"/><rect x="963" y="417" width="5" height="5" fill="#ff00ea"/><rect x="848" y="422" width="5" height="5" fill="#000fff"/><rect x="853" y="422" width="5" height="5" fill="#000cff"/><rect x="858" y="422" width="5" height="5" fill="#0009ff"/><rect x="863" y="422" width="5" height="5" fill="#0006ff"/><rect x="868" y="422" width="5" height="5" fill="#0002ff"/><rect x="873" y="422" width="5" height="5" fill="#0000ff"/><rect x="878" y="422" width="5" height="5" fill="#0000ff"/><rect x="883" y="422" width="5" height="5" fill="#0000ff"/><rect x="888" y="422" width="5" height="5" fill="#0c00ff"/><rect x="893" y="422" width="5" height="5" fill="#1a00ff"/><rect x="898" y="422" width="5" height="5" fill="#2900ff"/><rect x="903" y="422" width="5" height="5" fill="#3800ff"/><rect x="908" y="422" width="5" height="5" fill="#4700ff"/><rect x="913" y="422" width="5" height="5" fill="#5700ff"/><rect x="918" y="422" width="5" height="5" fill="#6700ff"/><rect x="923" y="422" width="5" height="5" fill="#7800ff"/><rect x="928" y="422" width="5" height="5" fill="#8900ff"/><rect x="933" y="422" width="5" height="5" fill="#9b00ff"/><rect x="938" y="422" width="5" height="5" fill="#ae00ff"/><rect x="943" y="422" width="5" height="5" fill="#c100ff"/><rect x="948" y="422" width="5" height="5" fill="#d500ff"/><rect x="953" y="422" width="5" height="5" fill="#e900ff"/><rect x="853" y="427" width="5" height="5" fill="#0005ff"/><rect x="858" y="427" width="5" height="5" fill="#0002ff"/><rect x="863" y="427" width="5" height="5" fill="#0000ff"/><rect x="868" y="427" width="5" height="5" fill="#0000ff"/><rect x="873" y="427" width="5" height="5" fill="#0000ff"/><rect x="878" y="427" width="5" height="5" fill="#0000ff"/><rect x="883" y="427" width="5" height="5" fill="#0300ff"/><rect x="888" y="427" width="5" height="5" fill="#1000ff"/><rect x="893" y="427" width="5" height="5" fill="#1e00ff"/><rect x="898" y="427" width="5" height="5" fill="#2c00ff"/><rect x="903" y="427" width="5" height="5" fill="#3b00ff"/><rect x="908" y="427" width="5" height="5" fill="#4a00ff"/><rect x="913" y="427" width="5" height="5" fill="#5900ff"/><rect x="918" y="427" width="5" height="5" fill="#6900ff"/><rect x="923" y="427" width="5" height="5" fill="#7a00ff"/><rect x="928" y="427" width="5" height="5" fill="#8b00ff"/><rect x="933" y="427" width="5" height="5" fill="#9c00ff"/><rect x="938" y="427" width="5" height="5" fill="#ae00ff"/><rect x="853" y="432" width="5" height="5" fill="#0000ff"/><rect x="858" y="432" width="5" height="5" fill="#0000ff"/><rect x="863" y="432" width="5" height="5" fill="#0000ff"/><rect x="868" y="432" width="5" height="5" fill="#0000ff"/><rect x="873" y="432" width="5" height="5" fill="#0000ff"/><rect x="878" y="432" width="5" height="5" fill="#0000ff"/><rect x="883" y="432" width="5" height="5" fill="#0700ff"/><rect x="888" y="432" width="5" height="5" fill="#1400ff"/><rect x="893" y="432" width="5" height="5" fill="#2200ff"/><rect x="898" y="432" width="5" height="5" fill="#3000ff"/><rect x="903" y="432" width="5" height="5" fill="#3e00ff"/><rect x="908" y="432" width="5" height="5" fill="#4d00ff"/><rect x="913" y="432" width="5" height="5" fill="#5c00ff"/><rect x="918" y="432" width="5" height="5" fill="#6c00ff"/><rect x="923" y="432" width="5" height="5" fill="#7c00ff"/><rect x="928" y="432" width="5" height="5" fill="#8c00ff"/><rect x="858" y="437" width="5" height="5" fill="#0000ff"/><rect x="863" y="437" width="5" height="5" fill="#0000ff"/><rect x="868" y="437" width="5" height="5" fill="#0000ff"/><rect x="873" y="437" width="5" height="5" fill="#0000ff"/><rect x="878" y="437" width="5" height="5" fill="#0000ff"/><rect x="883" y="437" width="5" height="5" fill="#0a00ff"/><rect x="888" y="437" width="5" height="5" fill="#1700ff"/><rect x="893" y="437" width="5" height="5" fill="#2500ff"/><rect x="898" y="437" width="5" height="5" fill="#3300ff"/><rect x="903" y="437" width="5" height="5" fill="#4100ff"/><rect x="908" y="437" width="5" height="5" fill="#4f00ff"/><rect x="913" y="437" width="5" height="5" fill="#5e00ff"/><rect x="918" y="437" width="5" height="5" fill="#6e00ff"/><rect x="863" y="442" width="5" height="5" fill="#0000ff"/><rect x="868" y="442" width="5" height="5" fill="#0000ff"/><rect x="873" y="442" width="5" height="5" fill="#0000ff"/><rect x="878" y="442" width="5" height="5" fill="#0000ff"/><rect x="883" y="442" width="5" height="5" fill="#0a00ff"/><rect x="888" y="442" width="5" height="5" fill="#1700ff"/><rect x="893" y="442" width="5" height="5" fill="#2500ff"/><rect x="898" y="442" width="5" height="5" fill="#3300ff"/><rect x="903" y="442" width="5" height="5" fill="#4100ff"/><rect x="868" y="447" width="5" height="5" fill="#0000ff"/><rect x="873" y="447" width="5" height="5" fill="#0000ff"/><rect x="878" y="447" width="5" height="5" fill="#0000ff"/><rect x="883" y="447" width="5" height="5" fill="#0a00ff"/><rect x="888" y="447" width="5" height="5" fill="#1700ff"/><rect x="893" y="447" width="5" height="5" fill="#2500ff"/></g></g>
<path d="M879.6,446.7 C879.5,446.7 879.0,446.8 878.8,446.7 C878.6,446.7 878.6,446.7 878.5,446.6 C878.4,446.6 878.2,446.5 878.0,446.4 C877.9,446.3 877.7,446.1 877.5,446.0 C877.2,445.8 876.9,445.6 876.6,445.4 C876.3,445.1 876.0,444.8 875.6,444.5 C875.2,444.2 874.8,443.9 874.3,443.5 C873.7,443.0 873.1,442.6 872.4,442.0 C871.7,441.5 871.0,440.9 870.1,440.2 C869.2,439.5 868.3,438.7 867.2,437.6 C866.2,436.6 865.1,435.6 863.7,433.9 C862.4,432.2 860.8,430.2 859.0,427.4 C857.3,424.5 855.3,421.3 853.1,416.8 C850.8,412.2 848.4,406.9 845.5,400.0 C842.7,393.0 839.4,385.0 836.3,375.1 C833.1,365.2 829.8,353.6 826.7,340.6 C823.6,327.7 820.2,312.4 817.7,297.6 C815.1,282.8 812.7,266.4 811.4,251.7 C810.0,236.9 809.2,222.0 809.6,209.1 C810.0,196.2 811.3,183.8 813.7,174.2 C816.1,164.6 819.9,156.7 824.0,151.6 C828.1,146.5 833.4,144.5 838.6,143.7 C843.7,142.8 849.5,144.7 855.0,146.4 C860.5,148.1 866.2,151.1 871.6,153.9 C877.0,156.6 882.2,159.6 887.3,162.7 C892.5,165.9 897.4,169.2 902.4,172.7 C907.4,176.2 912.4,179.9 917.3,183.7 C922.2,187.5 927.1,191.4 932.0,195.4 C936.9,199.4 941.8,203.5 946.7,207.6 C951.6,211.7 956.5,216.0 961.4,220.2 C966.3,224.4 971.2,228.7 976.1,232.9 C980.9,237.2 985.8,241.5 990.6,245.7 C995.4,249.9 1000.2,254.2 1004.9,258.3 C1009.6,262.5 1014.2,266.6 1018.8,270.6 C1023.3,274.6 1027.8,278.6 1032.0,282.4 C1036.3,286.2 1040.6,289.9 1044.6,293.4 C1048.5,296.9 1052.4,300.4 1055.9,303.5 C1059.5,306.7 1062.7,309.6 1065.9,312.3 C1069.0,315.1 1071.9,317.7 1074.6,320.0 C1077.2,322.4 1079.6,324.5 1081.8,326.4 C1084.0,328.3 1085.9,330.1 1087.7,331.6 C1089.5,333.2 1091.0,334.5 1092.4,335.8 C1093.8,337.0 1095.0,338.1 1096.1,339.1 C1097.2,340.1 1098.2,340.9 1099.1,341.7 C1100.0,342.6 1100.9,343.3 1101.6,344.0 C1102.4,344.7 1103.1,345.3 1103.7,345.8 C1104.3,346.3 1104.9,346.8 1105.3,347.2 C1105.8,347.6 1106.2,348.0 1106.6,348.3 C1106.9,348.6 1107.2,348.9 1107.5,349.2 C1107.8,349.4 1108.0,349.6 1108.2,349.8 C1108.4,350.0 1108.5,350.1 1108.7,350.2 C1108.8,350.3 1108.9,350.4 1109.0,350.5 C1109.1,350.6 1109.2,350.7 1109.3,350.8 C1109.4,350.9 1109.5,351.0 1109.6,351.0 C1109.7,351.1 1109.8,351.2 1109.9,351.3 C1109.9,351.3 1110.0,351.4 1110.0,351.4 C1110.1,351.4 1110.1,351.5 1110.1,351.5 C1110.1,351.5 1110.1,351.5 1110.1,351.5 Z" fill="none" stroke="#111" stroke-width="1"/>
<g clip-path="url(#plotclip)"><path d="M879.6,446.7l0.0,5.0M879.6,446.7l1.4,4.8M879.5,446.7l1.1,4.9M879.4,446.7l0.9,4.9M879.3,446.7l0.7,4.9M879.1,446.7l0.0,5.0M879.0,446.7l0.0,5.0M878.8,446.7l-1.1,4.9M878.5,446.6l-2.2,4.5M878.0,446.4l-2.7,4.2M877.5,446.0l-3.0,4.0M876.6,445.4l-3.1,3.9M875.6,444.5l-3.1,3.9M874.3,443.5l-3.1,4.0M872.4,442.0l-3.1,3.9M870.1,440.2l-3.2,3.8M867.2,437.6l-3.5,3.6M863.7,433.9l-3.9,3.1M859.0,427.4l-4.2,2.6M853.1,416.8l-4.5,2.2M845.5,400.0l-4.6,1.9M836.3,375.1l-4.8,1.5M826.7,340.6l-4.9,1.2M817.7,297.6l-4.9,0.8M811.4,251.7l-5.0,0.5M809.6,209.1l-5.0,-0.2M813.7,174.2l-4.9,-1.2M824.0,151.6l-3.9,-3.2M838.6,143.7l-0.8,-4.9M855.0,146.4l1.5,-4.8M871.6,153.9l2.2,-4.5M887.3,162.7l2.6,-4.3M902.4,172.7l2.9,-4.1M917.3,183.7l3.0,-4.0M932.0,195.4l3.2,-3.9M946.7,207.6l3.2,-3.8M961.4,220.2l3.3,-3.8M976.1,232.9l3.3,-3.8M990.6,245.7l3.3,-3.8M1004.9,258.3l3.3,-3.7M1018.8,270.6l3.3,-3.7M1032.0,282.4l3.3,-3.7M1044.6,293.4l3.3,-3.7M1055.9,303.5l3.3,-3.7M1065.9,312.3l3.3,-3.7M1074.6,320.0l3.3,-3.7M1081.8,326.4l3.3,-3.7M1087.7,331.6l3.3,-3.7M1092.4,335.8l3.3,-3.7M1096.1,339.1l3.3,-3.7M1099.1,341.7l3.3,-3.7M1101.6,344.0l3.3,-3.7M1103.7,345.8l3.3,-3.8M1105.3,347.2l3.3,-3.8M1106.6,348.3l3.3,-3.7M1107.5,349.2l3.3,-3.7M1108.2,349.8l3.3,-3.7M1108.7,350.2l3.3,-3.7M1109.0,350.5l3.3,-3.7M1109.3,350.8l3.3,-3.7M1109.6,351.0l3.3,-3.7M1109.9,351.3l3.3,-3.7M1110.0,351.4l3.3,-3.7M1110.1,351.5l3.3,-3.7M1110.1,351.5l3.3,-3.7" stroke="#000" stroke-width="1.1" fill="none"/></g>
<defs><clipPath id="plotclip"><rect x="808.0" y="119.45999999999998" width="329.0" height="329.04"/></clipPath></defs>
<g clip-path="url(#plotclip)" font-family='"Liberation Serif", serif'><text x="828.2" y="135.3" font-size="13.5" fill="#2424c0" stroke="#2424c0" stroke-width="0.15" textLength="19.5" lengthAdjust="spacingAndGlyphs">520</text><text x="905.4" y="165.0" font-size="13.5" fill="#2424c0" stroke="#2424c0" stroke-width="0.15" textLength="19.5" lengthAdjust="spacingAndGlyphs">540</text><text x="964" y="212.9" font-size="13.5" fill="#2424c0" stroke="#2424c0" stroke-width="0.15" textLength="19.5" lengthAdjust="spacingAndGlyphs">560</text><text x="1022.8" y="264.4" font-size="13.5" fill="#2424c0" stroke="#2424c0" stroke-width="0.15" textLength="19.5" lengthAdjust="spacingAndGlyphs">580</text><text x="1070.4" y="306.4" font-size="13.5" fill="#2424c0" stroke="#2424c0" stroke-width="0.15" textLength="19.5" lengthAdjust="spacingAndGlyphs">600</text><text x="1096.8" y="329.5" font-size="13.5" fill="#2424c0" stroke="#2424c0" stroke-width="0.15" textLength="19.5" lengthAdjust="spacingAndGlyphs">620</text><text x="1118.4" y="355.0" font-size="13.5" fill="#2424c0" stroke="#2424c0" stroke-width="0.15" textLength="19.5" lengthAdjust="spacingAndGlyphs">700</text><text x="809" y="351.2" font-size="13.5" fill="#2424c0" stroke="#2424c0" stroke-width="0.15" textLength="19.5" lengthAdjust="spacingAndGlyphs">490</text><text x="819.3" y="405.9" font-size="13.5" fill="#2424c0" stroke="#2424c0" stroke-width="0.15" textLength="19.5" lengthAdjust="spacingAndGlyphs">480</text><text x="832.9" y="433.09999999999997" font-size="13.5" fill="#2424c0" stroke="#2424c0" stroke-width="0.15" textLength="19.5" lengthAdjust="spacingAndGlyphs">470</text><text x="840.9" y="446.7" font-size="13.5" fill="#2424c0" stroke="#2424c0" stroke-width="0.15" textLength="19.5" lengthAdjust="spacingAndGlyphs">460</text><text x="882.3" y="453.9" font-size="13.5" fill="#2424c0" stroke="#2424c0" stroke-width="0.15" textLength="19.5" lengthAdjust="spacingAndGlyphs">380</text></g>
<path d="M1005.9,290.6 L995.6,292.8 L987.8,306.2 L996.9,304.3 Z M995.6,292.8 L984.8,296.2 L978.5,309.1 L987.8,306.2 Z M984.8,296.2 L972.3,301.7 L967.9,313.6 L978.5,309.1 Z M972.7,300.7 L961.6,306.9 L958.9,317.7 L968.3,312.6 Z M961.6,306.9 L953.9,311.9 L952.4,321.8 L958.9,317.7 Z M954.0,311.0 L946.8,316.3 L946.4,325.3 L952.6,321.0 Z M946.8,316.3 L939.9,321.9 L940.5,329.9 L946.4,325.3 Z M939.8,321.2 L932.5,327.7 L934.2,334.7 L940.5,329.3 Z " fill="none" stroke="#1c1cd0" stroke-width="1.2"/>
<circle cx="960.2" cy="314.0" r="1.8" fill="none" stroke="#000" stroke-width="1.2"/>
<path d="M11.6,502.5 H4.5 V738.5 H1155.5 V502.5 H141.2" fill="none" stroke="#dcdcdc" stroke-width="1"/>
<text x="14.6" y="507.5" font-size="14" fill="#000" textLength="123.6" lengthAdjust="spacingAndGlyphs" >Measurement Data</text>
<rect x="7" y="515" width="1146" height="216" fill="#ababab" />
<rect x="9" y="517" width="1144" height="28" fill="#ffffff" />
<rect x="9" y="517" width="49.5" height="28" fill="#bcdcf4" />
<rect x="9" y="545" width="1144" height="24" fill="#ffffff" />
<rect x="9" y="569" width="1144" height="24" fill="#0078d7" />
<path d="M58.5,517V545 M208.5,517V545 M308.5,517V545 M408.5,517V545 M508.5,517V545 M608.5,517V545 M708.5,517V545 M808.5,517V545 M908.5,517V545 M1008.5,517V545 M1108.5,517V545 M58.5,545V593 M208.5,545V593 M308.5,545V593 M408.5,545V593 M508.5,545V593 M608.5,545V593 M708.5,545V593 M808.5,545V593 M908.5,545V593 M1008.5,545V593 M1108.5,545V593 M9,545.5H1153 M9,569.5H1153 " stroke="#a0a0a0" stroke-width="1" fill="none"/>
<g clip-path="url(#gridclip)">
<text x="17" y="536.6" font-size="14" fill="#000" >#</text>
<text x="13.5" y="562.9" font-size="14" fill="#000" >1</text>
<text x="13.5" y="586.7" font-size="14" fill="#ffffff" >2</text>
<text x="67.5" y="536.6" font-size="14" fill="#000" >Date</text>
<text x="63" y="562.9" font-size="14" fill="#000" >14-48-03</text>
<text x="63" y="586.7" font-size="14" fill="#ffffff" >14-48-38</text>
<text x="217.5" y="536.6" font-size="14" fill="#000" >Iv(mcd)</text>
<text x="213" y="562.9" font-size="14" fill="#000" >3018.90</text>
<text x="213" y="586.7" font-size="14" fill="#ffffff" >4612.78</text>
<text x="317.5" y="536.6" font-size="14" fill="#000" >Ie(mW/sr)</text>
<text x="313" y="562.9" font-size="14" fill="#000" >924.2717</text>
<text x="313" y="586.7" font-size="14" fill="#ffffff" >1411.6005</text>
<text x="417.5" y="536.6" font-size="14" fill="#000" >CCT(K)</text>
<text x="413" y="562.9" font-size="14" fill="#000" >4270</text>
<text x="413" y="586.7" font-size="14" fill="#ffffff" >4234</text>
<text x="517.5" y="536.6" font-size="14" fill="#000" >CRI(Ra)</text>
<text x="513" y="562.9" font-size="14" fill="#000" >84.11</text>
<text x="513" y="586.7" font-size="14" fill="#ffffff" >84.02</text>
<text x="617.5" y="536.6" font-size="14" fill="#000" >CIE-x</text>
<text x="613" y="562.9" font-size="14" fill="#000" >0.3689</text>
<text x="613" y="586.7" font-size="14" fill="#ffffff" >0.3701</text>
<text x="717.5" y="536.6" font-size="14" fill="#000" >CIE-y</text>
<text x="713" y="562.9" font-size="14" fill="#000" >0.3678</text>
<text x="713" y="586.7" font-size="14" fill="#ffffff" >0.3679</text>
<text x="817.5" y="536.6" font-size="14" fill="#000" >CIE-u'</text>
<text x="813" y="562.9" font-size="14" fill="#000" >0.2211</text>
<text x="813" y="586.7" font-size="14" fill="#ffffff" >0.2218</text>
<text x="917.5" y="536.6" font-size="14" fill="#000" >CIE-v'</text>
<text x="913" y="562.9" font-size="14" fill="#000" >0.4958</text>
<text x="913" y="586.7" font-size="14" fill="#ffffff" >0.4961</text>
<text x="1017.5" y="536.6" font-size="14" fill="#000" >Δu'v'</text>
<text x="1013" y="562.9" font-size="14" fill="#000" >0.0017</text>
<text x="1013" y="586.7" font-size="14" fill="#ffffff" >0.0025</text>
<text x="1117.5" y="536.6" font-size="14" fill="#000" >SDCM</text>
<text x="1113" y="562.9" font-size="14" fill="#000" >6.04</text>
<text x="1113" y="586.7" font-size="14" fill="#ffffff" >5.56</text>
</g>
<defs><clipPath id="gridclip"><rect x="9" y="517" width="1143" height="200"/></clipPath></defs>
<rect x="8" y="713" width="1144" height="17" fill="#f0f0f0" />
<line x1="8" y1="713.5" x2="1152" y2="713.5" stroke="#ffffff" stroke-width="1" />
<line x1="8" y1="729.5" x2="1152" y2="729.5" stroke="#ffffff" stroke-width="1" />
<rect x="25.5" y="714" width="633" height="15" fill="#cdcdcd" />
<path d="M19,717 L15,721 L19,725" fill="none" stroke="#606060" stroke-width="1.6"/>
<path d="M1143,717 L1147,721 L1143,725" fill="none" stroke="#606060" stroke-width="1.6"/>
<rect x="7.5" y="515.5" width="1145" height="215" fill="none" stroke="#000" stroke-width="1" />
<rect x="1155.5" y="83.5" width="191" height="656" fill="#ffffff" stroke="#d9d9d9" stroke-width="1" />
<path d="M1156,84 V57.5 H1226.5 V84" fill="#ffffff" stroke="#d9d9d9" stroke-width="1"/>
<rect x="1157" y="83" width="69" height="2" fill="#ffffff" />
<text x="1163.2" y="75.1" font-size="14" fill="#000" textLength="55.2" lengthAdjust="spacingAndGlyphs" >Intensity</text>
<rect x="1163" y="89" width="178" height="644" fill="#f0f0f0" />
<rect x="1163" y="90" width="161" height="25" fill="#ffffff" />
<rect x="1163" y="90" width="60.5" height="25" fill="#bcdcf4" />
<text x="1173.7" y="108" font-size="14" fill="#000" >nm</text>
<text x="1232.5" y="108" font-size="14" fill="#000" textLength="42.4" lengthAdjust="spacingAndGlyphs" >mW/sr</text>
<rect x="1163" y="115" width="161" height="24" fill="#0078d7" />
<text x="1168.2" y="132.6" font-size="14" fill="#ffffff" textLength="35.3" lengthAdjust="spacingAndGlyphs" >350.0</text>
<text x="1228.1" y="132.6" font-size="14" fill="#ffffff" textLength="43.3" lengthAdjust="spacingAndGlyphs" >0.0000</text>
<rect x="1163" y="139" width="161" height="24" fill="#ffffff" />
<text x="1168.2" y="156.6" font-size="14" fill="#000" textLength="35.3" lengthAdjust="spacingAndGlyphs" >350.5</text>
<text x="1228.1" y="156.6" font-size="14" fill="#000" textLength="43.3" lengthAdjust="spacingAndGlyphs" >0.0000</text>
<rect x="1163" y="163" width="161" height="24" fill="#ffffff" />
<text x="1168.2" y="180.6" font-size="14" fill="#000" textLength="35.3" lengthAdjust="spacingAndGlyphs" >351.0</text>
<text x="1228.1" y="180.6" font-size="14" fill="#000" textLength="43.3" lengthAdjust="spacingAndGlyphs" >0.0000</text>
<rect x="1163" y="187" width="161" height="24" fill="#ffffff" />
<text x="1168.2" y="204.6" font-size="14" fill="#000" textLength="35.3" lengthAdjust="spacingAndGlyphs" >351.5</text>
<text x="1228.1" y="204.6" font-size="14" fill="#000" textLength="43.3" lengthAdjust="spacingAndGlyphs" >0.0000</text>
<rect x="1163" y="211" width="161" height="24" fill="#ffffff" />
<text x="1168.2" y="228.6" font-size="14" fill="#000" textLength="35.3" lengthAdjust="spacingAndGlyphs" >352.0</text>
<text x="1228.1" y="228.6" font-size="14" fill="#000" textLength="43.3" lengthAdjust="spacingAndGlyphs" >0.0000</text>
<rect x="1163" y="235" width="161" height="24" fill="#ffffff" />
<text x="1168.2" y="252.6" font-size="14" fill="#000" textLength="35.3" lengthAdjust="spacingAndGlyphs" >352.5</text>
<text x="1228.1" y="252.6" font-size="14" fill="#000" textLength="43.3" lengthAdjust="spacingAndGlyphs" >0.0000</text>
<rect x="1163" y="259" width="161" height="24" fill="#ffffff" />
<text x="1168.2" y="276.6" font-size="14" fill="#000" textLength="35.3" lengthAdjust="spacingAndGlyphs" >353.0</text>
<text x="1228.1" y="276.6" font-size="14" fill="#000" textLength="43.3" lengthAdjust="spacingAndGlyphs" >0.0000</text>
<rect x="1163" y="283" width="161" height="24" fill="#ffffff" />
<text x="1168.2" y="300.6" font-size="14" fill="#000" textLength="35.3" lengthAdjust="spacingAndGlyphs" >353.5</text>
<text x="1228.1" y="300.6" font-size="14" fill="#000" textLength="43.3" lengthAdjust="spacingAndGlyphs" >0.0000</text>
<rect x="1163" y="307" width="161" height="24" fill="#ffffff" />
<text x="1168.2" y="324.6" font-size="14" fill="#000" textLength="35.3" lengthAdjust="spacingAndGlyphs" >354.0</text>
<text x="1228.1" y="324.6" font-size="14" fill="#000" textLength="43.3" lengthAdjust="spacingAndGlyphs" >0.0000</text>
<rect x="1163" y="331" width="161" height="24" fill="#ffffff" />
<text x="1168.2" y="348.6" font-size="14" fill="#000" textLength="35.3" lengthAdjust="spacingAndGlyphs" >354.5</text>
<text x="1228.1" y="348.6" font-size="14" fill="#000" textLength="43.3" lengthAdjust="spacingAndGlyphs" >0.0000</text>
<rect x="1163" y="355" width="161" height="24" fill="#ffffff" />
<text x="1168.2" y="372.6" font-size="14" fill="#000" textLength="35.3" lengthAdjust="spacingAndGlyphs" >355.0</text>
<text x="1228.1" y="372.6" font-size="14" fill="#000" textLength="43.3" lengthAdjust="spacingAndGlyphs" >0.0000</text>
<rect x="1163" y="379" width="161" height="24" fill="#ffffff" />
<text x="1168.2" y="396.6" font-size="14" fill="#000" textLength="35.3" lengthAdjust="spacingAndGlyphs" >355.5</text>
<text x="1228.1" y="396.6" font-size="14" fill="#000" textLength="43.3" lengthAdjust="spacingAndGlyphs" >0.0000</text>
<rect x="1163" y="403" width="161" height="24" fill="#ffffff" />
<text x="1168.2" y="420.6" font-size="14" fill="#000" textLength="35.3" lengthAdjust="spacingAndGlyphs" >356.0</text>
<text x="1228.1" y="420.6" font-size="14" fill="#000" textLength="43.3" lengthAdjust="spacingAndGlyphs" >0.0000</text>
<rect x="1163" y="427" width="161" height="24" fill="#ffffff" />
<text x="1168.2" y="444.6" font-size="14" fill="#000" textLength="35.3" lengthAdjust="spacingAndGlyphs" >356.5</text>
<text x="1228.1" y="444.6" font-size="14" fill="#000" textLength="43.3" lengthAdjust="spacingAndGlyphs" >0.0000</text>
<rect x="1163" y="451" width="161" height="24" fill="#ffffff" />
<text x="1168.2" y="468.6" font-size="14" fill="#000" textLength="35.3" lengthAdjust="spacingAndGlyphs" >357.0</text>
<text x="1228.1" y="468.6" font-size="14" fill="#000" textLength="43.3" lengthAdjust="spacingAndGlyphs" >0.0000</text>
<rect x="1163" y="475" width="161" height="24" fill="#ffffff" />
<text x="1168.2" y="492.6" font-size="14" fill="#000" textLength="35.3" lengthAdjust="spacingAndGlyphs" >357.5</text>
<text x="1228.1" y="492.6" font-size="14" fill="#000" textLength="43.3" lengthAdjust="spacingAndGlyphs" >0.0000</text>
<rect x="1163" y="499" width="161" height="24" fill="#ffffff" />
<text x="1168.2" y="516.6" font-size="14" fill="#000" textLength="35.3" lengthAdjust="spacingAndGlyphs" >358.0</text>
<text x="1228.1" y="516.6" font-size="14" fill="#000" textLength="43.3" lengthAdjust="spacingAndGlyphs" >0.0000</text>
<rect x="1163" y="523" width="161" height="24" fill="#ffffff" />
<text x="1168.2" y="540.6" font-size="14" fill="#000" textLength="35.3" lengthAdjust="spacingAndGlyphs" >358.5</text>
<text x="1228.1" y="540.6" font-size="14" fill="#000" textLength="43.3" lengthAdjust="spacingAndGlyphs" >0.0000</text>
<rect x="1163" y="547" width="161" height="24" fill="#ffffff" />
<text x="1168.2" y="564.6" font-size="14" fill="#000" textLength="35.3" lengthAdjust="spacingAndGlyphs" >359.0</text>
<text x="1228.1" y="564.6" font-size="14" fill="#000" textLength="43.3" lengthAdjust="spacingAndGlyphs" >0.0000</text>
<rect x="1163" y="571" width="161" height="24" fill="#ffffff" />
<text x="1168.2" y="588.6" font-size="14" fill="#000" textLength="35.3" lengthAdjust="spacingAndGlyphs" >359.5</text>
<text x="1228.1" y="588.6" font-size="14" fill="#000" textLength="43.3" lengthAdjust="spacingAndGlyphs" >0.0000</text>
<rect x="1163" y="595" width="161" height="24" fill="#ffffff" />
<text x="1168.2" y="612.6" font-size="14" fill="#000" textLength="35.3" lengthAdjust="spacingAndGlyphs" >360.0</text>
<text x="1228.1" y="612.6" font-size="14" fill="#000" textLength="43.3" lengthAdjust="spacingAndGlyphs" >0.0000</text>
<rect x="1163" y="619" width="161" height="24" fill="#ffffff" />
<text x="1168.2" y="636.6" font-size="14" fill="#000" textLength="35.3" lengthAdjust="spacingAndGlyphs" >360.5</text>
<text x="1228.1" y="636.6" font-size="14" fill="#000" textLength="43.3" lengthAdjust="spacingAndGlyphs" >0.0000</text>
<rect x="1163" y="643" width="161" height="24" fill="#ffffff" />
<text x="1168.2" y="660.6" font-size="14" fill="#000" textLength="35.3" lengthAdjust="spacingAndGlyphs" >361.0</text>
<text x="1228.1" y="660.6" font-size="14" fill="#000" textLength="43.3" lengthAdjust="spacingAndGlyphs" >0.0000</text>
<rect x="1163" y="667" width="161" height="24" fill="#ffffff" />
<text x="1168.2" y="684.6" font-size="14" fill="#000" textLength="35.3" lengthAdjust="spacingAndGlyphs" >361.5</text>
<text x="1228.1" y="684.6" font-size="14" fill="#000" textLength="43.3" lengthAdjust="spacingAndGlyphs" >0.0000</text>
<rect x="1163" y="691" width="161" height="24" fill="#ffffff" />
<text x="1168.2" y="708.6" font-size="14" fill="#000" textLength="35.3" lengthAdjust="spacingAndGlyphs" >362.0</text>
<text x="1228.1" y="708.6" font-size="14" fill="#000" textLength="43.3" lengthAdjust="spacingAndGlyphs" >0.0000</text>
<path d="M1163,139.5H1324 M1163,163.5H1324 M1163,187.5H1324 M1163,211.5H1324 M1163,235.5H1324 M1163,259.5H1324 M1163,283.5H1324 M1163,307.5H1324 M1163,331.5H1324 M1163,355.5H1324 M1163,379.5H1324 M1163,403.5H1324 M1163,427.5H1324 M1163,451.5H1324 M1163,475.5H1324 M1163,499.5H1324 M1163,523.5H1324 M1163,547.5H1324 M1163,571.5H1324 M1163,595.5H1324 M1163,619.5H1324 M1163,643.5H1324 M1163,667.5H1324 M1163,691.5H1324 M1163,715.5H1324 M1223.5,115V715 " stroke="#a0a0a0" stroke-width="1" fill="none"/>
<rect x="1324" y="90" width="17" height="626" fill="#f0f0f0" />
<rect x="1325" y="106.5" width="14.5" height="16" fill="#cdcdcd" />
<path d="M1328.5,100.5 L1332.5,96.5 L1336.5,100.5" fill="none" stroke="#606060" stroke-width="1.6"/>
<path d="M1328.5,705.5 L1332.5,709.5 L1336.5,705.5" fill="none" stroke="#606060" stroke-width="1.6"/>
<rect x="1163" y="716" width="161" height="17" fill="#f0f0f0" />
<rect x="1180" y="717.5" width="119" height="14" fill="#cdcdcd" />
<path d="M1173,727 L1169,723 L1173,719" fill="none" stroke="#606060" stroke-width="1.6"/>
<path d="M1314,719 L1318,723 L1314,727" fill="none" stroke="#606060" stroke-width="1.6"/>
<rect x="1162.5" y="88.5" width="179" height="645" fill="none" stroke="#000" stroke-width="1" />
<line x1="0" y1="738.5" x2="1352" y2="738.5" stroke="#dcdcdc" stroke-width="1" />
<text x="3.6" y="753.6" font-size="12.2" fill="#000" textLength="323" lengthAdjust="spacingAndGlyphs" >Device connect state : success, Serial number : SRI-150407</text>
<rect x="1348" y="748" width="2" height="2" fill="#b8b8b8"/><rect x="1345" y="751" width="2" height="2" fill="#b8b8b8"/><rect x="1348" y="751" width="2" height="2" fill="#b8b8b8"/><rect x="1342" y="754" width="2" height="2" fill="#b8b8b8"/><rect x="1345" y="754" width="2" height="2" fill="#b8b8b8"/><rect x="1348" y="754" width="2" height="2" fill="#b8b8b8"/></svg></body></html>
